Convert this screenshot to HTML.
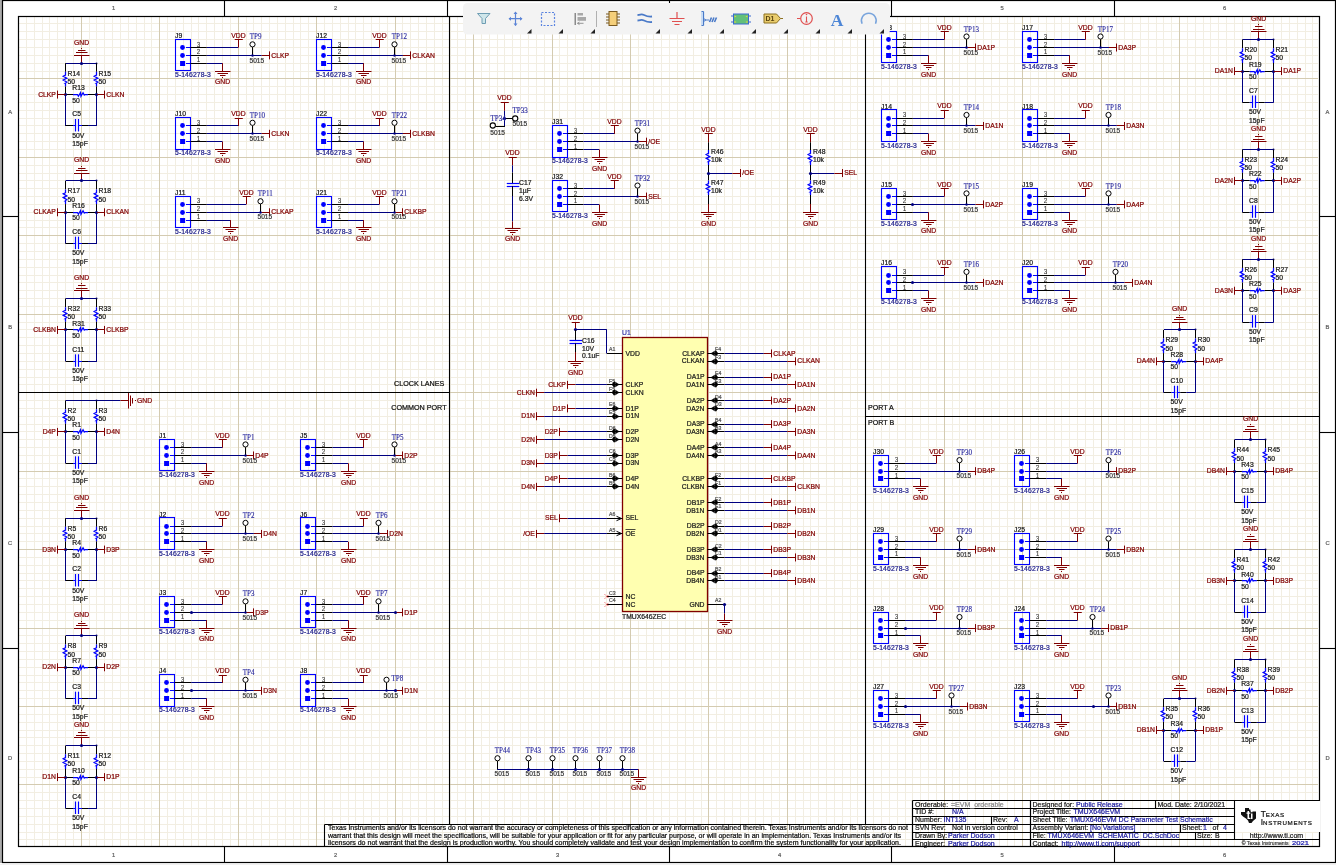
<!DOCTYPE html>
<html><head><meta charset="utf-8"><style>html,body{margin:0;padding:0;background:#fff;overflow:hidden}svg{display:block;will-change:transform}</style></head><body>
<svg width="1336" height="865" viewBox="0 0 1336 865">
<rect x="0" y="0" width="1336" height="865" fill="#ffffff"/>
<rect x="0" y="0" width="2" height="863" fill="#acacac"/>
<rect x="0" y="864" width="1336" height="1" fill="#f0f0f0"/>
<path d="M26.5,17V846M34.5,17V846M42.5,17V846M49.5,17V846M57.5,17V846M65.5,17V846M73.5,17V846M89.5,17V846M96.5,17V846M104.5,17V846M112.5,17V846M120.5,17V846M128.5,17V846M136.5,17V846M144.5,17V846M151.5,17V846M167.5,17V846M175.5,17V846M183.5,17V846M191.5,17V846M198.5,17V846M206.5,17V846M214.5,17V846M222.5,17V846M230.5,17V846M246.5,17V846M253.5,17V846M261.5,17V846M269.5,17V846M277.5,17V846M285.5,17V846M293.5,17V846M300.5,17V846M308.5,17V846M324.5,17V846M332.5,17V846M340.5,17V846M348.5,17V846M355.5,17V846M363.5,17V846M371.5,17V846M379.5,17V846M387.5,17V846M402.5,17V846M410.5,17V846M418.5,17V846M426.5,17V846M434.5,17V846M442.5,17V846M450.5,17V846M457.5,17V846M465.5,17V846M481.5,17V846M489.5,17V846M497.5,17V846M504.5,17V846M512.5,17V846M520.5,17V846M528.5,17V846M536.5,17V846M544.5,17V846M559.5,17V846M567.5,17V846M575.5,17V846M583.5,17V846M591.5,17V846M599.5,17V846M606.5,17V846M614.5,17V846M622.5,17V846M638.5,17V846M646.5,17V846M653.5,17V846M661.5,17V846M669.5,17V846M677.5,17V846M685.5,17V846M693.5,17V846M701.5,17V846M716.5,17V846M724.5,17V846M732.5,17V846M740.5,17V846M748.5,17V846M755.5,17V846M763.5,17V846M771.5,17V846M779.5,17V846M795.5,17V846M803.5,17V846M810.5,17V846M818.5,17V846M826.5,17V846M834.5,17V846M842.5,17V846M850.5,17V846M857.5,17V846M873.5,17V846M881.5,17V846M889.5,17V846M897.5,17V846M905.5,17V846M912.5,17V846M920.5,17V846M928.5,17V846M936.5,17V846M952.5,17V846M959.5,17V846M967.5,17V846M975.5,17V846M983.5,17V846M991.5,17V846M999.5,17V846M1007.5,17V846M1014.5,17V846M1030.5,17V846M1038.5,17V846M1046.5,17V846M1054.5,17V846M1061.5,17V846M1069.5,17V846M1077.5,17V846M1085.5,17V846M1093.5,17V846M1108.5,17V846M1116.5,17V846M1124.5,17V846M1132.5,17V846M1140.5,17V846M1148.5,17V846M1156.5,17V846M1163.5,17V846M1171.5,17V846M1187.5,17V846M1195.5,17V846M1203.5,17V846M1210.5,17V846M1218.5,17V846M1226.5,17V846M1234.5,17V846M1242.5,17V846M1250.5,17V846M1265.5,17V846M1273.5,17V846M1281.5,17V846M1289.5,17V846M1297.5,17V846M1305.5,17V846M1312.5,17V846M19,23.5H1318M19,31.5H1318M19,39.5H1318M19,47.5H1318M19,55.5H1318M19,63.5H1318M19,71.5H1318M19,86.5H1318M19,94.5H1318M19,102.5H1318M19,110.5H1318M19,118.5H1318M19,125.5H1318M19,133.5H1318M19,141.5H1318M19,149.5H1318M19,165.5H1318M19,173.5H1318M19,180.5H1318M19,188.5H1318M19,196.5H1318M19,204.5H1318M19,212.5H1318M19,220.5H1318M19,227.5H1318M19,243.5H1318M19,251.5H1318M19,259.5H1318M19,267.5H1318M19,275.5H1318M19,282.5H1318M19,290.5H1318M19,298.5H1318M19,306.5H1318M19,322.5H1318M19,329.5H1318M19,337.5H1318M19,345.5H1318M19,353.5H1318M19,361.5H1318M19,369.5H1318M19,377.5H1318M19,384.5H1318M19,400.5H1318M19,408.5H1318M19,416.5H1318M19,424.5H1318M19,431.5H1318M19,439.5H1318M19,447.5H1318M19,455.5H1318M19,463.5H1318M19,478.5H1318M19,486.5H1318M19,494.5H1318M19,502.5H1318M19,510.5H1318M19,518.5H1318M19,526.5H1318M19,533.5H1318M19,541.5H1318M19,557.5H1318M19,565.5H1318M19,573.5H1318M19,580.5H1318M19,588.5H1318M19,596.5H1318M19,604.5H1318M19,612.5H1318M19,620.5H1318M19,635.5H1318M19,643.5H1318M19,651.5H1318M19,659.5H1318M19,667.5H1318M19,675.5H1318M19,682.5H1318M19,690.5H1318M19,698.5H1318M19,714.5H1318M19,722.5H1318M19,730.5H1318M19,737.5H1318M19,745.5H1318M19,753.5H1318M19,761.5H1318M19,769.5H1318M19,777.5H1318M19,792.5H1318M19,800.5H1318M19,808.5H1318M19,816.5H1318M19,824.5H1318M19,832.5H1318M19,839.5H1318" stroke="#f2eee2" stroke-width="1" fill="none"/>
<path d="M81.5,17V846M159.5,17V846M238.5,17V846M316.5,17V846M395.5,17V846M473.5,17V846M552.5,17V846M630.5,17V846M708.5,17V846M787.5,17V846M865.5,17V846M944.5,17V846M1022.5,17V846M1101.5,17V846M1179.5,17V846M1258.5,17V846M19,78.5H1318M19,157.5H1318M19,235.5H1318M19,314.5H1318M19,392.5H1318M19,471.5H1318M19,549.5H1318M19,628.5H1318M19,706.5H1318M19,784.5H1318" stroke="#d4cbb1" stroke-width="1" fill="none"/>
<rect x="2.5" y="0.5" width="1333" height="862" fill="none" stroke="#000" stroke-width="1.2"/>
<rect x="18.5" y="16.5" width="1301" height="830" fill="none" stroke="#000" stroke-width="1.2"/>
<line x1="224.50" y1="0.00" x2="224.50" y2="16.50" stroke="#000" stroke-width="1.1"/>
<line x1="224.50" y1="846.50" x2="224.50" y2="862.50" stroke="#000" stroke-width="1.1"/>
<line x1="447.50" y1="0.00" x2="447.50" y2="16.50" stroke="#000" stroke-width="1.1"/>
<line x1="447.50" y1="846.50" x2="447.50" y2="862.50" stroke="#000" stroke-width="1.1"/>
<line x1="669.50" y1="0.00" x2="669.50" y2="16.50" stroke="#000" stroke-width="1.1"/>
<line x1="669.50" y1="846.50" x2="669.50" y2="862.50" stroke="#000" stroke-width="1.1"/>
<line x1="891.50" y1="0.00" x2="891.50" y2="16.50" stroke="#000" stroke-width="1.1"/>
<line x1="891.50" y1="846.50" x2="891.50" y2="862.50" stroke="#000" stroke-width="1.1"/>
<line x1="1114.50" y1="0.00" x2="1114.50" y2="16.50" stroke="#000" stroke-width="1.1"/>
<line x1="1114.50" y1="846.50" x2="1114.50" y2="862.50" stroke="#000" stroke-width="1.1"/>
<line x1="2.50" y1="216.50" x2="18.50" y2="216.50" stroke="#000" stroke-width="1.1"/>
<line x1="1319.50" y1="216.50" x2="1335.50" y2="216.50" stroke="#000" stroke-width="1.1"/>
<line x1="2.50" y1="432.50" x2="18.50" y2="432.50" stroke="#000" stroke-width="1.1"/>
<line x1="1319.50" y1="432.50" x2="1335.50" y2="432.50" stroke="#000" stroke-width="1.1"/>
<line x1="2.50" y1="648.50" x2="18.50" y2="648.50" stroke="#000" stroke-width="1.1"/>
<line x1="1319.50" y1="648.50" x2="1335.50" y2="648.50" stroke="#000" stroke-width="1.1"/>
<text x="113.50" y="10.19" fill="#606060" stroke="#606060" stroke-width="0.22" font-size="5.8" font-family='"Liberation Sans", sans-serif' text-anchor="middle" font-weight="normal" >1</text>
<text x="113.50" y="856.99" fill="#606060" stroke="#606060" stroke-width="0.22" font-size="5.8" font-family='"Liberation Sans", sans-serif' text-anchor="middle" font-weight="normal" >1</text>
<text x="335.50" y="10.19" fill="#606060" stroke="#606060" stroke-width="0.22" font-size="5.8" font-family='"Liberation Sans", sans-serif' text-anchor="middle" font-weight="normal" >2</text>
<text x="335.50" y="856.99" fill="#606060" stroke="#606060" stroke-width="0.22" font-size="5.8" font-family='"Liberation Sans", sans-serif' text-anchor="middle" font-weight="normal" >2</text>
<text x="557.50" y="10.19" fill="#606060" stroke="#606060" stroke-width="0.22" font-size="5.8" font-family='"Liberation Sans", sans-serif' text-anchor="middle" font-weight="normal" >3</text>
<text x="557.50" y="856.99" fill="#606060" stroke="#606060" stroke-width="0.22" font-size="5.8" font-family='"Liberation Sans", sans-serif' text-anchor="middle" font-weight="normal" >3</text>
<text x="779.50" y="10.19" fill="#606060" stroke="#606060" stroke-width="0.22" font-size="5.8" font-family='"Liberation Sans", sans-serif' text-anchor="middle" font-weight="normal" >4</text>
<text x="779.50" y="856.99" fill="#606060" stroke="#606060" stroke-width="0.22" font-size="5.8" font-family='"Liberation Sans", sans-serif' text-anchor="middle" font-weight="normal" >4</text>
<text x="1002.00" y="10.19" fill="#606060" stroke="#606060" stroke-width="0.22" font-size="5.8" font-family='"Liberation Sans", sans-serif' text-anchor="middle" font-weight="normal" >5</text>
<text x="1002.00" y="856.99" fill="#606060" stroke="#606060" stroke-width="0.22" font-size="5.8" font-family='"Liberation Sans", sans-serif' text-anchor="middle" font-weight="normal" >5</text>
<text x="1224.50" y="10.19" fill="#606060" stroke="#606060" stroke-width="0.22" font-size="5.8" font-family='"Liberation Sans", sans-serif' text-anchor="middle" font-weight="normal" >6</text>
<text x="1224.50" y="856.99" fill="#606060" stroke="#606060" stroke-width="0.22" font-size="5.8" font-family='"Liberation Sans", sans-serif' text-anchor="middle" font-weight="normal" >6</text>
<text x="10.20" y="113.79" fill="#606060" stroke="#606060" stroke-width="0.22" font-size="5.8" font-family='"Liberation Sans", sans-serif' text-anchor="middle" font-weight="normal" >A</text>
<text x="1327.50" y="113.79" fill="#606060" stroke="#606060" stroke-width="0.22" font-size="5.8" font-family='"Liberation Sans", sans-serif' text-anchor="middle" font-weight="normal" >A</text>
<text x="10.20" y="329.29" fill="#606060" stroke="#606060" stroke-width="0.22" font-size="5.8" font-family='"Liberation Sans", sans-serif' text-anchor="middle" font-weight="normal" >B</text>
<text x="1327.50" y="329.29" fill="#606060" stroke="#606060" stroke-width="0.22" font-size="5.8" font-family='"Liberation Sans", sans-serif' text-anchor="middle" font-weight="normal" >B</text>
<text x="10.20" y="544.79" fill="#606060" stroke="#606060" stroke-width="0.22" font-size="5.8" font-family='"Liberation Sans", sans-serif' text-anchor="middle" font-weight="normal" >C</text>
<text x="1327.50" y="544.79" fill="#606060" stroke="#606060" stroke-width="0.22" font-size="5.8" font-family='"Liberation Sans", sans-serif' text-anchor="middle" font-weight="normal" >C</text>
<text x="10.20" y="760.29" fill="#606060" stroke="#606060" stroke-width="0.22" font-size="5.8" font-family='"Liberation Sans", sans-serif' text-anchor="middle" font-weight="normal" >D</text>
<text x="1327.50" y="760.29" fill="#606060" stroke="#606060" stroke-width="0.22" font-size="5.8" font-family='"Liberation Sans", sans-serif' text-anchor="middle" font-weight="normal" >D</text>
<line x1="449.50" y1="16.50" x2="449.50" y2="824.50" stroke="#000" stroke-width="1.1"/>
<line x1="865.50" y1="16.50" x2="865.50" y2="824.50" stroke="#000" stroke-width="1.1"/>
<line x1="18.50" y1="392.50" x2="449.50" y2="392.50" stroke="#000" stroke-width="1.1"/>
<line x1="865.50" y1="416.50" x2="1319.50" y2="416.50" stroke="#000" stroke-width="1.1"/>
<text x="394.00" y="386.09" fill="#111" stroke="#111" stroke-width="0.22" font-size="7.2" font-family='"Liberation Sans", sans-serif' text-anchor="start" font-weight="normal" >CLOCK LANES</text>
<text x="391.20" y="409.69" fill="#111" stroke="#111" stroke-width="0.22" font-size="7.2" font-family='"Liberation Sans", sans-serif' text-anchor="start" font-weight="normal" >COMMON PORT</text>
<text x="868.00" y="409.76" fill="#111" stroke="#111" stroke-width="0.22" font-size="7.1" font-family='"Liberation Sans", sans-serif' text-anchor="start" font-weight="normal" >PORT A</text>
<text x="868.00" y="425.46" fill="#111" stroke="#111" stroke-width="0.22" font-size="7.1" font-family='"Liberation Sans", sans-serif' text-anchor="start" font-weight="normal" >PORT B</text>
<line x1="65.61" y1="63.50" x2="96.99" y2="63.50" stroke="#000080" stroke-width="1"/>
<line x1="81.50" y1="55.41" x2="81.50" y2="63.21" stroke="#800000" stroke-width="1"/>
<line x1="74.00" y1="55.50" x2="89.50" y2="55.50" stroke="#800000" stroke-width="1"/>
<line x1="76.00" y1="52.50" x2="87.50" y2="52.50" stroke="#800000" stroke-width="1"/>
<line x1="78.00" y1="50.50" x2="85.50" y2="50.50" stroke="#800000" stroke-width="1"/>
<rect x="81.00" y="48.00" width="1" height="1" fill="#800000"/>
<text x="81.50" y="44.76" fill="#800000" stroke="#800000" stroke-width="0.22" font-size="6.8" font-family='"Liberation Sans", sans-serif' text-anchor="middle" font-weight="normal" >GND</text>
<circle cx="81.50" cy="63.50" r="1.6" fill="#000080"/>
<circle cx="96.50" cy="63.50" r="1.0" fill="#000080"/>
<line x1="65.50" y1="63.21" x2="65.50" y2="71.81" stroke="#000000" stroke-width="1"/>
<path d="M65.50,71.81 L65.50,75.02 L63.20,76.19 L66.80,78.23 L63.20,79.99 L66.80,82.03 L65.30,83.20 L65.50,83.20 L65.50,86.41" fill="none" stroke="#0000FF" stroke-width="1.25"/>
<line x1="65.50" y1="86.41" x2="65.50" y2="94.59" stroke="#000000" stroke-width="1"/>
<line x1="65.50" y1="94.59" x2="65.50" y2="125.97" stroke="#000080" stroke-width="1"/>
<line x1="96.50" y1="63.21" x2="96.50" y2="71.81" stroke="#000000" stroke-width="1"/>
<path d="M96.50,71.81 L96.50,75.02 L94.20,76.19 L97.80,78.23 L94.20,79.99 L97.80,82.03 L96.30,83.20 L96.50,83.20 L96.50,86.41" fill="none" stroke="#0000FF" stroke-width="1.25"/>
<line x1="96.50" y1="86.41" x2="96.50" y2="94.59" stroke="#000000" stroke-width="1"/>
<line x1="96.50" y1="94.59" x2="96.50" y2="125.97" stroke="#000080" stroke-width="1"/>
<line x1="65.61" y1="94.50" x2="73.00" y2="94.50" stroke="#000000" stroke-width="1"/>
<path d="M73.00,94.50 L77.50,94.50 L78.40,96.30 L80.50,92.70 L80.95,96.30 L83.05,92.70 L84.25,95.00 L85.00,94.50 L88.00,94.50" fill="none" stroke="#0000FF" stroke-width="1.25"/>
<line x1="88.00" y1="94.50" x2="96.99" y2="94.50" stroke="#000000" stroke-width="1"/>
<circle cx="65.50" cy="94.50" r="1.6" fill="#000080"/>
<circle cx="96.50" cy="94.50" r="1.6" fill="#000080"/>
<line x1="65.61" y1="125.50" x2="73.00" y2="125.50" stroke="#000000" stroke-width="1"/>
<line x1="73.00" y1="125.50" x2="75.80" y2="125.50" stroke="#0000FF" stroke-width="1"/>
<line x1="78.80" y1="125.50" x2="82.00" y2="125.50" stroke="#0000FF" stroke-width="1"/>
<line x1="82.00" y1="125.50" x2="88.00" y2="125.50" stroke="#000000" stroke-width="1"/>
<line x1="88.00" y1="125.50" x2="96.99" y2="125.50" stroke="#000080" stroke-width="1"/>
<line x1="75.50" y1="118.97" x2="75.50" y2="131.47" stroke="#0000FF" stroke-width="1.2"/>
<line x1="78.50" y1="118.97" x2="78.50" y2="131.47" stroke="#0000FF" stroke-width="1.2"/>
<line x1="57.77" y1="94.50" x2="65.61" y2="94.50" stroke="#800000" stroke-width="1"/>
<line x1="96.99" y1="94.50" x2="104.83" y2="94.50" stroke="#800000" stroke-width="1"/>
<line x1="57.50" y1="90.59" x2="57.50" y2="98.59" stroke="#800000" stroke-width="1"/>
<text x="55.90" y="96.74" fill="#800000" stroke="#800000" stroke-width="0.22" font-size="6.8" font-family='"Liberation Sans", sans-serif' text-anchor="end" font-weight="normal" >CLKP</text>
<line x1="104.50" y1="90.59" x2="104.50" y2="98.59" stroke="#800000" stroke-width="1"/>
<text x="106.30" y="96.74" fill="#800000" stroke="#800000" stroke-width="0.22" font-size="6.8" font-family='"Liberation Sans", sans-serif' text-anchor="start" font-weight="normal" >CLKN</text>
<text x="67.50" y="75.56" fill="#1a1a1a" stroke="#1a1a1a" stroke-width="0.22" font-size="6.8" font-family='"Liberation Sans", sans-serif' text-anchor="start" font-weight="normal" >R14</text>
<text x="67.50" y="83.96" fill="#1a1a1a" stroke="#1a1a1a" stroke-width="0.22" font-size="6.8" font-family='"Liberation Sans", sans-serif' text-anchor="start" font-weight="normal" >50</text>
<text x="98.50" y="75.56" fill="#1a1a1a" stroke="#1a1a1a" stroke-width="0.22" font-size="6.8" font-family='"Liberation Sans", sans-serif' text-anchor="start" font-weight="normal" >R15</text>
<text x="98.50" y="83.96" fill="#1a1a1a" stroke="#1a1a1a" stroke-width="0.22" font-size="6.8" font-family='"Liberation Sans", sans-serif' text-anchor="start" font-weight="normal" >50</text>
<text x="72.30" y="90.16" fill="#1a1a1a" stroke="#1a1a1a" stroke-width="0.22" font-size="6.8" font-family='"Liberation Sans", sans-serif' text-anchor="start" font-weight="normal" >R13</text>
<text x="72.30" y="102.56" fill="#1a1a1a" stroke="#1a1a1a" stroke-width="0.22" font-size="6.8" font-family='"Liberation Sans", sans-serif' text-anchor="start" font-weight="normal" >50</text>
<text x="72.30" y="116.36" fill="#1a1a1a" stroke="#1a1a1a" stroke-width="0.22" font-size="6.8" font-family='"Liberation Sans", sans-serif' text-anchor="start" font-weight="normal" >C5</text>
<text x="72.30" y="137.76" fill="#1a1a1a" stroke="#1a1a1a" stroke-width="0.22" font-size="6.8" font-family='"Liberation Sans", sans-serif' text-anchor="start" font-weight="normal" >50V</text>
<text x="72.30" y="146.06" fill="#1a1a1a" stroke="#1a1a1a" stroke-width="0.22" font-size="6.8" font-family='"Liberation Sans", sans-serif' text-anchor="start" font-weight="normal" >15pF</text>
<line x1="65.61" y1="180.50" x2="96.99" y2="180.50" stroke="#000080" stroke-width="1"/>
<line x1="81.50" y1="173.08" x2="81.50" y2="180.88" stroke="#800000" stroke-width="1"/>
<line x1="74.00" y1="173.50" x2="89.50" y2="173.50" stroke="#800000" stroke-width="1"/>
<line x1="76.00" y1="170.50" x2="87.50" y2="170.50" stroke="#800000" stroke-width="1"/>
<line x1="78.00" y1="168.50" x2="85.50" y2="168.50" stroke="#800000" stroke-width="1"/>
<rect x="81.00" y="166.00" width="1" height="1" fill="#800000"/>
<text x="81.50" y="162.43" fill="#800000" stroke="#800000" stroke-width="0.22" font-size="6.8" font-family='"Liberation Sans", sans-serif' text-anchor="middle" font-weight="normal" >GND</text>
<circle cx="81.50" cy="180.50" r="1.6" fill="#000080"/>
<circle cx="96.50" cy="180.50" r="1.0" fill="#000080"/>
<line x1="65.50" y1="180.88" x2="65.50" y2="189.48" stroke="#000000" stroke-width="1"/>
<path d="M65.50,189.48 L65.50,192.70 L63.20,193.86 L66.80,195.91 L63.20,197.66 L66.80,199.70 L65.30,200.87 L65.50,200.87 L65.50,204.08" fill="none" stroke="#0000FF" stroke-width="1.25"/>
<line x1="65.50" y1="204.08" x2="65.50" y2="212.27" stroke="#000000" stroke-width="1"/>
<line x1="65.50" y1="212.27" x2="65.50" y2="243.65" stroke="#000080" stroke-width="1"/>
<line x1="96.50" y1="180.88" x2="96.50" y2="189.48" stroke="#000000" stroke-width="1"/>
<path d="M96.50,189.48 L96.50,192.70 L94.20,193.86 L97.80,195.91 L94.20,197.66 L97.80,199.70 L96.30,200.87 L96.50,200.87 L96.50,204.08" fill="none" stroke="#0000FF" stroke-width="1.25"/>
<line x1="96.50" y1="204.08" x2="96.50" y2="212.27" stroke="#000000" stroke-width="1"/>
<line x1="96.50" y1="212.27" x2="96.50" y2="243.65" stroke="#000080" stroke-width="1"/>
<line x1="65.61" y1="212.50" x2="73.00" y2="212.50" stroke="#000000" stroke-width="1"/>
<path d="M73.00,212.50 L77.50,212.50 L78.40,214.30 L80.50,210.70 L80.95,214.30 L83.05,210.70 L84.25,213.00 L85.00,212.50 L88.00,212.50" fill="none" stroke="#0000FF" stroke-width="1.25"/>
<line x1="88.00" y1="212.50" x2="96.99" y2="212.50" stroke="#000000" stroke-width="1"/>
<circle cx="65.50" cy="212.50" r="1.6" fill="#000080"/>
<circle cx="96.50" cy="212.50" r="1.6" fill="#000080"/>
<line x1="65.61" y1="243.50" x2="73.00" y2="243.50" stroke="#000000" stroke-width="1"/>
<line x1="73.00" y1="243.50" x2="75.80" y2="243.50" stroke="#0000FF" stroke-width="1"/>
<line x1="78.80" y1="243.50" x2="82.00" y2="243.50" stroke="#0000FF" stroke-width="1"/>
<line x1="82.00" y1="243.50" x2="88.00" y2="243.50" stroke="#000000" stroke-width="1"/>
<line x1="88.00" y1="243.50" x2="96.99" y2="243.50" stroke="#000080" stroke-width="1"/>
<line x1="75.50" y1="236.65" x2="75.50" y2="249.15" stroke="#0000FF" stroke-width="1.2"/>
<line x1="78.50" y1="236.65" x2="78.50" y2="249.15" stroke="#0000FF" stroke-width="1.2"/>
<line x1="57.77" y1="212.50" x2="65.61" y2="212.50" stroke="#800000" stroke-width="1"/>
<line x1="96.99" y1="212.50" x2="104.83" y2="212.50" stroke="#800000" stroke-width="1"/>
<line x1="57.50" y1="208.27" x2="57.50" y2="216.27" stroke="#800000" stroke-width="1"/>
<text x="55.90" y="214.41" fill="#800000" stroke="#800000" stroke-width="0.22" font-size="6.8" font-family='"Liberation Sans", sans-serif' text-anchor="end" font-weight="normal" >CLKAP</text>
<line x1="104.50" y1="208.27" x2="104.50" y2="216.27" stroke="#800000" stroke-width="1"/>
<text x="106.30" y="214.41" fill="#800000" stroke="#800000" stroke-width="0.22" font-size="6.8" font-family='"Liberation Sans", sans-serif' text-anchor="start" font-weight="normal" >CLKAN</text>
<text x="67.50" y="193.23" fill="#1a1a1a" stroke="#1a1a1a" stroke-width="0.22" font-size="6.8" font-family='"Liberation Sans", sans-serif' text-anchor="start" font-weight="normal" >R17</text>
<text x="67.50" y="201.63" fill="#1a1a1a" stroke="#1a1a1a" stroke-width="0.22" font-size="6.8" font-family='"Liberation Sans", sans-serif' text-anchor="start" font-weight="normal" >50</text>
<text x="98.50" y="193.23" fill="#1a1a1a" stroke="#1a1a1a" stroke-width="0.22" font-size="6.8" font-family='"Liberation Sans", sans-serif' text-anchor="start" font-weight="normal" >R18</text>
<text x="98.50" y="201.63" fill="#1a1a1a" stroke="#1a1a1a" stroke-width="0.22" font-size="6.8" font-family='"Liberation Sans", sans-serif' text-anchor="start" font-weight="normal" >50</text>
<text x="72.30" y="207.83" fill="#1a1a1a" stroke="#1a1a1a" stroke-width="0.22" font-size="6.8" font-family='"Liberation Sans", sans-serif' text-anchor="start" font-weight="normal" >R16</text>
<text x="72.30" y="220.23" fill="#1a1a1a" stroke="#1a1a1a" stroke-width="0.22" font-size="6.8" font-family='"Liberation Sans", sans-serif' text-anchor="start" font-weight="normal" >50</text>
<text x="72.30" y="234.03" fill="#1a1a1a" stroke="#1a1a1a" stroke-width="0.22" font-size="6.8" font-family='"Liberation Sans", sans-serif' text-anchor="start" font-weight="normal" >C6</text>
<text x="72.30" y="255.43" fill="#1a1a1a" stroke="#1a1a1a" stroke-width="0.22" font-size="6.8" font-family='"Liberation Sans", sans-serif' text-anchor="start" font-weight="normal" >50V</text>
<text x="72.30" y="263.73" fill="#1a1a1a" stroke="#1a1a1a" stroke-width="0.22" font-size="6.8" font-family='"Liberation Sans", sans-serif' text-anchor="start" font-weight="normal" >15pF</text>
<line x1="65.61" y1="298.50" x2="96.99" y2="298.50" stroke="#000080" stroke-width="1"/>
<line x1="81.50" y1="290.76" x2="81.50" y2="298.56" stroke="#800000" stroke-width="1"/>
<line x1="74.00" y1="290.50" x2="89.50" y2="290.50" stroke="#800000" stroke-width="1"/>
<line x1="76.00" y1="288.50" x2="87.50" y2="288.50" stroke="#800000" stroke-width="1"/>
<line x1="78.00" y1="285.50" x2="85.50" y2="285.50" stroke="#800000" stroke-width="1"/>
<rect x="81.00" y="283.00" width="1" height="1" fill="#800000"/>
<text x="81.50" y="280.11" fill="#800000" stroke="#800000" stroke-width="0.22" font-size="6.8" font-family='"Liberation Sans", sans-serif' text-anchor="middle" font-weight="normal" >GND</text>
<circle cx="81.50" cy="298.50" r="1.6" fill="#000080"/>
<circle cx="96.50" cy="298.50" r="1.0" fill="#000080"/>
<line x1="65.50" y1="298.56" x2="65.50" y2="307.16" stroke="#000000" stroke-width="1"/>
<path d="M65.50,307.16 L65.50,310.37 L63.20,311.54 L66.80,313.58 L63.20,315.34 L66.80,317.38 L65.30,318.55 L65.50,318.55 L65.50,321.76" fill="none" stroke="#0000FF" stroke-width="1.25"/>
<line x1="65.50" y1="321.76" x2="65.50" y2="329.94" stroke="#000000" stroke-width="1"/>
<line x1="65.50" y1="329.94" x2="65.50" y2="361.32" stroke="#000080" stroke-width="1"/>
<line x1="96.50" y1="298.56" x2="96.50" y2="307.16" stroke="#000000" stroke-width="1"/>
<path d="M96.50,307.16 L96.50,310.37 L94.20,311.54 L97.80,313.58 L94.20,315.34 L97.80,317.38 L96.30,318.55 L96.50,318.55 L96.50,321.76" fill="none" stroke="#0000FF" stroke-width="1.25"/>
<line x1="96.50" y1="321.76" x2="96.50" y2="329.94" stroke="#000000" stroke-width="1"/>
<line x1="96.50" y1="329.94" x2="96.50" y2="361.32" stroke="#000080" stroke-width="1"/>
<line x1="65.61" y1="329.50" x2="73.00" y2="329.50" stroke="#000000" stroke-width="1"/>
<path d="M73.00,329.50 L77.50,329.50 L78.40,331.30 L80.50,327.70 L80.95,331.30 L83.05,327.70 L84.25,330.00 L85.00,329.50 L88.00,329.50" fill="none" stroke="#0000FF" stroke-width="1.25"/>
<line x1="88.00" y1="329.50" x2="96.99" y2="329.50" stroke="#000000" stroke-width="1"/>
<circle cx="65.50" cy="329.50" r="1.6" fill="#000080"/>
<circle cx="96.50" cy="329.50" r="1.6" fill="#000080"/>
<line x1="65.61" y1="361.50" x2="73.00" y2="361.50" stroke="#000000" stroke-width="1"/>
<line x1="73.00" y1="361.50" x2="75.80" y2="361.50" stroke="#0000FF" stroke-width="1"/>
<line x1="78.80" y1="361.50" x2="82.00" y2="361.50" stroke="#0000FF" stroke-width="1"/>
<line x1="82.00" y1="361.50" x2="88.00" y2="361.50" stroke="#000000" stroke-width="1"/>
<line x1="88.00" y1="361.50" x2="96.99" y2="361.50" stroke="#000080" stroke-width="1"/>
<line x1="75.50" y1="354.32" x2="75.50" y2="366.82" stroke="#0000FF" stroke-width="1.2"/>
<line x1="78.50" y1="354.32" x2="78.50" y2="366.82" stroke="#0000FF" stroke-width="1.2"/>
<line x1="57.77" y1="329.50" x2="65.61" y2="329.50" stroke="#800000" stroke-width="1"/>
<line x1="96.99" y1="329.50" x2="104.83" y2="329.50" stroke="#800000" stroke-width="1"/>
<line x1="57.50" y1="325.94" x2="57.50" y2="333.94" stroke="#800000" stroke-width="1"/>
<text x="55.90" y="332.09" fill="#800000" stroke="#800000" stroke-width="0.22" font-size="6.8" font-family='"Liberation Sans", sans-serif' text-anchor="end" font-weight="normal" >CLKBN</text>
<line x1="104.50" y1="325.94" x2="104.50" y2="333.94" stroke="#800000" stroke-width="1"/>
<text x="106.30" y="332.09" fill="#800000" stroke="#800000" stroke-width="0.22" font-size="6.8" font-family='"Liberation Sans", sans-serif' text-anchor="start" font-weight="normal" >CLKBP</text>
<text x="67.50" y="310.91" fill="#1a1a1a" stroke="#1a1a1a" stroke-width="0.22" font-size="6.8" font-family='"Liberation Sans", sans-serif' text-anchor="start" font-weight="normal" >R32</text>
<text x="67.50" y="319.31" fill="#1a1a1a" stroke="#1a1a1a" stroke-width="0.22" font-size="6.8" font-family='"Liberation Sans", sans-serif' text-anchor="start" font-weight="normal" >50</text>
<text x="98.50" y="310.91" fill="#1a1a1a" stroke="#1a1a1a" stroke-width="0.22" font-size="6.8" font-family='"Liberation Sans", sans-serif' text-anchor="start" font-weight="normal" >R33</text>
<text x="98.50" y="319.31" fill="#1a1a1a" stroke="#1a1a1a" stroke-width="0.22" font-size="6.8" font-family='"Liberation Sans", sans-serif' text-anchor="start" font-weight="normal" >50</text>
<text x="72.30" y="325.51" fill="#1a1a1a" stroke="#1a1a1a" stroke-width="0.22" font-size="6.8" font-family='"Liberation Sans", sans-serif' text-anchor="start" font-weight="normal" >R31</text>
<text x="72.30" y="337.91" fill="#1a1a1a" stroke="#1a1a1a" stroke-width="0.22" font-size="6.8" font-family='"Liberation Sans", sans-serif' text-anchor="start" font-weight="normal" >50</text>
<text x="72.30" y="351.71" fill="#1a1a1a" stroke="#1a1a1a" stroke-width="0.22" font-size="6.8" font-family='"Liberation Sans", sans-serif' text-anchor="start" font-weight="normal" >C11</text>
<text x="72.30" y="373.11" fill="#1a1a1a" stroke="#1a1a1a" stroke-width="0.22" font-size="6.8" font-family='"Liberation Sans", sans-serif' text-anchor="start" font-weight="normal" >50V</text>
<text x="72.30" y="381.41" fill="#1a1a1a" stroke="#1a1a1a" stroke-width="0.22" font-size="6.8" font-family='"Liberation Sans", sans-serif' text-anchor="start" font-weight="normal" >15pF</text>
<line x1="65.61" y1="400.50" x2="120.53" y2="400.50" stroke="#000080" stroke-width="1"/>
<line x1="120.53" y1="400.50" x2="128.37" y2="400.50" stroke="#800000" stroke-width="1"/>
<line x1="128.50" y1="393.04" x2="128.50" y2="408.54" stroke="#800000" stroke-width="1"/>
<line x1="130.50" y1="395.54" x2="130.50" y2="406.04" stroke="#800000" stroke-width="1"/>
<line x1="132.50" y1="398.04" x2="132.50" y2="403.54" stroke="#800000" stroke-width="1"/>
<rect x="135.00" y="400.00" width="1" height="1" fill="#800000"/>
<text x="137.00" y="402.69" fill="#800000" stroke="#800000" stroke-width="0.22" font-size="6.8" font-family='"Liberation Sans", sans-serif' text-anchor="start" font-weight="normal" >GND</text>
<circle cx="96.50" cy="400.50" r="1.0" fill="#000080"/>
<line x1="65.50" y1="400.54" x2="65.50" y2="409.14" stroke="#000000" stroke-width="1"/>
<path d="M65.50,409.14 L65.50,412.36 L63.20,413.52 L66.80,415.57 L63.20,417.32 L66.80,419.36 L65.30,420.53 L65.50,420.53 L65.50,423.74" fill="none" stroke="#0000FF" stroke-width="1.25"/>
<line x1="65.50" y1="423.74" x2="65.50" y2="431.92" stroke="#000000" stroke-width="1"/>
<line x1="65.50" y1="431.92" x2="65.50" y2="463.30" stroke="#000080" stroke-width="1"/>
<line x1="96.50" y1="400.54" x2="96.50" y2="409.14" stroke="#000000" stroke-width="1"/>
<path d="M96.50,409.14 L96.50,412.36 L94.20,413.52 L97.80,415.57 L94.20,417.32 L97.80,419.36 L96.30,420.53 L96.50,420.53 L96.50,423.74" fill="none" stroke="#0000FF" stroke-width="1.25"/>
<line x1="96.50" y1="423.74" x2="96.50" y2="431.92" stroke="#000000" stroke-width="1"/>
<line x1="96.50" y1="431.92" x2="96.50" y2="463.30" stroke="#000080" stroke-width="1"/>
<line x1="65.61" y1="431.50" x2="73.00" y2="431.50" stroke="#000000" stroke-width="1"/>
<path d="M73.00,431.50 L77.50,431.50 L78.40,433.30 L80.50,429.70 L80.95,433.30 L83.05,429.70 L84.25,432.00 L85.00,431.50 L88.00,431.50" fill="none" stroke="#0000FF" stroke-width="1.25"/>
<line x1="88.00" y1="431.50" x2="96.99" y2="431.50" stroke="#000000" stroke-width="1"/>
<circle cx="65.50" cy="431.50" r="1.6" fill="#000080"/>
<circle cx="96.50" cy="431.50" r="1.6" fill="#000080"/>
<line x1="65.61" y1="463.50" x2="73.00" y2="463.50" stroke="#000000" stroke-width="1"/>
<line x1="73.00" y1="463.50" x2="75.80" y2="463.50" stroke="#0000FF" stroke-width="1"/>
<line x1="78.80" y1="463.50" x2="82.00" y2="463.50" stroke="#0000FF" stroke-width="1"/>
<line x1="82.00" y1="463.50" x2="88.00" y2="463.50" stroke="#000000" stroke-width="1"/>
<line x1="88.00" y1="463.50" x2="96.99" y2="463.50" stroke="#000080" stroke-width="1"/>
<line x1="75.50" y1="456.30" x2="75.50" y2="468.80" stroke="#0000FF" stroke-width="1.2"/>
<line x1="78.50" y1="456.30" x2="78.50" y2="468.80" stroke="#0000FF" stroke-width="1.2"/>
<line x1="57.77" y1="431.50" x2="65.61" y2="431.50" stroke="#800000" stroke-width="1"/>
<line x1="96.99" y1="431.50" x2="104.83" y2="431.50" stroke="#800000" stroke-width="1"/>
<line x1="57.50" y1="427.92" x2="57.50" y2="435.92" stroke="#800000" stroke-width="1"/>
<text x="55.90" y="434.07" fill="#800000" stroke="#800000" stroke-width="0.22" font-size="6.8" font-family='"Liberation Sans", sans-serif' text-anchor="end" font-weight="normal" >D4P</text>
<line x1="104.50" y1="427.92" x2="104.50" y2="435.92" stroke="#800000" stroke-width="1"/>
<text x="106.30" y="434.07" fill="#800000" stroke="#800000" stroke-width="0.22" font-size="6.8" font-family='"Liberation Sans", sans-serif' text-anchor="start" font-weight="normal" >D4N</text>
<text x="67.50" y="412.89" fill="#1a1a1a" stroke="#1a1a1a" stroke-width="0.22" font-size="6.8" font-family='"Liberation Sans", sans-serif' text-anchor="start" font-weight="normal" >R2</text>
<text x="67.50" y="421.29" fill="#1a1a1a" stroke="#1a1a1a" stroke-width="0.22" font-size="6.8" font-family='"Liberation Sans", sans-serif' text-anchor="start" font-weight="normal" >50</text>
<text x="98.50" y="412.89" fill="#1a1a1a" stroke="#1a1a1a" stroke-width="0.22" font-size="6.8" font-family='"Liberation Sans", sans-serif' text-anchor="start" font-weight="normal" >R3</text>
<text x="98.50" y="421.29" fill="#1a1a1a" stroke="#1a1a1a" stroke-width="0.22" font-size="6.8" font-family='"Liberation Sans", sans-serif' text-anchor="start" font-weight="normal" >50</text>
<text x="72.30" y="427.49" fill="#1a1a1a" stroke="#1a1a1a" stroke-width="0.22" font-size="6.8" font-family='"Liberation Sans", sans-serif' text-anchor="start" font-weight="normal" >R1</text>
<text x="72.30" y="439.89" fill="#1a1a1a" stroke="#1a1a1a" stroke-width="0.22" font-size="6.8" font-family='"Liberation Sans", sans-serif' text-anchor="start" font-weight="normal" >50</text>
<text x="72.30" y="453.69" fill="#1a1a1a" stroke="#1a1a1a" stroke-width="0.22" font-size="6.8" font-family='"Liberation Sans", sans-serif' text-anchor="start" font-weight="normal" >C1</text>
<text x="72.30" y="475.09" fill="#1a1a1a" stroke="#1a1a1a" stroke-width="0.22" font-size="6.8" font-family='"Liberation Sans", sans-serif' text-anchor="start" font-weight="normal" >50V</text>
<text x="72.30" y="483.39" fill="#1a1a1a" stroke="#1a1a1a" stroke-width="0.22" font-size="6.8" font-family='"Liberation Sans", sans-serif' text-anchor="start" font-weight="normal" >15pF</text>
<line x1="65.61" y1="518.50" x2="96.99" y2="518.50" stroke="#000080" stroke-width="1"/>
<line x1="81.50" y1="510.42" x2="81.50" y2="518.22" stroke="#800000" stroke-width="1"/>
<line x1="74.00" y1="510.50" x2="89.50" y2="510.50" stroke="#800000" stroke-width="1"/>
<line x1="76.00" y1="507.50" x2="87.50" y2="507.50" stroke="#800000" stroke-width="1"/>
<line x1="78.00" y1="505.50" x2="85.50" y2="505.50" stroke="#800000" stroke-width="1"/>
<rect x="81.00" y="503.00" width="1" height="1" fill="#800000"/>
<text x="81.50" y="499.77" fill="#800000" stroke="#800000" stroke-width="0.22" font-size="6.8" font-family='"Liberation Sans", sans-serif' text-anchor="middle" font-weight="normal" >GND</text>
<circle cx="81.50" cy="518.50" r="1.6" fill="#000080"/>
<circle cx="96.50" cy="518.50" r="1.0" fill="#000080"/>
<line x1="65.50" y1="518.22" x2="65.50" y2="526.82" stroke="#000000" stroke-width="1"/>
<path d="M65.50,526.82 L65.50,530.03 L63.20,531.20 L66.80,533.24 L63.20,535.00 L66.80,537.04 L65.30,538.21 L65.50,538.21 L65.50,541.42" fill="none" stroke="#0000FF" stroke-width="1.25"/>
<line x1="65.50" y1="541.42" x2="65.50" y2="549.60" stroke="#000000" stroke-width="1"/>
<line x1="65.50" y1="549.60" x2="65.50" y2="580.98" stroke="#000080" stroke-width="1"/>
<line x1="96.50" y1="518.22" x2="96.50" y2="526.82" stroke="#000000" stroke-width="1"/>
<path d="M96.50,526.82 L96.50,530.03 L94.20,531.20 L97.80,533.24 L94.20,535.00 L97.80,537.04 L96.30,538.21 L96.50,538.21 L96.50,541.42" fill="none" stroke="#0000FF" stroke-width="1.25"/>
<line x1="96.50" y1="541.42" x2="96.50" y2="549.60" stroke="#000000" stroke-width="1"/>
<line x1="96.50" y1="549.60" x2="96.50" y2="580.98" stroke="#000080" stroke-width="1"/>
<line x1="65.61" y1="549.50" x2="73.00" y2="549.50" stroke="#000000" stroke-width="1"/>
<path d="M73.00,549.50 L77.50,549.50 L78.40,551.30 L80.50,547.70 L80.95,551.30 L83.05,547.70 L84.25,550.00 L85.00,549.50 L88.00,549.50" fill="none" stroke="#0000FF" stroke-width="1.25"/>
<line x1="88.00" y1="549.50" x2="96.99" y2="549.50" stroke="#000000" stroke-width="1"/>
<circle cx="65.50" cy="549.50" r="1.6" fill="#000080"/>
<circle cx="96.50" cy="549.50" r="1.6" fill="#000080"/>
<line x1="65.61" y1="580.50" x2="73.00" y2="580.50" stroke="#000000" stroke-width="1"/>
<line x1="73.00" y1="580.50" x2="75.80" y2="580.50" stroke="#0000FF" stroke-width="1"/>
<line x1="78.80" y1="580.50" x2="82.00" y2="580.50" stroke="#0000FF" stroke-width="1"/>
<line x1="82.00" y1="580.50" x2="88.00" y2="580.50" stroke="#000000" stroke-width="1"/>
<line x1="88.00" y1="580.50" x2="96.99" y2="580.50" stroke="#000080" stroke-width="1"/>
<line x1="75.50" y1="573.98" x2="75.50" y2="586.48" stroke="#0000FF" stroke-width="1.2"/>
<line x1="78.50" y1="573.98" x2="78.50" y2="586.48" stroke="#0000FF" stroke-width="1.2"/>
<line x1="57.77" y1="549.50" x2="65.61" y2="549.50" stroke="#800000" stroke-width="1"/>
<line x1="96.99" y1="549.50" x2="104.83" y2="549.50" stroke="#800000" stroke-width="1"/>
<line x1="57.50" y1="545.60" x2="57.50" y2="553.60" stroke="#800000" stroke-width="1"/>
<text x="55.90" y="551.75" fill="#800000" stroke="#800000" stroke-width="0.22" font-size="6.8" font-family='"Liberation Sans", sans-serif' text-anchor="end" font-weight="normal" >D3N</text>
<line x1="104.50" y1="545.60" x2="104.50" y2="553.60" stroke="#800000" stroke-width="1"/>
<text x="106.30" y="551.75" fill="#800000" stroke="#800000" stroke-width="0.22" font-size="6.8" font-family='"Liberation Sans", sans-serif' text-anchor="start" font-weight="normal" >D3P</text>
<text x="67.50" y="530.57" fill="#1a1a1a" stroke="#1a1a1a" stroke-width="0.22" font-size="6.8" font-family='"Liberation Sans", sans-serif' text-anchor="start" font-weight="normal" >R5</text>
<text x="67.50" y="538.97" fill="#1a1a1a" stroke="#1a1a1a" stroke-width="0.22" font-size="6.8" font-family='"Liberation Sans", sans-serif' text-anchor="start" font-weight="normal" >50</text>
<text x="98.50" y="530.57" fill="#1a1a1a" stroke="#1a1a1a" stroke-width="0.22" font-size="6.8" font-family='"Liberation Sans", sans-serif' text-anchor="start" font-weight="normal" >R6</text>
<text x="98.50" y="538.97" fill="#1a1a1a" stroke="#1a1a1a" stroke-width="0.22" font-size="6.8" font-family='"Liberation Sans", sans-serif' text-anchor="start" font-weight="normal" >50</text>
<text x="72.30" y="545.17" fill="#1a1a1a" stroke="#1a1a1a" stroke-width="0.22" font-size="6.8" font-family='"Liberation Sans", sans-serif' text-anchor="start" font-weight="normal" >R4</text>
<text x="72.30" y="557.57" fill="#1a1a1a" stroke="#1a1a1a" stroke-width="0.22" font-size="6.8" font-family='"Liberation Sans", sans-serif' text-anchor="start" font-weight="normal" >50</text>
<text x="72.30" y="571.37" fill="#1a1a1a" stroke="#1a1a1a" stroke-width="0.22" font-size="6.8" font-family='"Liberation Sans", sans-serif' text-anchor="start" font-weight="normal" >C2</text>
<text x="72.30" y="592.77" fill="#1a1a1a" stroke="#1a1a1a" stroke-width="0.22" font-size="6.8" font-family='"Liberation Sans", sans-serif' text-anchor="start" font-weight="normal" >50V</text>
<text x="72.30" y="601.07" fill="#1a1a1a" stroke="#1a1a1a" stroke-width="0.22" font-size="6.8" font-family='"Liberation Sans", sans-serif' text-anchor="start" font-weight="normal" >15pF</text>
<line x1="65.61" y1="635.50" x2="96.99" y2="635.50" stroke="#000080" stroke-width="1"/>
<line x1="81.50" y1="628.10" x2="81.50" y2="635.89" stroke="#800000" stroke-width="1"/>
<line x1="74.00" y1="628.50" x2="89.50" y2="628.50" stroke="#800000" stroke-width="1"/>
<line x1="76.00" y1="625.50" x2="87.50" y2="625.50" stroke="#800000" stroke-width="1"/>
<line x1="78.00" y1="623.50" x2="85.50" y2="623.50" stroke="#800000" stroke-width="1"/>
<rect x="81.00" y="621.00" width="1" height="1" fill="#800000"/>
<text x="81.50" y="617.44" fill="#800000" stroke="#800000" stroke-width="0.22" font-size="6.8" font-family='"Liberation Sans", sans-serif' text-anchor="middle" font-weight="normal" >GND</text>
<circle cx="81.50" cy="635.50" r="1.6" fill="#000080"/>
<circle cx="96.50" cy="635.50" r="1.0" fill="#000080"/>
<line x1="65.50" y1="635.89" x2="65.50" y2="644.50" stroke="#000000" stroke-width="1"/>
<path d="M65.50,644.50 L65.50,647.71 L63.20,648.88 L66.80,650.92 L63.20,652.67 L66.80,654.72 L65.30,655.88 L65.50,655.88 L65.50,659.10" fill="none" stroke="#0000FF" stroke-width="1.25"/>
<line x1="65.50" y1="659.10" x2="65.50" y2="667.27" stroke="#000000" stroke-width="1"/>
<line x1="65.50" y1="667.27" x2="65.50" y2="698.65" stroke="#000080" stroke-width="1"/>
<line x1="96.50" y1="635.89" x2="96.50" y2="644.50" stroke="#000000" stroke-width="1"/>
<path d="M96.50,644.50 L96.50,647.71 L94.20,648.88 L97.80,650.92 L94.20,652.67 L97.80,654.72 L96.30,655.88 L96.50,655.88 L96.50,659.10" fill="none" stroke="#0000FF" stroke-width="1.25"/>
<line x1="96.50" y1="659.10" x2="96.50" y2="667.27" stroke="#000000" stroke-width="1"/>
<line x1="96.50" y1="667.27" x2="96.50" y2="698.65" stroke="#000080" stroke-width="1"/>
<line x1="65.61" y1="667.50" x2="73.00" y2="667.50" stroke="#000000" stroke-width="1"/>
<path d="M73.00,667.50 L77.50,667.50 L78.40,669.30 L80.50,665.70 L80.95,669.30 L83.05,665.70 L84.25,668.00 L85.00,667.50 L88.00,667.50" fill="none" stroke="#0000FF" stroke-width="1.25"/>
<line x1="88.00" y1="667.50" x2="96.99" y2="667.50" stroke="#000000" stroke-width="1"/>
<circle cx="65.50" cy="667.50" r="1.6" fill="#000080"/>
<circle cx="96.50" cy="667.50" r="1.6" fill="#000080"/>
<line x1="65.61" y1="698.50" x2="73.00" y2="698.50" stroke="#000000" stroke-width="1"/>
<line x1="73.00" y1="698.50" x2="75.80" y2="698.50" stroke="#0000FF" stroke-width="1"/>
<line x1="78.80" y1="698.50" x2="82.00" y2="698.50" stroke="#0000FF" stroke-width="1"/>
<line x1="82.00" y1="698.50" x2="88.00" y2="698.50" stroke="#000000" stroke-width="1"/>
<line x1="88.00" y1="698.50" x2="96.99" y2="698.50" stroke="#000080" stroke-width="1"/>
<line x1="75.50" y1="691.65" x2="75.50" y2="704.15" stroke="#0000FF" stroke-width="1.2"/>
<line x1="78.50" y1="691.65" x2="78.50" y2="704.15" stroke="#0000FF" stroke-width="1.2"/>
<line x1="57.77" y1="667.50" x2="65.61" y2="667.50" stroke="#800000" stroke-width="1"/>
<line x1="96.99" y1="667.50" x2="104.83" y2="667.50" stroke="#800000" stroke-width="1"/>
<line x1="57.50" y1="663.27" x2="57.50" y2="671.27" stroke="#800000" stroke-width="1"/>
<text x="55.90" y="669.42" fill="#800000" stroke="#800000" stroke-width="0.22" font-size="6.8" font-family='"Liberation Sans", sans-serif' text-anchor="end" font-weight="normal" >D2N</text>
<line x1="104.50" y1="663.27" x2="104.50" y2="671.27" stroke="#800000" stroke-width="1"/>
<text x="106.30" y="669.42" fill="#800000" stroke="#800000" stroke-width="0.22" font-size="6.8" font-family='"Liberation Sans", sans-serif' text-anchor="start" font-weight="normal" >D2P</text>
<text x="67.50" y="648.24" fill="#1a1a1a" stroke="#1a1a1a" stroke-width="0.22" font-size="6.8" font-family='"Liberation Sans", sans-serif' text-anchor="start" font-weight="normal" >R8</text>
<text x="67.50" y="656.64" fill="#1a1a1a" stroke="#1a1a1a" stroke-width="0.22" font-size="6.8" font-family='"Liberation Sans", sans-serif' text-anchor="start" font-weight="normal" >50</text>
<text x="98.50" y="648.24" fill="#1a1a1a" stroke="#1a1a1a" stroke-width="0.22" font-size="6.8" font-family='"Liberation Sans", sans-serif' text-anchor="start" font-weight="normal" >R9</text>
<text x="98.50" y="656.64" fill="#1a1a1a" stroke="#1a1a1a" stroke-width="0.22" font-size="6.8" font-family='"Liberation Sans", sans-serif' text-anchor="start" font-weight="normal" >50</text>
<text x="72.30" y="662.84" fill="#1a1a1a" stroke="#1a1a1a" stroke-width="0.22" font-size="6.8" font-family='"Liberation Sans", sans-serif' text-anchor="start" font-weight="normal" >R7</text>
<text x="72.30" y="675.24" fill="#1a1a1a" stroke="#1a1a1a" stroke-width="0.22" font-size="6.8" font-family='"Liberation Sans", sans-serif' text-anchor="start" font-weight="normal" >50</text>
<text x="72.30" y="689.04" fill="#1a1a1a" stroke="#1a1a1a" stroke-width="0.22" font-size="6.8" font-family='"Liberation Sans", sans-serif' text-anchor="start" font-weight="normal" >C3</text>
<text x="72.30" y="710.44" fill="#1a1a1a" stroke="#1a1a1a" stroke-width="0.22" font-size="6.8" font-family='"Liberation Sans", sans-serif' text-anchor="start" font-weight="normal" >50V</text>
<text x="72.30" y="718.74" fill="#1a1a1a" stroke="#1a1a1a" stroke-width="0.22" font-size="6.8" font-family='"Liberation Sans", sans-serif' text-anchor="start" font-weight="normal" >15pF</text>
<line x1="65.61" y1="745.50" x2="96.99" y2="745.50" stroke="#000080" stroke-width="1"/>
<line x1="81.50" y1="737.92" x2="81.50" y2="745.72" stroke="#800000" stroke-width="1"/>
<line x1="74.00" y1="737.50" x2="89.50" y2="737.50" stroke="#800000" stroke-width="1"/>
<line x1="76.00" y1="735.50" x2="87.50" y2="735.50" stroke="#800000" stroke-width="1"/>
<line x1="78.00" y1="732.50" x2="85.50" y2="732.50" stroke="#800000" stroke-width="1"/>
<rect x="81.00" y="730.00" width="1" height="1" fill="#800000"/>
<text x="81.50" y="727.27" fill="#800000" stroke="#800000" stroke-width="0.22" font-size="6.8" font-family='"Liberation Sans", sans-serif' text-anchor="middle" font-weight="normal" >GND</text>
<circle cx="81.50" cy="745.50" r="1.6" fill="#000080"/>
<circle cx="96.50" cy="745.50" r="1.0" fill="#000080"/>
<line x1="65.50" y1="745.72" x2="65.50" y2="754.32" stroke="#000000" stroke-width="1"/>
<path d="M65.50,754.32 L65.50,757.54 L63.20,758.70 L66.80,760.75 L63.20,762.50 L66.80,764.54 L65.30,765.71 L65.50,765.71 L65.50,768.92" fill="none" stroke="#0000FF" stroke-width="1.25"/>
<line x1="65.50" y1="768.92" x2="65.50" y2="777.10" stroke="#000000" stroke-width="1"/>
<line x1="65.50" y1="777.10" x2="65.50" y2="808.48" stroke="#000080" stroke-width="1"/>
<line x1="96.50" y1="745.72" x2="96.50" y2="754.32" stroke="#000000" stroke-width="1"/>
<path d="M96.50,754.32 L96.50,757.54 L94.20,758.70 L97.80,760.75 L94.20,762.50 L97.80,764.54 L96.30,765.71 L96.50,765.71 L96.50,768.92" fill="none" stroke="#0000FF" stroke-width="1.25"/>
<line x1="96.50" y1="768.92" x2="96.50" y2="777.10" stroke="#000000" stroke-width="1"/>
<line x1="96.50" y1="777.10" x2="96.50" y2="808.48" stroke="#000080" stroke-width="1"/>
<line x1="65.61" y1="777.50" x2="73.00" y2="777.50" stroke="#000000" stroke-width="1"/>
<path d="M73.00,777.50 L77.50,777.50 L78.40,779.30 L80.50,775.70 L80.95,779.30 L83.05,775.70 L84.25,778.00 L85.00,777.50 L88.00,777.50" fill="none" stroke="#0000FF" stroke-width="1.25"/>
<line x1="88.00" y1="777.50" x2="96.99" y2="777.50" stroke="#000000" stroke-width="1"/>
<circle cx="65.50" cy="777.50" r="1.6" fill="#000080"/>
<circle cx="96.50" cy="777.50" r="1.6" fill="#000080"/>
<line x1="65.61" y1="808.50" x2="73.00" y2="808.50" stroke="#000000" stroke-width="1"/>
<line x1="73.00" y1="808.50" x2="75.80" y2="808.50" stroke="#0000FF" stroke-width="1"/>
<line x1="78.80" y1="808.50" x2="82.00" y2="808.50" stroke="#0000FF" stroke-width="1"/>
<line x1="82.00" y1="808.50" x2="88.00" y2="808.50" stroke="#000000" stroke-width="1"/>
<line x1="88.00" y1="808.50" x2="96.99" y2="808.50" stroke="#000080" stroke-width="1"/>
<line x1="75.50" y1="801.48" x2="75.50" y2="813.98" stroke="#0000FF" stroke-width="1.2"/>
<line x1="78.50" y1="801.48" x2="78.50" y2="813.98" stroke="#0000FF" stroke-width="1.2"/>
<line x1="57.77" y1="777.50" x2="65.61" y2="777.50" stroke="#800000" stroke-width="1"/>
<line x1="96.99" y1="777.50" x2="104.83" y2="777.50" stroke="#800000" stroke-width="1"/>
<line x1="57.50" y1="773.10" x2="57.50" y2="781.10" stroke="#800000" stroke-width="1"/>
<text x="55.90" y="779.25" fill="#800000" stroke="#800000" stroke-width="0.22" font-size="6.8" font-family='"Liberation Sans", sans-serif' text-anchor="end" font-weight="normal" >D1N</text>
<line x1="104.50" y1="773.10" x2="104.50" y2="781.10" stroke="#800000" stroke-width="1"/>
<text x="106.30" y="779.25" fill="#800000" stroke="#800000" stroke-width="0.22" font-size="6.8" font-family='"Liberation Sans", sans-serif' text-anchor="start" font-weight="normal" >D1P</text>
<text x="67.50" y="758.07" fill="#1a1a1a" stroke="#1a1a1a" stroke-width="0.22" font-size="6.8" font-family='"Liberation Sans", sans-serif' text-anchor="start" font-weight="normal" >R11</text>
<text x="67.50" y="766.47" fill="#1a1a1a" stroke="#1a1a1a" stroke-width="0.22" font-size="6.8" font-family='"Liberation Sans", sans-serif' text-anchor="start" font-weight="normal" >50</text>
<text x="98.50" y="758.07" fill="#1a1a1a" stroke="#1a1a1a" stroke-width="0.22" font-size="6.8" font-family='"Liberation Sans", sans-serif' text-anchor="start" font-weight="normal" >R12</text>
<text x="98.50" y="766.47" fill="#1a1a1a" stroke="#1a1a1a" stroke-width="0.22" font-size="6.8" font-family='"Liberation Sans", sans-serif' text-anchor="start" font-weight="normal" >50</text>
<text x="72.30" y="772.67" fill="#1a1a1a" stroke="#1a1a1a" stroke-width="0.22" font-size="6.8" font-family='"Liberation Sans", sans-serif' text-anchor="start" font-weight="normal" >R10</text>
<text x="72.30" y="785.07" fill="#1a1a1a" stroke="#1a1a1a" stroke-width="0.22" font-size="6.8" font-family='"Liberation Sans", sans-serif' text-anchor="start" font-weight="normal" >50</text>
<text x="72.30" y="798.87" fill="#1a1a1a" stroke="#1a1a1a" stroke-width="0.22" font-size="6.8" font-family='"Liberation Sans", sans-serif' text-anchor="start" font-weight="normal" >C4</text>
<text x="72.30" y="820.27" fill="#1a1a1a" stroke="#1a1a1a" stroke-width="0.22" font-size="6.8" font-family='"Liberation Sans", sans-serif' text-anchor="start" font-weight="normal" >50V</text>
<text x="72.30" y="828.57" fill="#1a1a1a" stroke="#1a1a1a" stroke-width="0.22" font-size="6.8" font-family='"Liberation Sans", sans-serif' text-anchor="start" font-weight="normal" >15pF</text>
<line x1="1242.36" y1="39.50" x2="1273.74" y2="39.50" stroke="#000080" stroke-width="1"/>
<line x1="1258.50" y1="31.88" x2="1258.50" y2="39.68" stroke="#800000" stroke-width="1"/>
<line x1="1251.00" y1="31.50" x2="1266.50" y2="31.50" stroke="#800000" stroke-width="1"/>
<line x1="1253.00" y1="29.50" x2="1264.50" y2="29.50" stroke="#800000" stroke-width="1"/>
<line x1="1255.00" y1="26.50" x2="1262.50" y2="26.50" stroke="#800000" stroke-width="1"/>
<rect x="1258.00" y="24.00" width="1" height="1" fill="#800000"/>
<text x="1258.50" y="21.22" fill="#800000" stroke="#800000" stroke-width="0.22" font-size="6.8" font-family='"Liberation Sans", sans-serif' text-anchor="middle" font-weight="normal" >GND</text>
<circle cx="1258.50" cy="39.50" r="1.6" fill="#000080"/>
<circle cx="1273.50" cy="39.50" r="1.0" fill="#000080"/>
<line x1="1242.50" y1="39.68" x2="1242.50" y2="48.28" stroke="#000000" stroke-width="1"/>
<path d="M1242.50,48.28 L1242.50,51.49 L1240.20,52.66 L1243.80,54.70 L1240.20,56.45 L1243.80,58.50 L1242.30,59.66 L1242.50,59.66 L1242.50,62.88" fill="none" stroke="#0000FF" stroke-width="1.25"/>
<line x1="1242.50" y1="62.88" x2="1242.50" y2="71.06" stroke="#000000" stroke-width="1"/>
<line x1="1242.50" y1="71.06" x2="1242.50" y2="102.44" stroke="#000080" stroke-width="1"/>
<line x1="1273.50" y1="39.68" x2="1273.50" y2="48.28" stroke="#000000" stroke-width="1"/>
<path d="M1273.50,48.28 L1273.50,51.49 L1271.20,52.66 L1274.80,54.70 L1271.20,56.45 L1274.80,58.50 L1273.30,59.66 L1273.50,59.66 L1273.50,62.88" fill="none" stroke="#0000FF" stroke-width="1.25"/>
<line x1="1273.50" y1="62.88" x2="1273.50" y2="71.06" stroke="#000000" stroke-width="1"/>
<line x1="1273.50" y1="71.06" x2="1273.50" y2="102.44" stroke="#000080" stroke-width="1"/>
<line x1="1242.36" y1="71.50" x2="1249.75" y2="71.50" stroke="#000000" stroke-width="1"/>
<path d="M1249.75,71.50 L1254.25,71.50 L1255.15,73.30 L1257.25,69.70 L1257.70,73.30 L1259.80,69.70 L1261.00,72.00 L1261.75,71.50 L1264.75,71.50" fill="none" stroke="#0000FF" stroke-width="1.25"/>
<line x1="1264.75" y1="71.50" x2="1273.74" y2="71.50" stroke="#000000" stroke-width="1"/>
<circle cx="1242.50" cy="71.50" r="1.6" fill="#000080"/>
<circle cx="1273.50" cy="71.50" r="1.6" fill="#000080"/>
<line x1="1242.36" y1="102.50" x2="1249.75" y2="102.50" stroke="#000000" stroke-width="1"/>
<line x1="1249.75" y1="102.50" x2="1252.55" y2="102.50" stroke="#0000FF" stroke-width="1"/>
<line x1="1255.55" y1="102.50" x2="1258.75" y2="102.50" stroke="#0000FF" stroke-width="1"/>
<line x1="1258.75" y1="102.50" x2="1264.75" y2="102.50" stroke="#000000" stroke-width="1"/>
<line x1="1264.75" y1="102.50" x2="1273.74" y2="102.50" stroke="#000080" stroke-width="1"/>
<line x1="1252.50" y1="95.44" x2="1252.50" y2="107.94" stroke="#0000FF" stroke-width="1.2"/>
<line x1="1255.50" y1="95.44" x2="1255.50" y2="107.94" stroke="#0000FF" stroke-width="1.2"/>
<line x1="1234.51" y1="71.50" x2="1242.36" y2="71.50" stroke="#800000" stroke-width="1"/>
<line x1="1273.74" y1="71.50" x2="1281.58" y2="71.50" stroke="#800000" stroke-width="1"/>
<line x1="1234.50" y1="67.06" x2="1234.50" y2="75.06" stroke="#800000" stroke-width="1"/>
<text x="1232.90" y="73.20" fill="#800000" stroke="#800000" stroke-width="0.22" font-size="6.8" font-family='"Liberation Sans", sans-serif' text-anchor="end" font-weight="normal" >DA1N</text>
<line x1="1281.50" y1="67.06" x2="1281.50" y2="75.06" stroke="#800000" stroke-width="1"/>
<text x="1283.30" y="73.20" fill="#800000" stroke="#800000" stroke-width="0.22" font-size="6.8" font-family='"Liberation Sans", sans-serif' text-anchor="start" font-weight="normal" >DA1P</text>
<text x="1244.50" y="52.02" fill="#1a1a1a" stroke="#1a1a1a" stroke-width="0.22" font-size="6.8" font-family='"Liberation Sans", sans-serif' text-anchor="start" font-weight="normal" >R20</text>
<text x="1244.50" y="60.42" fill="#1a1a1a" stroke="#1a1a1a" stroke-width="0.22" font-size="6.8" font-family='"Liberation Sans", sans-serif' text-anchor="start" font-weight="normal" >50</text>
<text x="1275.50" y="52.02" fill="#1a1a1a" stroke="#1a1a1a" stroke-width="0.22" font-size="6.8" font-family='"Liberation Sans", sans-serif' text-anchor="start" font-weight="normal" >R21</text>
<text x="1275.50" y="60.42" fill="#1a1a1a" stroke="#1a1a1a" stroke-width="0.22" font-size="6.8" font-family='"Liberation Sans", sans-serif' text-anchor="start" font-weight="normal" >50</text>
<text x="1249.05" y="66.62" fill="#1a1a1a" stroke="#1a1a1a" stroke-width="0.22" font-size="6.8" font-family='"Liberation Sans", sans-serif' text-anchor="start" font-weight="normal" >R19</text>
<text x="1249.05" y="79.02" fill="#1a1a1a" stroke="#1a1a1a" stroke-width="0.22" font-size="6.8" font-family='"Liberation Sans", sans-serif' text-anchor="start" font-weight="normal" >50</text>
<text x="1249.05" y="92.82" fill="#1a1a1a" stroke="#1a1a1a" stroke-width="0.22" font-size="6.8" font-family='"Liberation Sans", sans-serif' text-anchor="start" font-weight="normal" >C7</text>
<text x="1249.05" y="114.22" fill="#1a1a1a" stroke="#1a1a1a" stroke-width="0.22" font-size="6.8" font-family='"Liberation Sans", sans-serif' text-anchor="start" font-weight="normal" >50V</text>
<text x="1249.05" y="122.52" fill="#1a1a1a" stroke="#1a1a1a" stroke-width="0.22" font-size="6.8" font-family='"Liberation Sans", sans-serif' text-anchor="start" font-weight="normal" >15pF</text>
<line x1="1242.36" y1="149.50" x2="1273.74" y2="149.50" stroke="#000080" stroke-width="1"/>
<line x1="1258.50" y1="141.70" x2="1258.50" y2="149.50" stroke="#800000" stroke-width="1"/>
<line x1="1251.00" y1="141.50" x2="1266.50" y2="141.50" stroke="#800000" stroke-width="1"/>
<line x1="1253.00" y1="139.50" x2="1264.50" y2="139.50" stroke="#800000" stroke-width="1"/>
<line x1="1255.00" y1="136.50" x2="1262.50" y2="136.50" stroke="#800000" stroke-width="1"/>
<rect x="1258.00" y="134.00" width="1" height="1" fill="#800000"/>
<text x="1258.50" y="131.05" fill="#800000" stroke="#800000" stroke-width="0.22" font-size="6.8" font-family='"Liberation Sans", sans-serif' text-anchor="middle" font-weight="normal" >GND</text>
<circle cx="1258.50" cy="149.50" r="1.6" fill="#000080"/>
<circle cx="1273.50" cy="149.50" r="1.0" fill="#000080"/>
<line x1="1242.50" y1="149.50" x2="1242.50" y2="158.10" stroke="#000000" stroke-width="1"/>
<path d="M1242.50,158.10 L1242.50,161.32 L1240.20,162.48 L1243.80,164.53 L1240.20,166.28 L1243.80,168.32 L1242.30,169.49 L1242.50,169.49 L1242.50,172.70" fill="none" stroke="#0000FF" stroke-width="1.25"/>
<line x1="1242.50" y1="172.70" x2="1242.50" y2="180.88" stroke="#000000" stroke-width="1"/>
<line x1="1242.50" y1="180.88" x2="1242.50" y2="212.27" stroke="#000080" stroke-width="1"/>
<line x1="1273.50" y1="149.50" x2="1273.50" y2="158.10" stroke="#000000" stroke-width="1"/>
<path d="M1273.50,158.10 L1273.50,161.32 L1271.20,162.48 L1274.80,164.53 L1271.20,166.28 L1274.80,168.32 L1273.30,169.49 L1273.50,169.49 L1273.50,172.70" fill="none" stroke="#0000FF" stroke-width="1.25"/>
<line x1="1273.50" y1="172.70" x2="1273.50" y2="180.88" stroke="#000000" stroke-width="1"/>
<line x1="1273.50" y1="180.88" x2="1273.50" y2="212.27" stroke="#000080" stroke-width="1"/>
<line x1="1242.36" y1="180.50" x2="1249.75" y2="180.50" stroke="#000000" stroke-width="1"/>
<path d="M1249.75,180.50 L1254.25,180.50 L1255.15,182.30 L1257.25,178.70 L1257.70,182.30 L1259.80,178.70 L1261.00,181.00 L1261.75,180.50 L1264.75,180.50" fill="none" stroke="#0000FF" stroke-width="1.25"/>
<line x1="1264.75" y1="180.50" x2="1273.74" y2="180.50" stroke="#000000" stroke-width="1"/>
<circle cx="1242.50" cy="180.50" r="1.6" fill="#000080"/>
<circle cx="1273.50" cy="180.50" r="1.6" fill="#000080"/>
<line x1="1242.36" y1="212.50" x2="1249.75" y2="212.50" stroke="#000000" stroke-width="1"/>
<line x1="1249.75" y1="212.50" x2="1252.55" y2="212.50" stroke="#0000FF" stroke-width="1"/>
<line x1="1255.55" y1="212.50" x2="1258.75" y2="212.50" stroke="#0000FF" stroke-width="1"/>
<line x1="1258.75" y1="212.50" x2="1264.75" y2="212.50" stroke="#000000" stroke-width="1"/>
<line x1="1264.75" y1="212.50" x2="1273.74" y2="212.50" stroke="#000080" stroke-width="1"/>
<line x1="1252.50" y1="205.27" x2="1252.50" y2="217.77" stroke="#0000FF" stroke-width="1.2"/>
<line x1="1255.50" y1="205.27" x2="1255.50" y2="217.77" stroke="#0000FF" stroke-width="1.2"/>
<line x1="1234.51" y1="180.50" x2="1242.36" y2="180.50" stroke="#800000" stroke-width="1"/>
<line x1="1273.74" y1="180.50" x2="1281.58" y2="180.50" stroke="#800000" stroke-width="1"/>
<line x1="1234.50" y1="176.88" x2="1234.50" y2="184.88" stroke="#800000" stroke-width="1"/>
<text x="1232.90" y="183.03" fill="#800000" stroke="#800000" stroke-width="0.22" font-size="6.8" font-family='"Liberation Sans", sans-serif' text-anchor="end" font-weight="normal" >DA2N</text>
<line x1="1281.50" y1="176.88" x2="1281.50" y2="184.88" stroke="#800000" stroke-width="1"/>
<text x="1283.30" y="183.03" fill="#800000" stroke="#800000" stroke-width="0.22" font-size="6.8" font-family='"Liberation Sans", sans-serif' text-anchor="start" font-weight="normal" >DA2P</text>
<text x="1244.50" y="161.85" fill="#1a1a1a" stroke="#1a1a1a" stroke-width="0.22" font-size="6.8" font-family='"Liberation Sans", sans-serif' text-anchor="start" font-weight="normal" >R23</text>
<text x="1244.50" y="170.25" fill="#1a1a1a" stroke="#1a1a1a" stroke-width="0.22" font-size="6.8" font-family='"Liberation Sans", sans-serif' text-anchor="start" font-weight="normal" >50</text>
<text x="1275.50" y="161.85" fill="#1a1a1a" stroke="#1a1a1a" stroke-width="0.22" font-size="6.8" font-family='"Liberation Sans", sans-serif' text-anchor="start" font-weight="normal" >R24</text>
<text x="1275.50" y="170.25" fill="#1a1a1a" stroke="#1a1a1a" stroke-width="0.22" font-size="6.8" font-family='"Liberation Sans", sans-serif' text-anchor="start" font-weight="normal" >50</text>
<text x="1249.05" y="176.45" fill="#1a1a1a" stroke="#1a1a1a" stroke-width="0.22" font-size="6.8" font-family='"Liberation Sans", sans-serif' text-anchor="start" font-weight="normal" >R22</text>
<text x="1249.05" y="188.85" fill="#1a1a1a" stroke="#1a1a1a" stroke-width="0.22" font-size="6.8" font-family='"Liberation Sans", sans-serif' text-anchor="start" font-weight="normal" >50</text>
<text x="1249.05" y="202.65" fill="#1a1a1a" stroke="#1a1a1a" stroke-width="0.22" font-size="6.8" font-family='"Liberation Sans", sans-serif' text-anchor="start" font-weight="normal" >C8</text>
<text x="1249.05" y="224.05" fill="#1a1a1a" stroke="#1a1a1a" stroke-width="0.22" font-size="6.8" font-family='"Liberation Sans", sans-serif' text-anchor="start" font-weight="normal" >50V</text>
<text x="1249.05" y="232.35" fill="#1a1a1a" stroke="#1a1a1a" stroke-width="0.22" font-size="6.8" font-family='"Liberation Sans", sans-serif' text-anchor="start" font-weight="normal" >15pF</text>
<line x1="1242.36" y1="259.50" x2="1273.74" y2="259.50" stroke="#000080" stroke-width="1"/>
<line x1="1258.50" y1="251.54" x2="1258.50" y2="259.34" stroke="#800000" stroke-width="1"/>
<line x1="1251.00" y1="251.50" x2="1266.50" y2="251.50" stroke="#800000" stroke-width="1"/>
<line x1="1253.00" y1="249.50" x2="1264.50" y2="249.50" stroke="#800000" stroke-width="1"/>
<line x1="1255.00" y1="246.50" x2="1262.50" y2="246.50" stroke="#800000" stroke-width="1"/>
<rect x="1258.00" y="244.00" width="1" height="1" fill="#800000"/>
<text x="1258.50" y="240.88" fill="#800000" stroke="#800000" stroke-width="0.22" font-size="6.8" font-family='"Liberation Sans", sans-serif' text-anchor="middle" font-weight="normal" >GND</text>
<circle cx="1258.50" cy="259.50" r="1.6" fill="#000080"/>
<circle cx="1273.50" cy="259.50" r="1.0" fill="#000080"/>
<line x1="1242.50" y1="259.34" x2="1242.50" y2="267.94" stroke="#000000" stroke-width="1"/>
<path d="M1242.50,267.94 L1242.50,271.15 L1240.20,272.32 L1243.80,274.36 L1240.20,276.11 L1243.80,278.16 L1242.30,279.32 L1242.50,279.32 L1242.50,282.54" fill="none" stroke="#0000FF" stroke-width="1.25"/>
<line x1="1242.50" y1="282.54" x2="1242.50" y2="290.72" stroke="#000000" stroke-width="1"/>
<line x1="1242.50" y1="290.72" x2="1242.50" y2="322.10" stroke="#000080" stroke-width="1"/>
<line x1="1273.50" y1="259.34" x2="1273.50" y2="267.94" stroke="#000000" stroke-width="1"/>
<path d="M1273.50,267.94 L1273.50,271.15 L1271.20,272.32 L1274.80,274.36 L1271.20,276.11 L1274.80,278.16 L1273.30,279.32 L1273.50,279.32 L1273.50,282.54" fill="none" stroke="#0000FF" stroke-width="1.25"/>
<line x1="1273.50" y1="282.54" x2="1273.50" y2="290.72" stroke="#000000" stroke-width="1"/>
<line x1="1273.50" y1="290.72" x2="1273.50" y2="322.10" stroke="#000080" stroke-width="1"/>
<line x1="1242.36" y1="290.50" x2="1249.75" y2="290.50" stroke="#000000" stroke-width="1"/>
<path d="M1249.75,290.50 L1254.25,290.50 L1255.15,292.30 L1257.25,288.70 L1257.70,292.30 L1259.80,288.70 L1261.00,291.00 L1261.75,290.50 L1264.75,290.50" fill="none" stroke="#0000FF" stroke-width="1.25"/>
<line x1="1264.75" y1="290.50" x2="1273.74" y2="290.50" stroke="#000000" stroke-width="1"/>
<circle cx="1242.50" cy="290.50" r="1.6" fill="#000080"/>
<circle cx="1273.50" cy="290.50" r="1.6" fill="#000080"/>
<line x1="1242.36" y1="322.50" x2="1249.75" y2="322.50" stroke="#000000" stroke-width="1"/>
<line x1="1249.75" y1="322.50" x2="1252.55" y2="322.50" stroke="#0000FF" stroke-width="1"/>
<line x1="1255.55" y1="322.50" x2="1258.75" y2="322.50" stroke="#0000FF" stroke-width="1"/>
<line x1="1258.75" y1="322.50" x2="1264.75" y2="322.50" stroke="#000000" stroke-width="1"/>
<line x1="1264.75" y1="322.50" x2="1273.74" y2="322.50" stroke="#000080" stroke-width="1"/>
<line x1="1252.50" y1="315.10" x2="1252.50" y2="327.60" stroke="#0000FF" stroke-width="1.2"/>
<line x1="1255.50" y1="315.10" x2="1255.50" y2="327.60" stroke="#0000FF" stroke-width="1.2"/>
<line x1="1234.51" y1="290.50" x2="1242.36" y2="290.50" stroke="#800000" stroke-width="1"/>
<line x1="1273.74" y1="290.50" x2="1281.58" y2="290.50" stroke="#800000" stroke-width="1"/>
<line x1="1234.50" y1="286.72" x2="1234.50" y2="294.72" stroke="#800000" stroke-width="1"/>
<text x="1232.90" y="292.86" fill="#800000" stroke="#800000" stroke-width="0.22" font-size="6.8" font-family='"Liberation Sans", sans-serif' text-anchor="end" font-weight="normal" >DA3N</text>
<line x1="1281.50" y1="286.72" x2="1281.50" y2="294.72" stroke="#800000" stroke-width="1"/>
<text x="1283.30" y="292.86" fill="#800000" stroke="#800000" stroke-width="0.22" font-size="6.8" font-family='"Liberation Sans", sans-serif' text-anchor="start" font-weight="normal" >DA3P</text>
<text x="1244.50" y="271.68" fill="#1a1a1a" stroke="#1a1a1a" stroke-width="0.22" font-size="6.8" font-family='"Liberation Sans", sans-serif' text-anchor="start" font-weight="normal" >R26</text>
<text x="1244.50" y="280.08" fill="#1a1a1a" stroke="#1a1a1a" stroke-width="0.22" font-size="6.8" font-family='"Liberation Sans", sans-serif' text-anchor="start" font-weight="normal" >50</text>
<text x="1275.50" y="271.68" fill="#1a1a1a" stroke="#1a1a1a" stroke-width="0.22" font-size="6.8" font-family='"Liberation Sans", sans-serif' text-anchor="start" font-weight="normal" >R27</text>
<text x="1275.50" y="280.08" fill="#1a1a1a" stroke="#1a1a1a" stroke-width="0.22" font-size="6.8" font-family='"Liberation Sans", sans-serif' text-anchor="start" font-weight="normal" >50</text>
<text x="1249.05" y="286.28" fill="#1a1a1a" stroke="#1a1a1a" stroke-width="0.22" font-size="6.8" font-family='"Liberation Sans", sans-serif' text-anchor="start" font-weight="normal" >R25</text>
<text x="1249.05" y="298.68" fill="#1a1a1a" stroke="#1a1a1a" stroke-width="0.22" font-size="6.8" font-family='"Liberation Sans", sans-serif' text-anchor="start" font-weight="normal" >50</text>
<text x="1249.05" y="312.48" fill="#1a1a1a" stroke="#1a1a1a" stroke-width="0.22" font-size="6.8" font-family='"Liberation Sans", sans-serif' text-anchor="start" font-weight="normal" >C9</text>
<text x="1249.05" y="333.88" fill="#1a1a1a" stroke="#1a1a1a" stroke-width="0.22" font-size="6.8" font-family='"Liberation Sans", sans-serif' text-anchor="start" font-weight="normal" >50V</text>
<text x="1249.05" y="342.18" fill="#1a1a1a" stroke="#1a1a1a" stroke-width="0.22" font-size="6.8" font-family='"Liberation Sans", sans-serif' text-anchor="start" font-weight="normal" >15pF</text>
<line x1="1163.91" y1="329.50" x2="1195.29" y2="329.50" stroke="#000080" stroke-width="1"/>
<line x1="1179.50" y1="322.14" x2="1179.50" y2="329.94" stroke="#800000" stroke-width="1"/>
<line x1="1172.00" y1="322.50" x2="1187.50" y2="322.50" stroke="#800000" stroke-width="1"/>
<line x1="1174.00" y1="319.50" x2="1185.50" y2="319.50" stroke="#800000" stroke-width="1"/>
<line x1="1176.00" y1="317.50" x2="1183.50" y2="317.50" stroke="#800000" stroke-width="1"/>
<rect x="1179.00" y="315.00" width="1" height="1" fill="#800000"/>
<text x="1179.50" y="311.49" fill="#800000" stroke="#800000" stroke-width="0.22" font-size="6.8" font-family='"Liberation Sans", sans-serif' text-anchor="middle" font-weight="normal" >GND</text>
<circle cx="1179.50" cy="329.50" r="1.6" fill="#000080"/>
<circle cx="1195.50" cy="329.50" r="1.0" fill="#000080"/>
<line x1="1163.50" y1="329.94" x2="1163.50" y2="338.54" stroke="#000000" stroke-width="1"/>
<path d="M1163.50,338.54 L1163.50,341.75 L1161.20,342.92 L1164.80,344.96 L1161.20,346.72 L1164.80,348.76 L1163.30,349.93 L1163.50,349.93 L1163.50,353.14" fill="none" stroke="#0000FF" stroke-width="1.25"/>
<line x1="1163.50" y1="353.14" x2="1163.50" y2="361.32" stroke="#000000" stroke-width="1"/>
<line x1="1163.50" y1="361.32" x2="1163.50" y2="392.70" stroke="#000080" stroke-width="1"/>
<line x1="1195.50" y1="329.94" x2="1195.50" y2="338.54" stroke="#000000" stroke-width="1"/>
<path d="M1195.50,338.54 L1195.50,341.75 L1193.20,342.92 L1196.80,344.96 L1193.20,346.72 L1196.80,348.76 L1195.30,349.93 L1195.50,349.93 L1195.50,353.14" fill="none" stroke="#0000FF" stroke-width="1.25"/>
<line x1="1195.50" y1="353.14" x2="1195.50" y2="361.32" stroke="#000000" stroke-width="1"/>
<line x1="1195.50" y1="361.32" x2="1195.50" y2="392.70" stroke="#000080" stroke-width="1"/>
<line x1="1163.91" y1="361.50" x2="1171.30" y2="361.50" stroke="#000000" stroke-width="1"/>
<path d="M1171.30,361.50 L1175.80,361.50 L1176.70,363.30 L1178.80,359.70 L1179.25,363.30 L1181.35,359.70 L1182.55,362.00 L1183.30,361.50 L1186.30,361.50" fill="none" stroke="#0000FF" stroke-width="1.25"/>
<line x1="1186.30" y1="361.50" x2="1195.29" y2="361.50" stroke="#000000" stroke-width="1"/>
<circle cx="1163.50" cy="361.50" r="1.6" fill="#000080"/>
<circle cx="1195.50" cy="361.50" r="1.6" fill="#000080"/>
<line x1="1163.91" y1="392.50" x2="1171.30" y2="392.50" stroke="#000000" stroke-width="1"/>
<line x1="1171.30" y1="392.50" x2="1174.10" y2="392.50" stroke="#0000FF" stroke-width="1"/>
<line x1="1177.10" y1="392.50" x2="1180.30" y2="392.50" stroke="#0000FF" stroke-width="1"/>
<line x1="1180.30" y1="392.50" x2="1186.30" y2="392.50" stroke="#000000" stroke-width="1"/>
<line x1="1186.30" y1="392.50" x2="1195.29" y2="392.50" stroke="#000080" stroke-width="1"/>
<line x1="1174.50" y1="385.70" x2="1174.50" y2="398.20" stroke="#0000FF" stroke-width="1.2"/>
<line x1="1177.50" y1="385.70" x2="1177.50" y2="398.20" stroke="#0000FF" stroke-width="1.2"/>
<line x1="1156.06" y1="361.50" x2="1163.91" y2="361.50" stroke="#800000" stroke-width="1"/>
<line x1="1195.29" y1="361.50" x2="1203.13" y2="361.50" stroke="#800000" stroke-width="1"/>
<line x1="1156.50" y1="357.32" x2="1156.50" y2="365.32" stroke="#800000" stroke-width="1"/>
<text x="1154.90" y="363.47" fill="#800000" stroke="#800000" stroke-width="0.22" font-size="6.8" font-family='"Liberation Sans", sans-serif' text-anchor="end" font-weight="normal" >DA4N</text>
<line x1="1203.50" y1="357.32" x2="1203.50" y2="365.32" stroke="#800000" stroke-width="1"/>
<text x="1205.30" y="363.47" fill="#800000" stroke="#800000" stroke-width="0.22" font-size="6.8" font-family='"Liberation Sans", sans-serif' text-anchor="start" font-weight="normal" >DA4P</text>
<text x="1165.50" y="342.29" fill="#1a1a1a" stroke="#1a1a1a" stroke-width="0.22" font-size="6.8" font-family='"Liberation Sans", sans-serif' text-anchor="start" font-weight="normal" >R29</text>
<text x="1165.50" y="350.69" fill="#1a1a1a" stroke="#1a1a1a" stroke-width="0.22" font-size="6.8" font-family='"Liberation Sans", sans-serif' text-anchor="start" font-weight="normal" >50</text>
<text x="1197.50" y="342.29" fill="#1a1a1a" stroke="#1a1a1a" stroke-width="0.22" font-size="6.8" font-family='"Liberation Sans", sans-serif' text-anchor="start" font-weight="normal" >R30</text>
<text x="1197.50" y="350.69" fill="#1a1a1a" stroke="#1a1a1a" stroke-width="0.22" font-size="6.8" font-family='"Liberation Sans", sans-serif' text-anchor="start" font-weight="normal" >50</text>
<text x="1170.60" y="356.89" fill="#1a1a1a" stroke="#1a1a1a" stroke-width="0.22" font-size="6.8" font-family='"Liberation Sans", sans-serif' text-anchor="start" font-weight="normal" >R28</text>
<text x="1170.60" y="369.29" fill="#1a1a1a" stroke="#1a1a1a" stroke-width="0.22" font-size="6.8" font-family='"Liberation Sans", sans-serif' text-anchor="start" font-weight="normal" >50</text>
<text x="1170.60" y="383.09" fill="#1a1a1a" stroke="#1a1a1a" stroke-width="0.22" font-size="6.8" font-family='"Liberation Sans", sans-serif' text-anchor="start" font-weight="normal" >C10</text>
<text x="1170.60" y="404.49" fill="#1a1a1a" stroke="#1a1a1a" stroke-width="0.22" font-size="6.8" font-family='"Liberation Sans", sans-serif' text-anchor="start" font-weight="normal" >50V</text>
<text x="1170.60" y="412.79" fill="#1a1a1a" stroke="#1a1a1a" stroke-width="0.22" font-size="6.8" font-family='"Liberation Sans", sans-serif' text-anchor="start" font-weight="normal" >15pF</text>
<line x1="1234.51" y1="439.50" x2="1265.89" y2="439.50" stroke="#000080" stroke-width="1"/>
<line x1="1250.50" y1="431.97" x2="1250.50" y2="439.77" stroke="#800000" stroke-width="1"/>
<line x1="1243.00" y1="431.50" x2="1258.50" y2="431.50" stroke="#800000" stroke-width="1"/>
<line x1="1245.00" y1="429.50" x2="1256.50" y2="429.50" stroke="#800000" stroke-width="1"/>
<line x1="1247.00" y1="426.50" x2="1254.50" y2="426.50" stroke="#800000" stroke-width="1"/>
<rect x="1250.00" y="424.00" width="1" height="1" fill="#800000"/>
<text x="1250.50" y="421.32" fill="#800000" stroke="#800000" stroke-width="0.22" font-size="6.8" font-family='"Liberation Sans", sans-serif' text-anchor="middle" font-weight="normal" >GND</text>
<circle cx="1250.50" cy="439.50" r="1.6" fill="#000080"/>
<circle cx="1265.50" cy="439.50" r="1.0" fill="#000080"/>
<line x1="1234.50" y1="439.77" x2="1234.50" y2="448.37" stroke="#000000" stroke-width="1"/>
<path d="M1234.50,448.37 L1234.50,451.58 L1232.20,452.75 L1235.80,454.79 L1232.20,456.55 L1235.80,458.59 L1234.30,459.76 L1234.50,459.76 L1234.50,462.97" fill="none" stroke="#0000FF" stroke-width="1.25"/>
<line x1="1234.50" y1="462.97" x2="1234.50" y2="471.15" stroke="#000000" stroke-width="1"/>
<line x1="1234.50" y1="471.15" x2="1234.50" y2="502.53" stroke="#000080" stroke-width="1"/>
<line x1="1265.50" y1="439.77" x2="1265.50" y2="448.37" stroke="#000000" stroke-width="1"/>
<path d="M1265.50,448.37 L1265.50,451.58 L1263.20,452.75 L1266.80,454.79 L1263.20,456.55 L1266.80,458.59 L1265.30,459.76 L1265.50,459.76 L1265.50,462.97" fill="none" stroke="#0000FF" stroke-width="1.25"/>
<line x1="1265.50" y1="462.97" x2="1265.50" y2="471.15" stroke="#000000" stroke-width="1"/>
<line x1="1265.50" y1="471.15" x2="1265.50" y2="502.53" stroke="#000080" stroke-width="1"/>
<line x1="1234.51" y1="471.50" x2="1241.90" y2="471.50" stroke="#000000" stroke-width="1"/>
<path d="M1241.90,471.50 L1246.40,471.50 L1247.31,473.30 L1249.40,469.70 L1249.86,473.30 L1251.95,469.70 L1253.15,472.00 L1253.90,471.50 L1256.90,471.50" fill="none" stroke="#0000FF" stroke-width="1.25"/>
<line x1="1256.90" y1="471.50" x2="1265.89" y2="471.50" stroke="#000000" stroke-width="1"/>
<circle cx="1234.50" cy="471.50" r="1.6" fill="#000080"/>
<circle cx="1265.50" cy="471.50" r="1.6" fill="#000080"/>
<line x1="1234.51" y1="502.50" x2="1241.90" y2="502.50" stroke="#000000" stroke-width="1"/>
<line x1="1241.90" y1="502.50" x2="1244.70" y2="502.50" stroke="#0000FF" stroke-width="1"/>
<line x1="1247.70" y1="502.50" x2="1250.90" y2="502.50" stroke="#0000FF" stroke-width="1"/>
<line x1="1250.90" y1="502.50" x2="1256.90" y2="502.50" stroke="#000000" stroke-width="1"/>
<line x1="1256.90" y1="502.50" x2="1265.89" y2="502.50" stroke="#000080" stroke-width="1"/>
<line x1="1244.50" y1="495.53" x2="1244.50" y2="508.03" stroke="#0000FF" stroke-width="1.2"/>
<line x1="1247.50" y1="495.53" x2="1247.50" y2="508.03" stroke="#0000FF" stroke-width="1.2"/>
<line x1="1226.67" y1="471.50" x2="1234.51" y2="471.50" stroke="#800000" stroke-width="1"/>
<line x1="1265.89" y1="471.50" x2="1273.74" y2="471.50" stroke="#800000" stroke-width="1"/>
<line x1="1226.50" y1="467.15" x2="1226.50" y2="475.15" stroke="#800000" stroke-width="1"/>
<text x="1224.90" y="473.30" fill="#800000" stroke="#800000" stroke-width="0.22" font-size="6.8" font-family='"Liberation Sans", sans-serif' text-anchor="end" font-weight="normal" >DB4N</text>
<line x1="1273.50" y1="467.15" x2="1273.50" y2="475.15" stroke="#800000" stroke-width="1"/>
<text x="1275.30" y="473.30" fill="#800000" stroke="#800000" stroke-width="0.22" font-size="6.8" font-family='"Liberation Sans", sans-serif' text-anchor="start" font-weight="normal" >DB4P</text>
<text x="1236.50" y="452.12" fill="#1a1a1a" stroke="#1a1a1a" stroke-width="0.22" font-size="6.8" font-family='"Liberation Sans", sans-serif' text-anchor="start" font-weight="normal" >R44</text>
<text x="1236.50" y="460.52" fill="#1a1a1a" stroke="#1a1a1a" stroke-width="0.22" font-size="6.8" font-family='"Liberation Sans", sans-serif' text-anchor="start" font-weight="normal" >50</text>
<text x="1267.50" y="452.12" fill="#1a1a1a" stroke="#1a1a1a" stroke-width="0.22" font-size="6.8" font-family='"Liberation Sans", sans-serif' text-anchor="start" font-weight="normal" >R45</text>
<text x="1267.50" y="460.52" fill="#1a1a1a" stroke="#1a1a1a" stroke-width="0.22" font-size="6.8" font-family='"Liberation Sans", sans-serif' text-anchor="start" font-weight="normal" >50</text>
<text x="1241.20" y="466.72" fill="#1a1a1a" stroke="#1a1a1a" stroke-width="0.22" font-size="6.8" font-family='"Liberation Sans", sans-serif' text-anchor="start" font-weight="normal" >R43</text>
<text x="1241.20" y="479.12" fill="#1a1a1a" stroke="#1a1a1a" stroke-width="0.22" font-size="6.8" font-family='"Liberation Sans", sans-serif' text-anchor="start" font-weight="normal" >50</text>
<text x="1241.20" y="492.92" fill="#1a1a1a" stroke="#1a1a1a" stroke-width="0.22" font-size="6.8" font-family='"Liberation Sans", sans-serif' text-anchor="start" font-weight="normal" >C15</text>
<text x="1241.20" y="514.32" fill="#1a1a1a" stroke="#1a1a1a" stroke-width="0.22" font-size="6.8" font-family='"Liberation Sans", sans-serif' text-anchor="start" font-weight="normal" >50V</text>
<text x="1241.20" y="522.62" fill="#1a1a1a" stroke="#1a1a1a" stroke-width="0.22" font-size="6.8" font-family='"Liberation Sans", sans-serif' text-anchor="start" font-weight="normal" >15pF</text>
<line x1="1234.51" y1="549.50" x2="1265.89" y2="549.50" stroke="#000080" stroke-width="1"/>
<line x1="1250.50" y1="541.80" x2="1250.50" y2="549.60" stroke="#800000" stroke-width="1"/>
<line x1="1243.00" y1="541.50" x2="1258.50" y2="541.50" stroke="#800000" stroke-width="1"/>
<line x1="1245.00" y1="539.50" x2="1256.50" y2="539.50" stroke="#800000" stroke-width="1"/>
<line x1="1247.00" y1="536.50" x2="1254.50" y2="536.50" stroke="#800000" stroke-width="1"/>
<rect x="1250.00" y="534.00" width="1" height="1" fill="#800000"/>
<text x="1250.50" y="531.15" fill="#800000" stroke="#800000" stroke-width="0.22" font-size="6.8" font-family='"Liberation Sans", sans-serif' text-anchor="middle" font-weight="normal" >GND</text>
<circle cx="1250.50" cy="549.50" r="1.6" fill="#000080"/>
<circle cx="1265.50" cy="549.50" r="1.0" fill="#000080"/>
<line x1="1234.50" y1="549.60" x2="1234.50" y2="558.20" stroke="#000000" stroke-width="1"/>
<path d="M1234.50,558.20 L1234.50,561.41 L1232.20,562.58 L1235.80,564.62 L1232.20,566.38 L1235.80,568.42 L1234.30,569.59 L1234.50,569.59 L1234.50,572.80" fill="none" stroke="#0000FF" stroke-width="1.25"/>
<line x1="1234.50" y1="572.80" x2="1234.50" y2="580.98" stroke="#000000" stroke-width="1"/>
<line x1="1234.50" y1="580.98" x2="1234.50" y2="612.36" stroke="#000080" stroke-width="1"/>
<line x1="1265.50" y1="549.60" x2="1265.50" y2="558.20" stroke="#000000" stroke-width="1"/>
<path d="M1265.50,558.20 L1265.50,561.41 L1263.20,562.58 L1266.80,564.62 L1263.20,566.38 L1266.80,568.42 L1265.30,569.59 L1265.50,569.59 L1265.50,572.80" fill="none" stroke="#0000FF" stroke-width="1.25"/>
<line x1="1265.50" y1="572.80" x2="1265.50" y2="580.98" stroke="#000000" stroke-width="1"/>
<line x1="1265.50" y1="580.98" x2="1265.50" y2="612.36" stroke="#000080" stroke-width="1"/>
<line x1="1234.51" y1="580.50" x2="1241.90" y2="580.50" stroke="#000000" stroke-width="1"/>
<path d="M1241.90,580.50 L1246.40,580.50 L1247.31,582.30 L1249.40,578.70 L1249.86,582.30 L1251.95,578.70 L1253.15,581.00 L1253.90,580.50 L1256.90,580.50" fill="none" stroke="#0000FF" stroke-width="1.25"/>
<line x1="1256.90" y1="580.50" x2="1265.89" y2="580.50" stroke="#000000" stroke-width="1"/>
<circle cx="1234.50" cy="580.50" r="1.6" fill="#000080"/>
<circle cx="1265.50" cy="580.50" r="1.6" fill="#000080"/>
<line x1="1234.51" y1="612.50" x2="1241.90" y2="612.50" stroke="#000000" stroke-width="1"/>
<line x1="1241.90" y1="612.50" x2="1244.70" y2="612.50" stroke="#0000FF" stroke-width="1"/>
<line x1="1247.70" y1="612.50" x2="1250.90" y2="612.50" stroke="#0000FF" stroke-width="1"/>
<line x1="1250.90" y1="612.50" x2="1256.90" y2="612.50" stroke="#000000" stroke-width="1"/>
<line x1="1256.90" y1="612.50" x2="1265.89" y2="612.50" stroke="#000080" stroke-width="1"/>
<line x1="1244.50" y1="605.36" x2="1244.50" y2="617.86" stroke="#0000FF" stroke-width="1.2"/>
<line x1="1247.50" y1="605.36" x2="1247.50" y2="617.86" stroke="#0000FF" stroke-width="1.2"/>
<line x1="1226.67" y1="580.50" x2="1234.51" y2="580.50" stroke="#800000" stroke-width="1"/>
<line x1="1265.89" y1="580.50" x2="1273.74" y2="580.50" stroke="#800000" stroke-width="1"/>
<line x1="1226.50" y1="576.98" x2="1226.50" y2="584.98" stroke="#800000" stroke-width="1"/>
<text x="1224.90" y="583.13" fill="#800000" stroke="#800000" stroke-width="0.22" font-size="6.8" font-family='"Liberation Sans", sans-serif' text-anchor="end" font-weight="normal" >DB3N</text>
<line x1="1273.50" y1="576.98" x2="1273.50" y2="584.98" stroke="#800000" stroke-width="1"/>
<text x="1275.30" y="583.13" fill="#800000" stroke="#800000" stroke-width="0.22" font-size="6.8" font-family='"Liberation Sans", sans-serif' text-anchor="start" font-weight="normal" >DB3P</text>
<text x="1236.50" y="561.95" fill="#1a1a1a" stroke="#1a1a1a" stroke-width="0.22" font-size="6.8" font-family='"Liberation Sans", sans-serif' text-anchor="start" font-weight="normal" >R41</text>
<text x="1236.50" y="570.35" fill="#1a1a1a" stroke="#1a1a1a" stroke-width="0.22" font-size="6.8" font-family='"Liberation Sans", sans-serif' text-anchor="start" font-weight="normal" >50</text>
<text x="1267.50" y="561.95" fill="#1a1a1a" stroke="#1a1a1a" stroke-width="0.22" font-size="6.8" font-family='"Liberation Sans", sans-serif' text-anchor="start" font-weight="normal" >R42</text>
<text x="1267.50" y="570.35" fill="#1a1a1a" stroke="#1a1a1a" stroke-width="0.22" font-size="6.8" font-family='"Liberation Sans", sans-serif' text-anchor="start" font-weight="normal" >50</text>
<text x="1241.20" y="576.55" fill="#1a1a1a" stroke="#1a1a1a" stroke-width="0.22" font-size="6.8" font-family='"Liberation Sans", sans-serif' text-anchor="start" font-weight="normal" >R40</text>
<text x="1241.20" y="588.95" fill="#1a1a1a" stroke="#1a1a1a" stroke-width="0.22" font-size="6.8" font-family='"Liberation Sans", sans-serif' text-anchor="start" font-weight="normal" >50</text>
<text x="1241.20" y="602.75" fill="#1a1a1a" stroke="#1a1a1a" stroke-width="0.22" font-size="6.8" font-family='"Liberation Sans", sans-serif' text-anchor="start" font-weight="normal" >C14</text>
<text x="1241.20" y="624.15" fill="#1a1a1a" stroke="#1a1a1a" stroke-width="0.22" font-size="6.8" font-family='"Liberation Sans", sans-serif' text-anchor="start" font-weight="normal" >50V</text>
<text x="1241.20" y="632.45" fill="#1a1a1a" stroke="#1a1a1a" stroke-width="0.22" font-size="6.8" font-family='"Liberation Sans", sans-serif' text-anchor="start" font-weight="normal" >15pF</text>
<line x1="1234.51" y1="659.50" x2="1265.89" y2="659.50" stroke="#000080" stroke-width="1"/>
<line x1="1250.50" y1="651.63" x2="1250.50" y2="659.43" stroke="#800000" stroke-width="1"/>
<line x1="1243.00" y1="651.50" x2="1258.50" y2="651.50" stroke="#800000" stroke-width="1"/>
<line x1="1245.00" y1="649.50" x2="1256.50" y2="649.50" stroke="#800000" stroke-width="1"/>
<line x1="1247.00" y1="646.50" x2="1254.50" y2="646.50" stroke="#800000" stroke-width="1"/>
<rect x="1250.00" y="644.00" width="1" height="1" fill="#800000"/>
<text x="1250.50" y="640.98" fill="#800000" stroke="#800000" stroke-width="0.22" font-size="6.8" font-family='"Liberation Sans", sans-serif' text-anchor="middle" font-weight="normal" >GND</text>
<circle cx="1250.50" cy="659.50" r="1.6" fill="#000080"/>
<circle cx="1265.50" cy="659.50" r="1.0" fill="#000080"/>
<line x1="1234.50" y1="659.43" x2="1234.50" y2="668.03" stroke="#000000" stroke-width="1"/>
<path d="M1234.50,668.03 L1234.50,671.24 L1232.20,672.41 L1235.80,674.45 L1232.20,676.21 L1235.80,678.25 L1234.30,679.42 L1234.50,679.42 L1234.50,682.63" fill="none" stroke="#0000FF" stroke-width="1.25"/>
<line x1="1234.50" y1="682.63" x2="1234.50" y2="690.81" stroke="#000000" stroke-width="1"/>
<line x1="1234.50" y1="690.81" x2="1234.50" y2="722.19" stroke="#000080" stroke-width="1"/>
<line x1="1265.50" y1="659.43" x2="1265.50" y2="668.03" stroke="#000000" stroke-width="1"/>
<path d="M1265.50,668.03 L1265.50,671.24 L1263.20,672.41 L1266.80,674.45 L1263.20,676.21 L1266.80,678.25 L1265.30,679.42 L1265.50,679.42 L1265.50,682.63" fill="none" stroke="#0000FF" stroke-width="1.25"/>
<line x1="1265.50" y1="682.63" x2="1265.50" y2="690.81" stroke="#000000" stroke-width="1"/>
<line x1="1265.50" y1="690.81" x2="1265.50" y2="722.19" stroke="#000080" stroke-width="1"/>
<line x1="1234.51" y1="690.50" x2="1241.90" y2="690.50" stroke="#000000" stroke-width="1"/>
<path d="M1241.90,690.50 L1246.40,690.50 L1247.31,692.30 L1249.40,688.70 L1249.86,692.30 L1251.95,688.70 L1253.15,691.00 L1253.90,690.50 L1256.90,690.50" fill="none" stroke="#0000FF" stroke-width="1.25"/>
<line x1="1256.90" y1="690.50" x2="1265.89" y2="690.50" stroke="#000000" stroke-width="1"/>
<circle cx="1234.50" cy="690.50" r="1.6" fill="#000080"/>
<circle cx="1265.50" cy="690.50" r="1.6" fill="#000080"/>
<line x1="1234.51" y1="722.50" x2="1241.90" y2="722.50" stroke="#000000" stroke-width="1"/>
<line x1="1241.90" y1="722.50" x2="1244.70" y2="722.50" stroke="#0000FF" stroke-width="1"/>
<line x1="1247.70" y1="722.50" x2="1250.90" y2="722.50" stroke="#0000FF" stroke-width="1"/>
<line x1="1250.90" y1="722.50" x2="1256.90" y2="722.50" stroke="#000000" stroke-width="1"/>
<line x1="1256.90" y1="722.50" x2="1265.89" y2="722.50" stroke="#000080" stroke-width="1"/>
<line x1="1244.50" y1="715.19" x2="1244.50" y2="727.69" stroke="#0000FF" stroke-width="1.2"/>
<line x1="1247.50" y1="715.19" x2="1247.50" y2="727.69" stroke="#0000FF" stroke-width="1.2"/>
<line x1="1226.67" y1="690.50" x2="1234.51" y2="690.50" stroke="#800000" stroke-width="1"/>
<line x1="1265.89" y1="690.50" x2="1273.74" y2="690.50" stroke="#800000" stroke-width="1"/>
<line x1="1226.50" y1="686.81" x2="1226.50" y2="694.81" stroke="#800000" stroke-width="1"/>
<text x="1224.90" y="692.96" fill="#800000" stroke="#800000" stroke-width="0.22" font-size="6.8" font-family='"Liberation Sans", sans-serif' text-anchor="end" font-weight="normal" >DB2N</text>
<line x1="1273.50" y1="686.81" x2="1273.50" y2="694.81" stroke="#800000" stroke-width="1"/>
<text x="1275.30" y="692.96" fill="#800000" stroke="#800000" stroke-width="0.22" font-size="6.8" font-family='"Liberation Sans", sans-serif' text-anchor="start" font-weight="normal" >DB2P</text>
<text x="1236.50" y="671.78" fill="#1a1a1a" stroke="#1a1a1a" stroke-width="0.22" font-size="6.8" font-family='"Liberation Sans", sans-serif' text-anchor="start" font-weight="normal" >R38</text>
<text x="1236.50" y="680.18" fill="#1a1a1a" stroke="#1a1a1a" stroke-width="0.22" font-size="6.8" font-family='"Liberation Sans", sans-serif' text-anchor="start" font-weight="normal" >50</text>
<text x="1267.50" y="671.78" fill="#1a1a1a" stroke="#1a1a1a" stroke-width="0.22" font-size="6.8" font-family='"Liberation Sans", sans-serif' text-anchor="start" font-weight="normal" >R39</text>
<text x="1267.50" y="680.18" fill="#1a1a1a" stroke="#1a1a1a" stroke-width="0.22" font-size="6.8" font-family='"Liberation Sans", sans-serif' text-anchor="start" font-weight="normal" >50</text>
<text x="1241.20" y="686.38" fill="#1a1a1a" stroke="#1a1a1a" stroke-width="0.22" font-size="6.8" font-family='"Liberation Sans", sans-serif' text-anchor="start" font-weight="normal" >R37</text>
<text x="1241.20" y="698.78" fill="#1a1a1a" stroke="#1a1a1a" stroke-width="0.22" font-size="6.8" font-family='"Liberation Sans", sans-serif' text-anchor="start" font-weight="normal" >50</text>
<text x="1241.20" y="712.58" fill="#1a1a1a" stroke="#1a1a1a" stroke-width="0.22" font-size="6.8" font-family='"Liberation Sans", sans-serif' text-anchor="start" font-weight="normal" >C13</text>
<text x="1241.20" y="733.98" fill="#1a1a1a" stroke="#1a1a1a" stroke-width="0.22" font-size="6.8" font-family='"Liberation Sans", sans-serif' text-anchor="start" font-weight="normal" >50V</text>
<text x="1241.20" y="742.28" fill="#1a1a1a" stroke="#1a1a1a" stroke-width="0.22" font-size="6.8" font-family='"Liberation Sans", sans-serif' text-anchor="start" font-weight="normal" >15pF</text>
<line x1="1163.91" y1="698.50" x2="1195.29" y2="698.50" stroke="#000080" stroke-width="1"/>
<line x1="1179.50" y1="690.86" x2="1179.50" y2="698.65" stroke="#800000" stroke-width="1"/>
<line x1="1172.00" y1="690.50" x2="1187.50" y2="690.50" stroke="#800000" stroke-width="1"/>
<line x1="1174.00" y1="688.50" x2="1185.50" y2="688.50" stroke="#800000" stroke-width="1"/>
<line x1="1176.00" y1="685.50" x2="1183.50" y2="685.50" stroke="#800000" stroke-width="1"/>
<rect x="1179.00" y="683.00" width="1" height="1" fill="#800000"/>
<text x="1179.50" y="680.20" fill="#800000" stroke="#800000" stroke-width="0.22" font-size="6.8" font-family='"Liberation Sans", sans-serif' text-anchor="middle" font-weight="normal" >GND</text>
<circle cx="1179.50" cy="698.50" r="1.6" fill="#000080"/>
<circle cx="1195.50" cy="698.50" r="1.0" fill="#000080"/>
<line x1="1163.50" y1="698.65" x2="1163.50" y2="707.25" stroke="#000000" stroke-width="1"/>
<path d="M1163.50,707.25 L1163.50,710.47 L1161.20,711.63 L1164.80,713.68 L1161.20,715.43 L1164.80,717.48 L1163.30,718.64 L1163.50,718.64 L1163.50,721.86" fill="none" stroke="#0000FF" stroke-width="1.25"/>
<line x1="1163.50" y1="721.86" x2="1163.50" y2="730.03" stroke="#000000" stroke-width="1"/>
<line x1="1163.50" y1="730.03" x2="1163.50" y2="761.41" stroke="#000080" stroke-width="1"/>
<line x1="1195.50" y1="698.65" x2="1195.50" y2="707.25" stroke="#000000" stroke-width="1"/>
<path d="M1195.50,707.25 L1195.50,710.47 L1193.20,711.63 L1196.80,713.68 L1193.20,715.43 L1196.80,717.48 L1195.30,718.64 L1195.50,718.64 L1195.50,721.86" fill="none" stroke="#0000FF" stroke-width="1.25"/>
<line x1="1195.50" y1="721.86" x2="1195.50" y2="730.03" stroke="#000000" stroke-width="1"/>
<line x1="1195.50" y1="730.03" x2="1195.50" y2="761.41" stroke="#000080" stroke-width="1"/>
<line x1="1163.91" y1="730.50" x2="1171.30" y2="730.50" stroke="#000000" stroke-width="1"/>
<path d="M1171.30,730.50 L1175.80,730.50 L1176.70,732.30 L1178.80,728.70 L1179.25,732.30 L1181.35,728.70 L1182.55,731.00 L1183.30,730.50 L1186.30,730.50" fill="none" stroke="#0000FF" stroke-width="1.25"/>
<line x1="1186.30" y1="730.50" x2="1195.29" y2="730.50" stroke="#000000" stroke-width="1"/>
<circle cx="1163.50" cy="730.50" r="1.6" fill="#000080"/>
<circle cx="1195.50" cy="730.50" r="1.6" fill="#000080"/>
<line x1="1163.91" y1="761.50" x2="1171.30" y2="761.50" stroke="#000000" stroke-width="1"/>
<line x1="1171.30" y1="761.50" x2="1174.10" y2="761.50" stroke="#0000FF" stroke-width="1"/>
<line x1="1177.10" y1="761.50" x2="1180.30" y2="761.50" stroke="#0000FF" stroke-width="1"/>
<line x1="1180.30" y1="761.50" x2="1186.30" y2="761.50" stroke="#000000" stroke-width="1"/>
<line x1="1186.30" y1="761.50" x2="1195.29" y2="761.50" stroke="#000080" stroke-width="1"/>
<line x1="1174.50" y1="754.41" x2="1174.50" y2="766.91" stroke="#0000FF" stroke-width="1.2"/>
<line x1="1177.50" y1="754.41" x2="1177.50" y2="766.91" stroke="#0000FF" stroke-width="1.2"/>
<line x1="1156.06" y1="730.50" x2="1163.91" y2="730.50" stroke="#800000" stroke-width="1"/>
<line x1="1195.29" y1="730.50" x2="1203.13" y2="730.50" stroke="#800000" stroke-width="1"/>
<line x1="1156.50" y1="726.03" x2="1156.50" y2="734.03" stroke="#800000" stroke-width="1"/>
<text x="1154.90" y="732.18" fill="#800000" stroke="#800000" stroke-width="0.22" font-size="6.8" font-family='"Liberation Sans", sans-serif' text-anchor="end" font-weight="normal" >DB1N</text>
<line x1="1203.50" y1="726.03" x2="1203.50" y2="734.03" stroke="#800000" stroke-width="1"/>
<text x="1205.30" y="732.18" fill="#800000" stroke="#800000" stroke-width="0.22" font-size="6.8" font-family='"Liberation Sans", sans-serif' text-anchor="start" font-weight="normal" >DB1P</text>
<text x="1165.50" y="711.00" fill="#1a1a1a" stroke="#1a1a1a" stroke-width="0.22" font-size="6.8" font-family='"Liberation Sans", sans-serif' text-anchor="start" font-weight="normal" >R35</text>
<text x="1165.50" y="719.40" fill="#1a1a1a" stroke="#1a1a1a" stroke-width="0.22" font-size="6.8" font-family='"Liberation Sans", sans-serif' text-anchor="start" font-weight="normal" >50</text>
<text x="1197.50" y="711.00" fill="#1a1a1a" stroke="#1a1a1a" stroke-width="0.22" font-size="6.8" font-family='"Liberation Sans", sans-serif' text-anchor="start" font-weight="normal" >R36</text>
<text x="1197.50" y="719.40" fill="#1a1a1a" stroke="#1a1a1a" stroke-width="0.22" font-size="6.8" font-family='"Liberation Sans", sans-serif' text-anchor="start" font-weight="normal" >50</text>
<text x="1170.60" y="725.60" fill="#1a1a1a" stroke="#1a1a1a" stroke-width="0.22" font-size="6.8" font-family='"Liberation Sans", sans-serif' text-anchor="start" font-weight="normal" >R34</text>
<text x="1170.60" y="738.00" fill="#1a1a1a" stroke="#1a1a1a" stroke-width="0.22" font-size="6.8" font-family='"Liberation Sans", sans-serif' text-anchor="start" font-weight="normal" >50</text>
<text x="1170.60" y="751.80" fill="#1a1a1a" stroke="#1a1a1a" stroke-width="0.22" font-size="6.8" font-family='"Liberation Sans", sans-serif' text-anchor="start" font-weight="normal" >C12</text>
<text x="1170.60" y="773.20" fill="#1a1a1a" stroke="#1a1a1a" stroke-width="0.22" font-size="6.8" font-family='"Liberation Sans", sans-serif' text-anchor="start" font-weight="normal" >50V</text>
<text x="1170.60" y="781.50" fill="#1a1a1a" stroke="#1a1a1a" stroke-width="0.22" font-size="6.8" font-family='"Liberation Sans", sans-serif' text-anchor="start" font-weight="normal" >15pF</text>
<rect x="175.50" y="39.50" width="15" height="31.00" fill="none" stroke="#0000FF" stroke-width="1.1"/>
<circle cx="182.50" cy="47.50" r="2.4" fill="#0000FF"/>
<circle cx="182.50" cy="55.50" r="2.4" fill="#0000FF"/>
<rect x="180.10" y="61.00" width="5" height="5" fill="#0000FF"/>
<line x1="186.00" y1="47.50" x2="190.50" y2="47.50" stroke="#0000FF" stroke-width="1"/>
<line x1="190.50" y1="47.50" x2="206.82" y2="47.50" stroke="#000000" stroke-width="1"/>
<text x="196.80" y="46.52" fill="#333" stroke="#333" stroke-width="0.05" font-size="6.4" font-family='"Liberation Sans", sans-serif' text-anchor="start" font-weight="normal" >3</text>
<line x1="186.00" y1="55.50" x2="190.50" y2="55.50" stroke="#0000FF" stroke-width="1"/>
<line x1="190.50" y1="55.50" x2="206.82" y2="55.50" stroke="#000000" stroke-width="1"/>
<text x="196.80" y="54.37" fill="#333" stroke="#333" stroke-width="0.05" font-size="6.4" font-family='"Liberation Sans", sans-serif' text-anchor="start" font-weight="normal" >2</text>
<line x1="186.00" y1="63.50" x2="190.50" y2="63.50" stroke="#0000FF" stroke-width="1"/>
<line x1="190.50" y1="63.50" x2="206.82" y2="63.50" stroke="#000000" stroke-width="1"/>
<text x="196.80" y="62.21" fill="#333" stroke="#333" stroke-width="0.05" font-size="6.4" font-family='"Liberation Sans", sans-serif' text-anchor="start" font-weight="normal" >1</text>
<line x1="206.82" y1="47.50" x2="238.20" y2="47.50" stroke="#000080" stroke-width="1"/>
<line x1="238.50" y1="39.67" x2="238.50" y2="47.52" stroke="#800000" stroke-width="1"/>
<line x1="234.70" y1="39.50" x2="242.80" y2="39.50" stroke="#800000" stroke-width="1"/>
<text x="238.50" y="37.72" fill="#800000" stroke="#800000" stroke-width="0.22" font-size="6.8" font-family='"Liberation Sans", sans-serif' text-anchor="middle" font-weight="normal" >VDD</text>
<line x1="206.82" y1="63.50" x2="222.51" y2="63.50" stroke="#000080" stroke-width="1"/>
<line x1="222.50" y1="63.21" x2="222.50" y2="71.06" stroke="#800000" stroke-width="1"/>
<line x1="215.00" y1="71.50" x2="230.50" y2="71.50" stroke="#800000" stroke-width="1"/>
<line x1="217.50" y1="73.50" x2="228.00" y2="73.50" stroke="#800000" stroke-width="1"/>
<line x1="220.00" y1="75.50" x2="225.50" y2="75.50" stroke="#800000" stroke-width="1"/>
<rect x="222.00" y="77.00" width="1" height="1" fill="#800000"/>
<text x="222.50" y="84.41" fill="#800000" stroke="#800000" stroke-width="0.22" font-size="6.8" font-family='"Liberation Sans", sans-serif' text-anchor="middle" font-weight="normal" >GND</text>
<line x1="206.82" y1="55.50" x2="261.74" y2="55.50" stroke="#000080" stroke-width="1"/>
<line x1="261.74" y1="55.50" x2="269.58" y2="55.50" stroke="#800000" stroke-width="1"/>
<line x1="269.50" y1="51.37" x2="269.50" y2="59.37" stroke="#800000" stroke-width="1"/>
<text x="271.30" y="57.51" fill="#800000" stroke="#800000" stroke-width="0.22" font-size="6.8" font-family='"Liberation Sans", sans-serif' text-anchor="start" font-weight="normal" >CLKP</text>
<line x1="252.50" y1="47.07" x2="252.50" y2="55.37" stroke="#000000" stroke-width="1"/>
<circle cx="252.50" cy="44.37" r="2.6" fill="#fff" stroke="#000" stroke-width="1"/>
<text x="249.70" y="39.47" fill="#2e2ea0" stroke="#2e2ea0" stroke-width="0.15" font-size="7.6" font-family='"Liberation Serif", serif' text-anchor="start" font-weight="normal" textLength="11.75" lengthAdjust="spacingAndGlyphs">TP9</text>
<text x="249.50" y="62.54" fill="#3a3a3a" stroke="#3a3a3a" stroke-width="0.22" font-size="6.6" font-family='"Liberation Sans", sans-serif' text-anchor="start" font-weight="normal" >5015</text>
<circle cx="252.50" cy="55.50" r="1.2" fill="#000080"/>
<text x="175.00" y="37.97" fill="#1a1a1a" stroke="#1a1a1a" stroke-width="0.22" font-size="6.8" font-family='"Liberation Sans", sans-serif' text-anchor="start" font-weight="normal" >J9</text>
<text x="175.00" y="76.96" fill="#24248e" stroke="#24248e" stroke-width="0.22" font-size="6.8" font-family='"Liberation Sans", sans-serif' text-anchor="start" font-weight="normal" letter-spacing="0.1">5-146278-3</text>
<rect x="175.50" y="117.50" width="15" height="32.00" fill="none" stroke="#0000FF" stroke-width="1.1"/>
<circle cx="182.50" cy="125.50" r="2.4" fill="#0000FF"/>
<circle cx="182.50" cy="133.50" r="2.4" fill="#0000FF"/>
<rect x="180.10" y="139.00" width="5" height="5" fill="#0000FF"/>
<line x1="186.00" y1="125.50" x2="190.50" y2="125.50" stroke="#0000FF" stroke-width="1"/>
<line x1="190.50" y1="125.50" x2="206.82" y2="125.50" stroke="#000000" stroke-width="1"/>
<text x="196.80" y="124.97" fill="#333" stroke="#333" stroke-width="0.05" font-size="6.4" font-family='"Liberation Sans", sans-serif' text-anchor="start" font-weight="normal" >3</text>
<line x1="186.00" y1="133.50" x2="190.50" y2="133.50" stroke="#0000FF" stroke-width="1"/>
<line x1="190.50" y1="133.50" x2="206.82" y2="133.50" stroke="#000000" stroke-width="1"/>
<text x="196.80" y="132.81" fill="#333" stroke="#333" stroke-width="0.05" font-size="6.4" font-family='"Liberation Sans", sans-serif' text-anchor="start" font-weight="normal" >2</text>
<line x1="186.00" y1="141.50" x2="190.50" y2="141.50" stroke="#0000FF" stroke-width="1"/>
<line x1="190.50" y1="141.50" x2="206.82" y2="141.50" stroke="#000000" stroke-width="1"/>
<text x="196.80" y="140.66" fill="#333" stroke="#333" stroke-width="0.05" font-size="6.4" font-family='"Liberation Sans", sans-serif' text-anchor="start" font-weight="normal" >1</text>
<line x1="206.82" y1="125.50" x2="238.20" y2="125.50" stroke="#000080" stroke-width="1"/>
<line x1="238.50" y1="118.12" x2="238.50" y2="125.97" stroke="#800000" stroke-width="1"/>
<line x1="234.70" y1="118.50" x2="242.80" y2="118.50" stroke="#800000" stroke-width="1"/>
<text x="238.50" y="116.17" fill="#800000" stroke="#800000" stroke-width="0.22" font-size="6.8" font-family='"Liberation Sans", sans-serif' text-anchor="middle" font-weight="normal" >VDD</text>
<line x1="206.82" y1="141.50" x2="222.51" y2="141.50" stroke="#000080" stroke-width="1"/>
<line x1="222.50" y1="141.66" x2="222.50" y2="149.51" stroke="#800000" stroke-width="1"/>
<line x1="215.00" y1="149.50" x2="230.50" y2="149.50" stroke="#800000" stroke-width="1"/>
<line x1="217.50" y1="151.50" x2="228.00" y2="151.50" stroke="#800000" stroke-width="1"/>
<line x1="220.00" y1="153.50" x2="225.50" y2="153.50" stroke="#800000" stroke-width="1"/>
<rect x="222.00" y="155.00" width="1" height="1" fill="#800000"/>
<text x="222.50" y="162.86" fill="#800000" stroke="#800000" stroke-width="0.22" font-size="6.8" font-family='"Liberation Sans", sans-serif' text-anchor="middle" font-weight="normal" >GND</text>
<line x1="206.82" y1="133.50" x2="261.74" y2="133.50" stroke="#000080" stroke-width="1"/>
<line x1="261.74" y1="133.50" x2="269.58" y2="133.50" stroke="#800000" stroke-width="1"/>
<line x1="269.50" y1="129.81" x2="269.50" y2="137.81" stroke="#800000" stroke-width="1"/>
<text x="271.30" y="135.96" fill="#800000" stroke="#800000" stroke-width="0.22" font-size="6.8" font-family='"Liberation Sans", sans-serif' text-anchor="start" font-weight="normal" >CLKN</text>
<line x1="252.50" y1="125.52" x2="252.50" y2="133.81" stroke="#000000" stroke-width="1"/>
<circle cx="252.50" cy="122.81" r="2.6" fill="#fff" stroke="#000" stroke-width="1"/>
<text x="249.70" y="117.92" fill="#2e2ea0" stroke="#2e2ea0" stroke-width="0.15" font-size="7.6" font-family='"Liberation Serif", serif' text-anchor="start" font-weight="normal" textLength="15.28" lengthAdjust="spacingAndGlyphs">TP10</text>
<text x="249.50" y="140.99" fill="#3a3a3a" stroke="#3a3a3a" stroke-width="0.22" font-size="6.6" font-family='"Liberation Sans", sans-serif' text-anchor="start" font-weight="normal" >5015</text>
<circle cx="252.50" cy="133.50" r="1.2" fill="#000080"/>
<text x="175.00" y="116.42" fill="#1a1a1a" stroke="#1a1a1a" stroke-width="0.22" font-size="6.8" font-family='"Liberation Sans", sans-serif' text-anchor="start" font-weight="normal" >J10</text>
<text x="175.00" y="155.41" fill="#24248e" stroke="#24248e" stroke-width="0.22" font-size="6.8" font-family='"Liberation Sans", sans-serif' text-anchor="start" font-weight="normal" letter-spacing="0.1">5-146278-3</text>
<rect x="175.50" y="196.50" width="15" height="31.00" fill="none" stroke="#0000FF" stroke-width="1.1"/>
<circle cx="182.50" cy="204.50" r="2.4" fill="#0000FF"/>
<circle cx="182.50" cy="212.50" r="2.4" fill="#0000FF"/>
<rect x="180.10" y="218.00" width="5" height="5" fill="#0000FF"/>
<line x1="186.00" y1="204.50" x2="190.50" y2="204.50" stroke="#0000FF" stroke-width="1"/>
<line x1="190.50" y1="204.50" x2="206.82" y2="204.50" stroke="#000000" stroke-width="1"/>
<text x="196.80" y="203.42" fill="#333" stroke="#333" stroke-width="0.05" font-size="6.4" font-family='"Liberation Sans", sans-serif' text-anchor="start" font-weight="normal" >3</text>
<line x1="186.00" y1="212.50" x2="190.50" y2="212.50" stroke="#0000FF" stroke-width="1"/>
<line x1="190.50" y1="212.50" x2="206.82" y2="212.50" stroke="#000000" stroke-width="1"/>
<text x="196.80" y="211.27" fill="#333" stroke="#333" stroke-width="0.05" font-size="6.4" font-family='"Liberation Sans", sans-serif' text-anchor="start" font-weight="normal" >2</text>
<line x1="186.00" y1="220.50" x2="190.50" y2="220.50" stroke="#0000FF" stroke-width="1"/>
<line x1="190.50" y1="220.50" x2="206.82" y2="220.50" stroke="#000000" stroke-width="1"/>
<text x="196.80" y="219.11" fill="#333" stroke="#333" stroke-width="0.05" font-size="6.4" font-family='"Liberation Sans", sans-serif' text-anchor="start" font-weight="normal" >1</text>
<line x1="206.82" y1="204.50" x2="246.05" y2="204.50" stroke="#000080" stroke-width="1"/>
<line x1="246.50" y1="196.57" x2="246.50" y2="204.42" stroke="#800000" stroke-width="1"/>
<line x1="242.70" y1="196.50" x2="250.80" y2="196.50" stroke="#800000" stroke-width="1"/>
<text x="246.50" y="194.62" fill="#800000" stroke="#800000" stroke-width="0.22" font-size="6.8" font-family='"Liberation Sans", sans-serif' text-anchor="middle" font-weight="normal" >VDD</text>
<line x1="206.82" y1="220.50" x2="230.36" y2="220.50" stroke="#000080" stroke-width="1"/>
<line x1="230.50" y1="220.11" x2="230.50" y2="227.96" stroke="#800000" stroke-width="1"/>
<line x1="223.00" y1="227.50" x2="238.50" y2="227.50" stroke="#800000" stroke-width="1"/>
<line x1="225.50" y1="229.50" x2="236.00" y2="229.50" stroke="#800000" stroke-width="1"/>
<line x1="228.00" y1="231.50" x2="233.50" y2="231.50" stroke="#800000" stroke-width="1"/>
<rect x="230.00" y="233.00" width="1" height="1" fill="#800000"/>
<text x="230.50" y="241.31" fill="#800000" stroke="#800000" stroke-width="0.22" font-size="6.8" font-family='"Liberation Sans", sans-serif' text-anchor="middle" font-weight="normal" >GND</text>
<line x1="206.82" y1="212.50" x2="261.74" y2="212.50" stroke="#000080" stroke-width="1"/>
<line x1="261.74" y1="212.50" x2="269.58" y2="212.50" stroke="#800000" stroke-width="1"/>
<line x1="269.50" y1="208.27" x2="269.50" y2="216.27" stroke="#800000" stroke-width="1"/>
<text x="271.30" y="214.41" fill="#800000" stroke="#800000" stroke-width="0.22" font-size="6.8" font-family='"Liberation Sans", sans-serif' text-anchor="start" font-weight="normal" >CLKAP</text>
<line x1="260.50" y1="203.97" x2="260.50" y2="212.27" stroke="#000000" stroke-width="1"/>
<circle cx="260.50" cy="201.27" r="2.6" fill="#fff" stroke="#000" stroke-width="1"/>
<text x="257.70" y="196.37" fill="#2e2ea0" stroke="#2e2ea0" stroke-width="0.15" font-size="7.6" font-family='"Liberation Serif", serif' text-anchor="start" font-weight="normal" textLength="15.02" lengthAdjust="spacingAndGlyphs">TP11</text>
<text x="257.50" y="219.44" fill="#3a3a3a" stroke="#3a3a3a" stroke-width="0.22" font-size="6.6" font-family='"Liberation Sans", sans-serif' text-anchor="start" font-weight="normal" >5015</text>
<circle cx="260.50" cy="212.50" r="1.2" fill="#000080"/>
<text x="175.00" y="194.87" fill="#1a1a1a" stroke="#1a1a1a" stroke-width="0.22" font-size="6.8" font-family='"Liberation Sans", sans-serif' text-anchor="start" font-weight="normal" >J11</text>
<text x="175.00" y="233.86" fill="#24248e" stroke="#24248e" stroke-width="0.22" font-size="6.8" font-family='"Liberation Sans", sans-serif' text-anchor="start" font-weight="normal" letter-spacing="0.1">5-146278-3</text>
<rect x="316.50" y="39.50" width="15" height="31.00" fill="none" stroke="#0000FF" stroke-width="1.1"/>
<circle cx="323.50" cy="47.50" r="2.4" fill="#0000FF"/>
<circle cx="323.50" cy="55.50" r="2.4" fill="#0000FF"/>
<rect x="321.10" y="61.00" width="5" height="5" fill="#0000FF"/>
<line x1="327.00" y1="47.50" x2="331.50" y2="47.50" stroke="#0000FF" stroke-width="1"/>
<line x1="331.50" y1="47.50" x2="348.03" y2="47.50" stroke="#000000" stroke-width="1"/>
<text x="337.80" y="46.52" fill="#333" stroke="#333" stroke-width="0.05" font-size="6.4" font-family='"Liberation Sans", sans-serif' text-anchor="start" font-weight="normal" >3</text>
<line x1="327.00" y1="55.50" x2="331.50" y2="55.50" stroke="#0000FF" stroke-width="1"/>
<line x1="331.50" y1="55.50" x2="348.03" y2="55.50" stroke="#000000" stroke-width="1"/>
<text x="337.80" y="54.37" fill="#333" stroke="#333" stroke-width="0.05" font-size="6.4" font-family='"Liberation Sans", sans-serif' text-anchor="start" font-weight="normal" >2</text>
<line x1="327.00" y1="63.50" x2="331.50" y2="63.50" stroke="#0000FF" stroke-width="1"/>
<line x1="331.50" y1="63.50" x2="348.03" y2="63.50" stroke="#000000" stroke-width="1"/>
<text x="337.80" y="62.21" fill="#333" stroke="#333" stroke-width="0.05" font-size="6.4" font-family='"Liberation Sans", sans-serif' text-anchor="start" font-weight="normal" >1</text>
<line x1="348.03" y1="47.50" x2="379.41" y2="47.50" stroke="#000080" stroke-width="1"/>
<line x1="379.50" y1="39.67" x2="379.50" y2="47.52" stroke="#800000" stroke-width="1"/>
<line x1="375.70" y1="39.50" x2="383.80" y2="39.50" stroke="#800000" stroke-width="1"/>
<text x="379.50" y="37.72" fill="#800000" stroke="#800000" stroke-width="0.22" font-size="6.8" font-family='"Liberation Sans", sans-serif' text-anchor="middle" font-weight="normal" >VDD</text>
<line x1="348.03" y1="63.50" x2="363.72" y2="63.50" stroke="#000080" stroke-width="1"/>
<line x1="363.50" y1="63.21" x2="363.50" y2="71.06" stroke="#800000" stroke-width="1"/>
<line x1="356.00" y1="71.50" x2="371.50" y2="71.50" stroke="#800000" stroke-width="1"/>
<line x1="358.50" y1="73.50" x2="369.00" y2="73.50" stroke="#800000" stroke-width="1"/>
<line x1="361.00" y1="75.50" x2="366.50" y2="75.50" stroke="#800000" stroke-width="1"/>
<rect x="363.00" y="77.00" width="1" height="1" fill="#800000"/>
<text x="363.50" y="84.41" fill="#800000" stroke="#800000" stroke-width="0.22" font-size="6.8" font-family='"Liberation Sans", sans-serif' text-anchor="middle" font-weight="normal" >GND</text>
<line x1="348.03" y1="55.50" x2="402.94" y2="55.50" stroke="#000080" stroke-width="1"/>
<line x1="402.94" y1="55.50" x2="410.79" y2="55.50" stroke="#800000" stroke-width="1"/>
<line x1="410.50" y1="51.37" x2="410.50" y2="59.37" stroke="#800000" stroke-width="1"/>
<text x="412.30" y="57.51" fill="#800000" stroke="#800000" stroke-width="0.22" font-size="6.8" font-family='"Liberation Sans", sans-serif' text-anchor="start" font-weight="normal" >CLKAN</text>
<line x1="394.50" y1="47.07" x2="394.50" y2="55.37" stroke="#000000" stroke-width="1"/>
<circle cx="394.50" cy="44.37" r="2.6" fill="#fff" stroke="#000" stroke-width="1"/>
<text x="391.70" y="39.47" fill="#2e2ea0" stroke="#2e2ea0" stroke-width="0.15" font-size="7.6" font-family='"Liberation Serif", serif' text-anchor="start" font-weight="normal" textLength="15.28" lengthAdjust="spacingAndGlyphs">TP12</text>
<text x="391.50" y="62.54" fill="#3a3a3a" stroke="#3a3a3a" stroke-width="0.22" font-size="6.6" font-family='"Liberation Sans", sans-serif' text-anchor="start" font-weight="normal" >5015</text>
<circle cx="394.50" cy="55.50" r="1.2" fill="#000080"/>
<text x="316.00" y="37.97" fill="#1a1a1a" stroke="#1a1a1a" stroke-width="0.22" font-size="6.8" font-family='"Liberation Sans", sans-serif' text-anchor="start" font-weight="normal" >J12</text>
<text x="316.00" y="76.96" fill="#24248e" stroke="#24248e" stroke-width="0.22" font-size="6.8" font-family='"Liberation Sans", sans-serif' text-anchor="start" font-weight="normal" letter-spacing="0.1">5-146278-3</text>
<rect x="316.50" y="117.50" width="15" height="32.00" fill="none" stroke="#0000FF" stroke-width="1.1"/>
<circle cx="323.50" cy="125.50" r="2.4" fill="#0000FF"/>
<circle cx="323.50" cy="133.50" r="2.4" fill="#0000FF"/>
<rect x="321.10" y="139.00" width="5" height="5" fill="#0000FF"/>
<line x1="327.00" y1="125.50" x2="331.50" y2="125.50" stroke="#0000FF" stroke-width="1"/>
<line x1="331.50" y1="125.50" x2="348.03" y2="125.50" stroke="#000000" stroke-width="1"/>
<text x="337.80" y="124.97" fill="#333" stroke="#333" stroke-width="0.05" font-size="6.4" font-family='"Liberation Sans", sans-serif' text-anchor="start" font-weight="normal" >3</text>
<line x1="327.00" y1="133.50" x2="331.50" y2="133.50" stroke="#0000FF" stroke-width="1"/>
<line x1="331.50" y1="133.50" x2="348.03" y2="133.50" stroke="#000000" stroke-width="1"/>
<text x="337.80" y="132.81" fill="#333" stroke="#333" stroke-width="0.05" font-size="6.4" font-family='"Liberation Sans", sans-serif' text-anchor="start" font-weight="normal" >2</text>
<line x1="327.00" y1="141.50" x2="331.50" y2="141.50" stroke="#0000FF" stroke-width="1"/>
<line x1="331.50" y1="141.50" x2="348.03" y2="141.50" stroke="#000000" stroke-width="1"/>
<text x="337.80" y="140.66" fill="#333" stroke="#333" stroke-width="0.05" font-size="6.4" font-family='"Liberation Sans", sans-serif' text-anchor="start" font-weight="normal" >1</text>
<line x1="348.03" y1="125.50" x2="379.41" y2="125.50" stroke="#000080" stroke-width="1"/>
<line x1="379.50" y1="118.12" x2="379.50" y2="125.97" stroke="#800000" stroke-width="1"/>
<line x1="375.70" y1="118.50" x2="383.80" y2="118.50" stroke="#800000" stroke-width="1"/>
<text x="379.50" y="116.17" fill="#800000" stroke="#800000" stroke-width="0.22" font-size="6.8" font-family='"Liberation Sans", sans-serif' text-anchor="middle" font-weight="normal" >VDD</text>
<line x1="348.03" y1="141.50" x2="363.72" y2="141.50" stroke="#000080" stroke-width="1"/>
<line x1="363.50" y1="141.66" x2="363.50" y2="149.51" stroke="#800000" stroke-width="1"/>
<line x1="356.00" y1="149.50" x2="371.50" y2="149.50" stroke="#800000" stroke-width="1"/>
<line x1="358.50" y1="151.50" x2="369.00" y2="151.50" stroke="#800000" stroke-width="1"/>
<line x1="361.00" y1="153.50" x2="366.50" y2="153.50" stroke="#800000" stroke-width="1"/>
<rect x="363.00" y="155.00" width="1" height="1" fill="#800000"/>
<text x="363.50" y="162.86" fill="#800000" stroke="#800000" stroke-width="0.22" font-size="6.8" font-family='"Liberation Sans", sans-serif' text-anchor="middle" font-weight="normal" >GND</text>
<line x1="348.03" y1="133.50" x2="402.94" y2="133.50" stroke="#000080" stroke-width="1"/>
<line x1="402.94" y1="133.50" x2="410.79" y2="133.50" stroke="#800000" stroke-width="1"/>
<line x1="410.50" y1="129.81" x2="410.50" y2="137.81" stroke="#800000" stroke-width="1"/>
<text x="412.30" y="135.96" fill="#800000" stroke="#800000" stroke-width="0.22" font-size="6.8" font-family='"Liberation Sans", sans-serif' text-anchor="start" font-weight="normal" >CLKBN</text>
<line x1="394.50" y1="125.52" x2="394.50" y2="133.81" stroke="#000000" stroke-width="1"/>
<circle cx="394.50" cy="122.81" r="2.6" fill="#fff" stroke="#000" stroke-width="1"/>
<text x="391.70" y="117.92" fill="#2e2ea0" stroke="#2e2ea0" stroke-width="0.15" font-size="7.6" font-family='"Liberation Serif", serif' text-anchor="start" font-weight="normal" textLength="15.28" lengthAdjust="spacingAndGlyphs">TP22</text>
<text x="391.50" y="140.99" fill="#3a3a3a" stroke="#3a3a3a" stroke-width="0.22" font-size="6.6" font-family='"Liberation Sans", sans-serif' text-anchor="start" font-weight="normal" >5015</text>
<circle cx="394.50" cy="133.50" r="1.2" fill="#000080"/>
<text x="316.00" y="116.42" fill="#1a1a1a" stroke="#1a1a1a" stroke-width="0.22" font-size="6.8" font-family='"Liberation Sans", sans-serif' text-anchor="start" font-weight="normal" >J22</text>
<text x="316.00" y="155.41" fill="#24248e" stroke="#24248e" stroke-width="0.22" font-size="6.8" font-family='"Liberation Sans", sans-serif' text-anchor="start" font-weight="normal" letter-spacing="0.1">5-146278-3</text>
<rect x="316.50" y="196.50" width="15" height="31.00" fill="none" stroke="#0000FF" stroke-width="1.1"/>
<circle cx="323.50" cy="204.50" r="2.4" fill="#0000FF"/>
<circle cx="323.50" cy="212.50" r="2.4" fill="#0000FF"/>
<rect x="321.10" y="218.00" width="5" height="5" fill="#0000FF"/>
<line x1="327.00" y1="204.50" x2="331.50" y2="204.50" stroke="#0000FF" stroke-width="1"/>
<line x1="331.50" y1="204.50" x2="348.03" y2="204.50" stroke="#000000" stroke-width="1"/>
<text x="337.80" y="203.42" fill="#333" stroke="#333" stroke-width="0.05" font-size="6.4" font-family='"Liberation Sans", sans-serif' text-anchor="start" font-weight="normal" >3</text>
<line x1="327.00" y1="212.50" x2="331.50" y2="212.50" stroke="#0000FF" stroke-width="1"/>
<line x1="331.50" y1="212.50" x2="348.03" y2="212.50" stroke="#000000" stroke-width="1"/>
<text x="337.80" y="211.27" fill="#333" stroke="#333" stroke-width="0.05" font-size="6.4" font-family='"Liberation Sans", sans-serif' text-anchor="start" font-weight="normal" >2</text>
<line x1="327.00" y1="220.50" x2="331.50" y2="220.50" stroke="#0000FF" stroke-width="1"/>
<line x1="331.50" y1="220.50" x2="348.03" y2="220.50" stroke="#000000" stroke-width="1"/>
<text x="337.80" y="219.11" fill="#333" stroke="#333" stroke-width="0.05" font-size="6.4" font-family='"Liberation Sans", sans-serif' text-anchor="start" font-weight="normal" >1</text>
<line x1="348.03" y1="204.50" x2="379.41" y2="204.50" stroke="#000080" stroke-width="1"/>
<line x1="379.50" y1="196.57" x2="379.50" y2="204.42" stroke="#800000" stroke-width="1"/>
<line x1="375.70" y1="196.50" x2="383.80" y2="196.50" stroke="#800000" stroke-width="1"/>
<text x="379.50" y="194.62" fill="#800000" stroke="#800000" stroke-width="0.22" font-size="6.8" font-family='"Liberation Sans", sans-serif' text-anchor="middle" font-weight="normal" >VDD</text>
<line x1="348.03" y1="220.50" x2="363.72" y2="220.50" stroke="#000080" stroke-width="1"/>
<line x1="363.50" y1="220.11" x2="363.50" y2="227.96" stroke="#800000" stroke-width="1"/>
<line x1="356.00" y1="227.50" x2="371.50" y2="227.50" stroke="#800000" stroke-width="1"/>
<line x1="358.50" y1="229.50" x2="369.00" y2="229.50" stroke="#800000" stroke-width="1"/>
<line x1="361.00" y1="231.50" x2="366.50" y2="231.50" stroke="#800000" stroke-width="1"/>
<rect x="363.00" y="233.00" width="1" height="1" fill="#800000"/>
<text x="363.50" y="241.31" fill="#800000" stroke="#800000" stroke-width="0.22" font-size="6.8" font-family='"Liberation Sans", sans-serif' text-anchor="middle" font-weight="normal" >GND</text>
<line x1="348.03" y1="212.50" x2="395.10" y2="212.50" stroke="#000080" stroke-width="1"/>
<line x1="395.10" y1="212.50" x2="402.94" y2="212.50" stroke="#800000" stroke-width="1"/>
<line x1="402.50" y1="208.27" x2="402.50" y2="216.27" stroke="#800000" stroke-width="1"/>
<text x="404.30" y="214.41" fill="#800000" stroke="#800000" stroke-width="0.22" font-size="6.8" font-family='"Liberation Sans", sans-serif' text-anchor="start" font-weight="normal" >CLKBP</text>
<line x1="394.50" y1="203.97" x2="394.50" y2="212.27" stroke="#000000" stroke-width="1"/>
<circle cx="394.50" cy="201.27" r="2.6" fill="#fff" stroke="#000" stroke-width="1"/>
<text x="391.70" y="196.37" fill="#2e2ea0" stroke="#2e2ea0" stroke-width="0.15" font-size="7.6" font-family='"Liberation Serif", serif' text-anchor="start" font-weight="normal" textLength="15.28" lengthAdjust="spacingAndGlyphs">TP21</text>
<text x="391.50" y="219.44" fill="#3a3a3a" stroke="#3a3a3a" stroke-width="0.22" font-size="6.6" font-family='"Liberation Sans", sans-serif' text-anchor="start" font-weight="normal" >5015</text>
<circle cx="394.50" cy="212.50" r="1.2" fill="#000080"/>
<text x="316.00" y="194.87" fill="#1a1a1a" stroke="#1a1a1a" stroke-width="0.22" font-size="6.8" font-family='"Liberation Sans", sans-serif' text-anchor="start" font-weight="normal" >J21</text>
<text x="316.00" y="233.86" fill="#24248e" stroke="#24248e" stroke-width="0.22" font-size="6.8" font-family='"Liberation Sans", sans-serif' text-anchor="start" font-weight="normal" letter-spacing="0.1">5-146278-3</text>
<rect x="159.50" y="439.50" width="15" height="31.00" fill="none" stroke="#0000FF" stroke-width="1.1"/>
<circle cx="166.50" cy="447.50" r="2.4" fill="#0000FF"/>
<circle cx="166.50" cy="455.50" r="2.4" fill="#0000FF"/>
<rect x="164.10" y="461.00" width="5" height="5" fill="#0000FF"/>
<line x1="170.00" y1="447.50" x2="174.50" y2="447.50" stroke="#0000FF" stroke-width="1"/>
<line x1="174.50" y1="447.50" x2="191.13" y2="447.50" stroke="#000000" stroke-width="1"/>
<text x="180.80" y="446.62" fill="#333" stroke="#333" stroke-width="0.05" font-size="6.4" font-family='"Liberation Sans", sans-serif' text-anchor="start" font-weight="normal" >3</text>
<line x1="170.00" y1="455.50" x2="174.50" y2="455.50" stroke="#0000FF" stroke-width="1"/>
<line x1="174.50" y1="455.50" x2="191.13" y2="455.50" stroke="#000000" stroke-width="1"/>
<text x="180.80" y="454.46" fill="#333" stroke="#333" stroke-width="0.05" font-size="6.4" font-family='"Liberation Sans", sans-serif' text-anchor="start" font-weight="normal" >2</text>
<line x1="170.00" y1="463.50" x2="174.50" y2="463.50" stroke="#0000FF" stroke-width="1"/>
<line x1="174.50" y1="463.50" x2="191.13" y2="463.50" stroke="#000000" stroke-width="1"/>
<text x="180.80" y="462.30" fill="#333" stroke="#333" stroke-width="0.05" font-size="6.4" font-family='"Liberation Sans", sans-serif' text-anchor="start" font-weight="normal" >1</text>
<line x1="191.13" y1="447.50" x2="222.51" y2="447.50" stroke="#000080" stroke-width="1"/>
<line x1="222.50" y1="439.76" x2="222.50" y2="447.62" stroke="#800000" stroke-width="1"/>
<line x1="218.70" y1="439.50" x2="226.80" y2="439.50" stroke="#800000" stroke-width="1"/>
<text x="222.50" y="437.81" fill="#800000" stroke="#800000" stroke-width="0.22" font-size="6.8" font-family='"Liberation Sans", sans-serif' text-anchor="middle" font-weight="normal" >VDD</text>
<line x1="191.13" y1="463.50" x2="206.82" y2="463.50" stroke="#000080" stroke-width="1"/>
<line x1="206.50" y1="463.30" x2="206.50" y2="471.15" stroke="#800000" stroke-width="1"/>
<line x1="199.00" y1="471.50" x2="214.50" y2="471.50" stroke="#800000" stroke-width="1"/>
<line x1="201.50" y1="473.50" x2="212.00" y2="473.50" stroke="#800000" stroke-width="1"/>
<line x1="204.00" y1="475.50" x2="209.50" y2="475.50" stroke="#800000" stroke-width="1"/>
<rect x="206.00" y="477.00" width="1" height="1" fill="#800000"/>
<text x="206.50" y="484.50" fill="#800000" stroke="#800000" stroke-width="0.22" font-size="6.8" font-family='"Liberation Sans", sans-serif' text-anchor="middle" font-weight="normal" >GND</text>
<line x1="191.13" y1="455.50" x2="246.05" y2="455.50" stroke="#000080" stroke-width="1"/>
<line x1="246.05" y1="455.50" x2="253.89" y2="455.50" stroke="#800000" stroke-width="1"/>
<line x1="253.50" y1="451.46" x2="253.50" y2="459.46" stroke="#800000" stroke-width="1"/>
<text x="255.30" y="457.61" fill="#800000" stroke="#800000" stroke-width="0.22" font-size="6.8" font-family='"Liberation Sans", sans-serif' text-anchor="start" font-weight="normal" >D4P</text>
<line x1="245.50" y1="447.16" x2="245.50" y2="455.46" stroke="#000000" stroke-width="1"/>
<circle cx="245.50" cy="444.46" r="2.6" fill="#fff" stroke="#000" stroke-width="1"/>
<text x="242.70" y="439.57" fill="#2e2ea0" stroke="#2e2ea0" stroke-width="0.15" font-size="7.6" font-family='"Liberation Serif", serif' text-anchor="start" font-weight="normal" textLength="11.75" lengthAdjust="spacingAndGlyphs">TP1</text>
<text x="242.50" y="462.64" fill="#3a3a3a" stroke="#3a3a3a" stroke-width="0.22" font-size="6.6" font-family='"Liberation Sans", sans-serif' text-anchor="start" font-weight="normal" >5015</text>
<circle cx="245.50" cy="455.50" r="1.2" fill="#000080"/>
<text x="159.00" y="438.06" fill="#1a1a1a" stroke="#1a1a1a" stroke-width="0.22" font-size="6.8" font-family='"Liberation Sans", sans-serif' text-anchor="start" font-weight="normal" >J1</text>
<text x="159.00" y="477.05" fill="#24248e" stroke="#24248e" stroke-width="0.22" font-size="6.8" font-family='"Liberation Sans", sans-serif' text-anchor="start" font-weight="normal" letter-spacing="0.1">5-146278-3</text>
<rect x="159.50" y="517.50" width="15" height="32.00" fill="none" stroke="#0000FF" stroke-width="1.1"/>
<circle cx="166.50" cy="526.50" r="2.4" fill="#0000FF"/>
<circle cx="166.50" cy="533.50" r="2.4" fill="#0000FF"/>
<rect x="164.10" y="539.00" width="5" height="5" fill="#0000FF"/>
<line x1="170.00" y1="526.50" x2="174.50" y2="526.50" stroke="#0000FF" stroke-width="1"/>
<line x1="174.50" y1="526.50" x2="191.13" y2="526.50" stroke="#000000" stroke-width="1"/>
<text x="180.80" y="525.06" fill="#333" stroke="#333" stroke-width="0.05" font-size="6.4" font-family='"Liberation Sans", sans-serif' text-anchor="start" font-weight="normal" >3</text>
<line x1="170.00" y1="533.50" x2="174.50" y2="533.50" stroke="#0000FF" stroke-width="1"/>
<line x1="174.50" y1="533.50" x2="191.13" y2="533.50" stroke="#000000" stroke-width="1"/>
<text x="180.80" y="532.91" fill="#333" stroke="#333" stroke-width="0.05" font-size="6.4" font-family='"Liberation Sans", sans-serif' text-anchor="start" font-weight="normal" >2</text>
<line x1="170.00" y1="541.50" x2="174.50" y2="541.50" stroke="#0000FF" stroke-width="1"/>
<line x1="174.50" y1="541.50" x2="191.13" y2="541.50" stroke="#000000" stroke-width="1"/>
<text x="180.80" y="540.75" fill="#333" stroke="#333" stroke-width="0.05" font-size="6.4" font-family='"Liberation Sans", sans-serif' text-anchor="start" font-weight="normal" >1</text>
<line x1="191.13" y1="526.50" x2="222.51" y2="526.50" stroke="#000080" stroke-width="1"/>
<line x1="222.50" y1="518.21" x2="222.50" y2="526.06" stroke="#800000" stroke-width="1"/>
<line x1="218.70" y1="518.50" x2="226.80" y2="518.50" stroke="#800000" stroke-width="1"/>
<text x="222.50" y="516.26" fill="#800000" stroke="#800000" stroke-width="0.22" font-size="6.8" font-family='"Liberation Sans", sans-serif' text-anchor="middle" font-weight="normal" >VDD</text>
<line x1="191.13" y1="541.50" x2="206.82" y2="541.50" stroke="#000080" stroke-width="1"/>
<line x1="206.50" y1="541.75" x2="206.50" y2="549.61" stroke="#800000" stroke-width="1"/>
<line x1="199.00" y1="549.50" x2="214.50" y2="549.50" stroke="#800000" stroke-width="1"/>
<line x1="201.50" y1="551.50" x2="212.00" y2="551.50" stroke="#800000" stroke-width="1"/>
<line x1="204.00" y1="553.50" x2="209.50" y2="553.50" stroke="#800000" stroke-width="1"/>
<rect x="206.00" y="555.00" width="1" height="1" fill="#800000"/>
<text x="206.50" y="562.95" fill="#800000" stroke="#800000" stroke-width="0.22" font-size="6.8" font-family='"Liberation Sans", sans-serif' text-anchor="middle" font-weight="normal" >GND</text>
<line x1="191.13" y1="533.50" x2="253.89" y2="533.50" stroke="#000080" stroke-width="1"/>
<line x1="253.89" y1="533.50" x2="261.74" y2="533.50" stroke="#800000" stroke-width="1"/>
<line x1="261.50" y1="529.91" x2="261.50" y2="537.91" stroke="#800000" stroke-width="1"/>
<text x="263.30" y="536.06" fill="#800000" stroke="#800000" stroke-width="0.22" font-size="6.8" font-family='"Liberation Sans", sans-serif' text-anchor="start" font-weight="normal" >D4N</text>
<line x1="245.50" y1="525.61" x2="245.50" y2="533.91" stroke="#000000" stroke-width="1"/>
<circle cx="245.50" cy="522.91" r="2.6" fill="#fff" stroke="#000" stroke-width="1"/>
<text x="242.70" y="518.02" fill="#2e2ea0" stroke="#2e2ea0" stroke-width="0.15" font-size="7.6" font-family='"Liberation Serif", serif' text-anchor="start" font-weight="normal" textLength="11.75" lengthAdjust="spacingAndGlyphs">TP2</text>
<text x="242.50" y="541.09" fill="#3a3a3a" stroke="#3a3a3a" stroke-width="0.22" font-size="6.6" font-family='"Liberation Sans", sans-serif' text-anchor="start" font-weight="normal" >5015</text>
<circle cx="245.50" cy="533.50" r="1.2" fill="#000080"/>
<text x="159.00" y="516.51" fill="#1a1a1a" stroke="#1a1a1a" stroke-width="0.22" font-size="6.8" font-family='"Liberation Sans", sans-serif' text-anchor="start" font-weight="normal" >J2</text>
<text x="159.00" y="555.50" fill="#24248e" stroke="#24248e" stroke-width="0.22" font-size="6.8" font-family='"Liberation Sans", sans-serif' text-anchor="start" font-weight="normal" letter-spacing="0.1">5-146278-3</text>
<rect x="159.50" y="596.50" width="15" height="31.00" fill="none" stroke="#0000FF" stroke-width="1.1"/>
<circle cx="166.50" cy="604.50" r="2.4" fill="#0000FF"/>
<circle cx="166.50" cy="612.50" r="2.4" fill="#0000FF"/>
<rect x="164.10" y="618.00" width="5" height="5" fill="#0000FF"/>
<line x1="170.00" y1="604.50" x2="174.50" y2="604.50" stroke="#0000FF" stroke-width="1"/>
<line x1="174.50" y1="604.50" x2="191.13" y2="604.50" stroke="#000000" stroke-width="1"/>
<text x="180.80" y="603.51" fill="#333" stroke="#333" stroke-width="0.05" font-size="6.4" font-family='"Liberation Sans", sans-serif' text-anchor="start" font-weight="normal" >3</text>
<line x1="170.00" y1="612.50" x2="174.50" y2="612.50" stroke="#0000FF" stroke-width="1"/>
<line x1="174.50" y1="612.50" x2="191.13" y2="612.50" stroke="#000000" stroke-width="1"/>
<text x="180.80" y="611.36" fill="#333" stroke="#333" stroke-width="0.05" font-size="6.4" font-family='"Liberation Sans", sans-serif' text-anchor="start" font-weight="normal" >2</text>
<line x1="170.00" y1="620.50" x2="174.50" y2="620.50" stroke="#0000FF" stroke-width="1"/>
<line x1="174.50" y1="620.50" x2="191.13" y2="620.50" stroke="#000000" stroke-width="1"/>
<text x="180.80" y="619.20" fill="#333" stroke="#333" stroke-width="0.05" font-size="6.4" font-family='"Liberation Sans", sans-serif' text-anchor="start" font-weight="normal" >1</text>
<line x1="191.13" y1="604.50" x2="222.51" y2="604.50" stroke="#000080" stroke-width="1"/>
<line x1="222.50" y1="596.66" x2="222.50" y2="604.51" stroke="#800000" stroke-width="1"/>
<line x1="218.70" y1="596.50" x2="226.80" y2="596.50" stroke="#800000" stroke-width="1"/>
<text x="222.50" y="594.71" fill="#800000" stroke="#800000" stroke-width="0.22" font-size="6.8" font-family='"Liberation Sans", sans-serif' text-anchor="middle" font-weight="normal" >VDD</text>
<line x1="191.13" y1="620.50" x2="206.82" y2="620.50" stroke="#000080" stroke-width="1"/>
<line x1="206.50" y1="620.20" x2="206.50" y2="628.05" stroke="#800000" stroke-width="1"/>
<line x1="199.00" y1="628.50" x2="214.50" y2="628.50" stroke="#800000" stroke-width="1"/>
<line x1="201.50" y1="630.50" x2="212.00" y2="630.50" stroke="#800000" stroke-width="1"/>
<line x1="204.00" y1="632.50" x2="209.50" y2="632.50" stroke="#800000" stroke-width="1"/>
<rect x="206.00" y="634.00" width="1" height="1" fill="#800000"/>
<text x="206.50" y="641.40" fill="#800000" stroke="#800000" stroke-width="0.22" font-size="6.8" font-family='"Liberation Sans", sans-serif' text-anchor="middle" font-weight="normal" >GND</text>
<line x1="191.13" y1="612.50" x2="246.05" y2="612.50" stroke="#000080" stroke-width="1"/>
<line x1="246.05" y1="612.50" x2="253.89" y2="612.50" stroke="#800000" stroke-width="1"/>
<line x1="253.50" y1="608.36" x2="253.50" y2="616.36" stroke="#800000" stroke-width="1"/>
<text x="255.30" y="614.51" fill="#800000" stroke="#800000" stroke-width="0.22" font-size="6.8" font-family='"Liberation Sans", sans-serif' text-anchor="start" font-weight="normal" >D3P</text>
<line x1="245.50" y1="604.06" x2="245.50" y2="612.36" stroke="#000000" stroke-width="1"/>
<circle cx="245.50" cy="601.36" r="2.6" fill="#fff" stroke="#000" stroke-width="1"/>
<text x="242.70" y="596.47" fill="#2e2ea0" stroke="#2e2ea0" stroke-width="0.15" font-size="7.6" font-family='"Liberation Serif", serif' text-anchor="start" font-weight="normal" textLength="11.75" lengthAdjust="spacingAndGlyphs">TP3</text>
<text x="242.50" y="619.54" fill="#3a3a3a" stroke="#3a3a3a" stroke-width="0.22" font-size="6.6" font-family='"Liberation Sans", sans-serif' text-anchor="start" font-weight="normal" >5015</text>
<circle cx="245.50" cy="612.50" r="1.2" fill="#000080"/>
<circle cx="191.50" cy="612.50" r="1.5" fill="#000080"/>
<text x="159.00" y="594.96" fill="#1a1a1a" stroke="#1a1a1a" stroke-width="0.22" font-size="6.8" font-family='"Liberation Sans", sans-serif' text-anchor="start" font-weight="normal" >J3</text>
<text x="159.00" y="633.95" fill="#24248e" stroke="#24248e" stroke-width="0.22" font-size="6.8" font-family='"Liberation Sans", sans-serif' text-anchor="start" font-weight="normal" letter-spacing="0.1">5-146278-3</text>
<rect x="159.50" y="674.50" width="15" height="32.00" fill="none" stroke="#0000FF" stroke-width="1.1"/>
<circle cx="166.50" cy="682.50" r="2.4" fill="#0000FF"/>
<circle cx="166.50" cy="690.50" r="2.4" fill="#0000FF"/>
<rect x="164.10" y="696.00" width="5" height="5" fill="#0000FF"/>
<line x1="170.00" y1="682.50" x2="174.50" y2="682.50" stroke="#0000FF" stroke-width="1"/>
<line x1="174.50" y1="682.50" x2="191.13" y2="682.50" stroke="#000000" stroke-width="1"/>
<text x="180.80" y="681.96" fill="#333" stroke="#333" stroke-width="0.05" font-size="6.4" font-family='"Liberation Sans", sans-serif' text-anchor="start" font-weight="normal" >3</text>
<line x1="170.00" y1="690.50" x2="174.50" y2="690.50" stroke="#0000FF" stroke-width="1"/>
<line x1="174.50" y1="690.50" x2="191.13" y2="690.50" stroke="#000000" stroke-width="1"/>
<text x="180.80" y="689.81" fill="#333" stroke="#333" stroke-width="0.05" font-size="6.4" font-family='"Liberation Sans", sans-serif' text-anchor="start" font-weight="normal" >2</text>
<line x1="170.00" y1="698.50" x2="174.50" y2="698.50" stroke="#0000FF" stroke-width="1"/>
<line x1="174.50" y1="698.50" x2="191.13" y2="698.50" stroke="#000000" stroke-width="1"/>
<text x="180.80" y="697.65" fill="#333" stroke="#333" stroke-width="0.05" font-size="6.4" font-family='"Liberation Sans", sans-serif' text-anchor="start" font-weight="normal" >1</text>
<line x1="191.13" y1="682.50" x2="222.51" y2="682.50" stroke="#000080" stroke-width="1"/>
<line x1="222.50" y1="675.11" x2="222.50" y2="682.96" stroke="#800000" stroke-width="1"/>
<line x1="218.70" y1="675.50" x2="226.80" y2="675.50" stroke="#800000" stroke-width="1"/>
<text x="222.50" y="673.16" fill="#800000" stroke="#800000" stroke-width="0.22" font-size="6.8" font-family='"Liberation Sans", sans-serif' text-anchor="middle" font-weight="normal" >VDD</text>
<line x1="191.13" y1="698.50" x2="206.82" y2="698.50" stroke="#000080" stroke-width="1"/>
<line x1="206.50" y1="698.65" x2="206.50" y2="706.50" stroke="#800000" stroke-width="1"/>
<line x1="199.00" y1="706.50" x2="214.50" y2="706.50" stroke="#800000" stroke-width="1"/>
<line x1="201.50" y1="708.50" x2="212.00" y2="708.50" stroke="#800000" stroke-width="1"/>
<line x1="204.00" y1="710.50" x2="209.50" y2="710.50" stroke="#800000" stroke-width="1"/>
<rect x="206.00" y="712.00" width="1" height="1" fill="#800000"/>
<text x="206.50" y="719.85" fill="#800000" stroke="#800000" stroke-width="0.22" font-size="6.8" font-family='"Liberation Sans", sans-serif' text-anchor="middle" font-weight="normal" >GND</text>
<line x1="191.13" y1="690.50" x2="253.89" y2="690.50" stroke="#000080" stroke-width="1"/>
<line x1="253.89" y1="690.50" x2="261.74" y2="690.50" stroke="#800000" stroke-width="1"/>
<line x1="261.50" y1="686.81" x2="261.50" y2="694.81" stroke="#800000" stroke-width="1"/>
<text x="263.30" y="692.96" fill="#800000" stroke="#800000" stroke-width="0.22" font-size="6.8" font-family='"Liberation Sans", sans-serif' text-anchor="start" font-weight="normal" >D3N</text>
<line x1="245.50" y1="682.51" x2="245.50" y2="690.81" stroke="#000000" stroke-width="1"/>
<circle cx="245.50" cy="679.81" r="2.6" fill="#fff" stroke="#000" stroke-width="1"/>
<text x="242.70" y="674.92" fill="#2e2ea0" stroke="#2e2ea0" stroke-width="0.15" font-size="7.6" font-family='"Liberation Serif", serif' text-anchor="start" font-weight="normal" textLength="11.75" lengthAdjust="spacingAndGlyphs">TP4</text>
<text x="242.50" y="697.99" fill="#3a3a3a" stroke="#3a3a3a" stroke-width="0.22" font-size="6.6" font-family='"Liberation Sans", sans-serif' text-anchor="start" font-weight="normal" >5015</text>
<circle cx="245.50" cy="690.50" r="1.2" fill="#000080"/>
<circle cx="191.50" cy="690.50" r="1.5" fill="#000080"/>
<text x="159.00" y="673.41" fill="#1a1a1a" stroke="#1a1a1a" stroke-width="0.22" font-size="6.8" font-family='"Liberation Sans", sans-serif' text-anchor="start" font-weight="normal" >J4</text>
<text x="159.00" y="712.40" fill="#24248e" stroke="#24248e" stroke-width="0.22" font-size="6.8" font-family='"Liberation Sans", sans-serif' text-anchor="start" font-weight="normal" letter-spacing="0.1">5-146278-3</text>
<rect x="300.50" y="439.50" width="15" height="31.00" fill="none" stroke="#0000FF" stroke-width="1.1"/>
<circle cx="307.50" cy="447.50" r="2.4" fill="#0000FF"/>
<circle cx="307.50" cy="455.50" r="2.4" fill="#0000FF"/>
<rect x="305.10" y="461.00" width="5" height="5" fill="#0000FF"/>
<line x1="311.00" y1="447.50" x2="315.50" y2="447.50" stroke="#0000FF" stroke-width="1"/>
<line x1="315.50" y1="447.50" x2="332.34" y2="447.50" stroke="#000000" stroke-width="1"/>
<text x="321.80" y="446.62" fill="#333" stroke="#333" stroke-width="0.05" font-size="6.4" font-family='"Liberation Sans", sans-serif' text-anchor="start" font-weight="normal" >3</text>
<line x1="311.00" y1="455.50" x2="315.50" y2="455.50" stroke="#0000FF" stroke-width="1"/>
<line x1="315.50" y1="455.50" x2="332.34" y2="455.50" stroke="#000000" stroke-width="1"/>
<text x="321.80" y="454.46" fill="#333" stroke="#333" stroke-width="0.05" font-size="6.4" font-family='"Liberation Sans", sans-serif' text-anchor="start" font-weight="normal" >2</text>
<line x1="311.00" y1="463.50" x2="315.50" y2="463.50" stroke="#0000FF" stroke-width="1"/>
<line x1="315.50" y1="463.50" x2="332.34" y2="463.50" stroke="#000000" stroke-width="1"/>
<text x="321.80" y="462.30" fill="#333" stroke="#333" stroke-width="0.05" font-size="6.4" font-family='"Liberation Sans", sans-serif' text-anchor="start" font-weight="normal" >1</text>
<line x1="332.34" y1="447.50" x2="363.72" y2="447.50" stroke="#000080" stroke-width="1"/>
<line x1="363.50" y1="439.76" x2="363.50" y2="447.62" stroke="#800000" stroke-width="1"/>
<line x1="359.70" y1="439.50" x2="367.80" y2="439.50" stroke="#800000" stroke-width="1"/>
<text x="363.50" y="437.81" fill="#800000" stroke="#800000" stroke-width="0.22" font-size="6.8" font-family='"Liberation Sans", sans-serif' text-anchor="middle" font-weight="normal" >VDD</text>
<line x1="332.34" y1="463.50" x2="348.03" y2="463.50" stroke="#000080" stroke-width="1"/>
<line x1="348.50" y1="463.30" x2="348.50" y2="471.15" stroke="#800000" stroke-width="1"/>
<line x1="341.00" y1="471.50" x2="356.50" y2="471.50" stroke="#800000" stroke-width="1"/>
<line x1="343.50" y1="473.50" x2="354.00" y2="473.50" stroke="#800000" stroke-width="1"/>
<line x1="346.00" y1="475.50" x2="351.50" y2="475.50" stroke="#800000" stroke-width="1"/>
<rect x="348.00" y="477.00" width="1" height="1" fill="#800000"/>
<text x="348.50" y="484.50" fill="#800000" stroke="#800000" stroke-width="0.22" font-size="6.8" font-family='"Liberation Sans", sans-serif' text-anchor="middle" font-weight="normal" >GND</text>
<line x1="332.34" y1="455.50" x2="395.10" y2="455.50" stroke="#000080" stroke-width="1"/>
<line x1="395.10" y1="455.50" x2="402.94" y2="455.50" stroke="#800000" stroke-width="1"/>
<line x1="402.50" y1="451.46" x2="402.50" y2="459.46" stroke="#800000" stroke-width="1"/>
<text x="404.30" y="457.61" fill="#800000" stroke="#800000" stroke-width="0.22" font-size="6.8" font-family='"Liberation Sans", sans-serif' text-anchor="start" font-weight="normal" >D2P</text>
<line x1="394.50" y1="447.16" x2="394.50" y2="455.46" stroke="#000000" stroke-width="1"/>
<circle cx="394.50" cy="444.46" r="2.6" fill="#fff" stroke="#000" stroke-width="1"/>
<text x="391.70" y="439.57" fill="#2e2ea0" stroke="#2e2ea0" stroke-width="0.15" font-size="7.6" font-family='"Liberation Serif", serif' text-anchor="start" font-weight="normal" textLength="11.75" lengthAdjust="spacingAndGlyphs">TP5</text>
<text x="391.50" y="462.64" fill="#3a3a3a" stroke="#3a3a3a" stroke-width="0.22" font-size="6.6" font-family='"Liberation Sans", sans-serif' text-anchor="start" font-weight="normal" >5015</text>
<circle cx="394.50" cy="455.50" r="1.2" fill="#000080"/>
<text x="300.00" y="438.06" fill="#1a1a1a" stroke="#1a1a1a" stroke-width="0.22" font-size="6.8" font-family='"Liberation Sans", sans-serif' text-anchor="start" font-weight="normal" >J5</text>
<text x="300.00" y="477.05" fill="#24248e" stroke="#24248e" stroke-width="0.22" font-size="6.8" font-family='"Liberation Sans", sans-serif' text-anchor="start" font-weight="normal" letter-spacing="0.1">5-146278-3</text>
<rect x="300.50" y="517.50" width="15" height="32.00" fill="none" stroke="#0000FF" stroke-width="1.1"/>
<circle cx="307.50" cy="526.50" r="2.4" fill="#0000FF"/>
<circle cx="307.50" cy="533.50" r="2.4" fill="#0000FF"/>
<rect x="305.10" y="539.00" width="5" height="5" fill="#0000FF"/>
<line x1="311.00" y1="526.50" x2="315.50" y2="526.50" stroke="#0000FF" stroke-width="1"/>
<line x1="315.50" y1="526.50" x2="332.34" y2="526.50" stroke="#000000" stroke-width="1"/>
<text x="321.80" y="525.06" fill="#333" stroke="#333" stroke-width="0.05" font-size="6.4" font-family='"Liberation Sans", sans-serif' text-anchor="start" font-weight="normal" >3</text>
<line x1="311.00" y1="533.50" x2="315.50" y2="533.50" stroke="#0000FF" stroke-width="1"/>
<line x1="315.50" y1="533.50" x2="332.34" y2="533.50" stroke="#000000" stroke-width="1"/>
<text x="321.80" y="532.91" fill="#333" stroke="#333" stroke-width="0.05" font-size="6.4" font-family='"Liberation Sans", sans-serif' text-anchor="start" font-weight="normal" >2</text>
<line x1="311.00" y1="541.50" x2="315.50" y2="541.50" stroke="#0000FF" stroke-width="1"/>
<line x1="315.50" y1="541.50" x2="332.34" y2="541.50" stroke="#000000" stroke-width="1"/>
<text x="321.80" y="540.75" fill="#333" stroke="#333" stroke-width="0.05" font-size="6.4" font-family='"Liberation Sans", sans-serif' text-anchor="start" font-weight="normal" >1</text>
<line x1="332.34" y1="526.50" x2="363.72" y2="526.50" stroke="#000080" stroke-width="1"/>
<line x1="363.50" y1="518.21" x2="363.50" y2="526.06" stroke="#800000" stroke-width="1"/>
<line x1="359.70" y1="518.50" x2="367.80" y2="518.50" stroke="#800000" stroke-width="1"/>
<text x="363.50" y="516.26" fill="#800000" stroke="#800000" stroke-width="0.22" font-size="6.8" font-family='"Liberation Sans", sans-serif' text-anchor="middle" font-weight="normal" >VDD</text>
<line x1="332.34" y1="541.50" x2="348.03" y2="541.50" stroke="#000080" stroke-width="1"/>
<line x1="348.50" y1="541.75" x2="348.50" y2="549.61" stroke="#800000" stroke-width="1"/>
<line x1="341.00" y1="549.50" x2="356.50" y2="549.50" stroke="#800000" stroke-width="1"/>
<line x1="343.50" y1="551.50" x2="354.00" y2="551.50" stroke="#800000" stroke-width="1"/>
<line x1="346.00" y1="553.50" x2="351.50" y2="553.50" stroke="#800000" stroke-width="1"/>
<rect x="348.00" y="555.00" width="1" height="1" fill="#800000"/>
<text x="348.50" y="562.95" fill="#800000" stroke="#800000" stroke-width="0.22" font-size="6.8" font-family='"Liberation Sans", sans-serif' text-anchor="middle" font-weight="normal" >GND</text>
<line x1="332.34" y1="533.50" x2="379.41" y2="533.50" stroke="#000080" stroke-width="1"/>
<line x1="379.41" y1="533.50" x2="387.25" y2="533.50" stroke="#800000" stroke-width="1"/>
<line x1="387.50" y1="529.91" x2="387.50" y2="537.91" stroke="#800000" stroke-width="1"/>
<text x="389.30" y="536.06" fill="#800000" stroke="#800000" stroke-width="0.22" font-size="6.8" font-family='"Liberation Sans", sans-serif' text-anchor="start" font-weight="normal" >D2N</text>
<line x1="378.50" y1="525.61" x2="378.50" y2="533.91" stroke="#000000" stroke-width="1"/>
<circle cx="378.50" cy="522.91" r="2.6" fill="#fff" stroke="#000" stroke-width="1"/>
<text x="375.70" y="518.02" fill="#2e2ea0" stroke="#2e2ea0" stroke-width="0.15" font-size="7.6" font-family='"Liberation Serif", serif' text-anchor="start" font-weight="normal" textLength="11.75" lengthAdjust="spacingAndGlyphs">TP6</text>
<text x="375.50" y="541.09" fill="#3a3a3a" stroke="#3a3a3a" stroke-width="0.22" font-size="6.6" font-family='"Liberation Sans", sans-serif' text-anchor="start" font-weight="normal" >5015</text>
<circle cx="378.50" cy="533.50" r="1.2" fill="#000080"/>
<text x="300.00" y="516.51" fill="#1a1a1a" stroke="#1a1a1a" stroke-width="0.22" font-size="6.8" font-family='"Liberation Sans", sans-serif' text-anchor="start" font-weight="normal" >J6</text>
<text x="300.00" y="555.50" fill="#24248e" stroke="#24248e" stroke-width="0.22" font-size="6.8" font-family='"Liberation Sans", sans-serif' text-anchor="start" font-weight="normal" letter-spacing="0.1">5-146278-3</text>
<rect x="300.50" y="596.50" width="15" height="31.00" fill="none" stroke="#0000FF" stroke-width="1.1"/>
<circle cx="307.50" cy="604.50" r="2.4" fill="#0000FF"/>
<circle cx="307.50" cy="612.50" r="2.4" fill="#0000FF"/>
<rect x="305.10" y="618.00" width="5" height="5" fill="#0000FF"/>
<line x1="311.00" y1="604.50" x2="315.50" y2="604.50" stroke="#0000FF" stroke-width="1"/>
<line x1="315.50" y1="604.50" x2="332.34" y2="604.50" stroke="#000000" stroke-width="1"/>
<text x="321.80" y="603.51" fill="#333" stroke="#333" stroke-width="0.05" font-size="6.4" font-family='"Liberation Sans", sans-serif' text-anchor="start" font-weight="normal" >3</text>
<line x1="311.00" y1="612.50" x2="315.50" y2="612.50" stroke="#0000FF" stroke-width="1"/>
<line x1="315.50" y1="612.50" x2="332.34" y2="612.50" stroke="#000000" stroke-width="1"/>
<text x="321.80" y="611.36" fill="#333" stroke="#333" stroke-width="0.05" font-size="6.4" font-family='"Liberation Sans", sans-serif' text-anchor="start" font-weight="normal" >2</text>
<line x1="311.00" y1="620.50" x2="315.50" y2="620.50" stroke="#0000FF" stroke-width="1"/>
<line x1="315.50" y1="620.50" x2="332.34" y2="620.50" stroke="#000000" stroke-width="1"/>
<text x="321.80" y="619.20" fill="#333" stroke="#333" stroke-width="0.05" font-size="6.4" font-family='"Liberation Sans", sans-serif' text-anchor="start" font-weight="normal" >1</text>
<line x1="332.34" y1="604.50" x2="363.72" y2="604.50" stroke="#000080" stroke-width="1"/>
<line x1="363.50" y1="596.66" x2="363.50" y2="604.51" stroke="#800000" stroke-width="1"/>
<line x1="359.70" y1="596.50" x2="367.80" y2="596.50" stroke="#800000" stroke-width="1"/>
<text x="363.50" y="594.71" fill="#800000" stroke="#800000" stroke-width="0.22" font-size="6.8" font-family='"Liberation Sans", sans-serif' text-anchor="middle" font-weight="normal" >VDD</text>
<line x1="332.34" y1="620.50" x2="348.03" y2="620.50" stroke="#000080" stroke-width="1"/>
<line x1="348.50" y1="620.20" x2="348.50" y2="628.05" stroke="#800000" stroke-width="1"/>
<line x1="341.00" y1="628.50" x2="356.50" y2="628.50" stroke="#800000" stroke-width="1"/>
<line x1="343.50" y1="630.50" x2="354.00" y2="630.50" stroke="#800000" stroke-width="1"/>
<line x1="346.00" y1="632.50" x2="351.50" y2="632.50" stroke="#800000" stroke-width="1"/>
<rect x="348.00" y="634.00" width="1" height="1" fill="#800000"/>
<text x="348.50" y="641.40" fill="#800000" stroke="#800000" stroke-width="0.22" font-size="6.8" font-family='"Liberation Sans", sans-serif' text-anchor="middle" font-weight="normal" >GND</text>
<line x1="332.34" y1="612.50" x2="395.10" y2="612.50" stroke="#000080" stroke-width="1"/>
<line x1="395.10" y1="612.50" x2="402.94" y2="612.50" stroke="#800000" stroke-width="1"/>
<line x1="402.50" y1="608.36" x2="402.50" y2="616.36" stroke="#800000" stroke-width="1"/>
<text x="404.30" y="614.51" fill="#800000" stroke="#800000" stroke-width="0.22" font-size="6.8" font-family='"Liberation Sans", sans-serif' text-anchor="start" font-weight="normal" >D1P</text>
<line x1="378.50" y1="604.06" x2="378.50" y2="612.36" stroke="#000000" stroke-width="1"/>
<circle cx="378.50" cy="601.36" r="2.6" fill="#fff" stroke="#000" stroke-width="1"/>
<text x="375.70" y="596.47" fill="#2e2ea0" stroke="#2e2ea0" stroke-width="0.15" font-size="7.6" font-family='"Liberation Serif", serif' text-anchor="start" font-weight="normal" textLength="11.75" lengthAdjust="spacingAndGlyphs">TP7</text>
<text x="375.50" y="619.54" fill="#3a3a3a" stroke="#3a3a3a" stroke-width="0.22" font-size="6.6" font-family='"Liberation Sans", sans-serif' text-anchor="start" font-weight="normal" >5015</text>
<circle cx="378.50" cy="612.50" r="1.2" fill="#000080"/>
<circle cx="395.50" cy="612.50" r="1.5" fill="#000080"/>
<text x="300.00" y="594.96" fill="#1a1a1a" stroke="#1a1a1a" stroke-width="0.22" font-size="6.8" font-family='"Liberation Sans", sans-serif' text-anchor="start" font-weight="normal" >J7</text>
<text x="300.00" y="633.95" fill="#24248e" stroke="#24248e" stroke-width="0.22" font-size="6.8" font-family='"Liberation Sans", sans-serif' text-anchor="start" font-weight="normal" letter-spacing="0.1">5-146278-3</text>
<rect x="300.50" y="674.50" width="15" height="32.00" fill="none" stroke="#0000FF" stroke-width="1.1"/>
<circle cx="307.50" cy="682.50" r="2.4" fill="#0000FF"/>
<circle cx="307.50" cy="690.50" r="2.4" fill="#0000FF"/>
<rect x="305.10" y="696.00" width="5" height="5" fill="#0000FF"/>
<line x1="311.00" y1="682.50" x2="315.50" y2="682.50" stroke="#0000FF" stroke-width="1"/>
<line x1="315.50" y1="682.50" x2="332.34" y2="682.50" stroke="#000000" stroke-width="1"/>
<text x="321.80" y="681.96" fill="#333" stroke="#333" stroke-width="0.05" font-size="6.4" font-family='"Liberation Sans", sans-serif' text-anchor="start" font-weight="normal" >3</text>
<line x1="311.00" y1="690.50" x2="315.50" y2="690.50" stroke="#0000FF" stroke-width="1"/>
<line x1="315.50" y1="690.50" x2="332.34" y2="690.50" stroke="#000000" stroke-width="1"/>
<text x="321.80" y="689.81" fill="#333" stroke="#333" stroke-width="0.05" font-size="6.4" font-family='"Liberation Sans", sans-serif' text-anchor="start" font-weight="normal" >2</text>
<line x1="311.00" y1="698.50" x2="315.50" y2="698.50" stroke="#0000FF" stroke-width="1"/>
<line x1="315.50" y1="698.50" x2="332.34" y2="698.50" stroke="#000000" stroke-width="1"/>
<text x="321.80" y="697.65" fill="#333" stroke="#333" stroke-width="0.05" font-size="6.4" font-family='"Liberation Sans", sans-serif' text-anchor="start" font-weight="normal" >1</text>
<line x1="332.34" y1="682.50" x2="363.72" y2="682.50" stroke="#000080" stroke-width="1"/>
<line x1="363.50" y1="675.11" x2="363.50" y2="682.96" stroke="#800000" stroke-width="1"/>
<line x1="359.70" y1="675.50" x2="367.80" y2="675.50" stroke="#800000" stroke-width="1"/>
<text x="363.50" y="673.16" fill="#800000" stroke="#800000" stroke-width="0.22" font-size="6.8" font-family='"Liberation Sans", sans-serif' text-anchor="middle" font-weight="normal" >VDD</text>
<line x1="332.34" y1="698.50" x2="348.03" y2="698.50" stroke="#000080" stroke-width="1"/>
<line x1="348.50" y1="698.65" x2="348.50" y2="706.50" stroke="#800000" stroke-width="1"/>
<line x1="341.00" y1="706.50" x2="356.50" y2="706.50" stroke="#800000" stroke-width="1"/>
<line x1="343.50" y1="708.50" x2="354.00" y2="708.50" stroke="#800000" stroke-width="1"/>
<line x1="346.00" y1="710.50" x2="351.50" y2="710.50" stroke="#800000" stroke-width="1"/>
<rect x="348.00" y="712.00" width="1" height="1" fill="#800000"/>
<text x="348.50" y="719.85" fill="#800000" stroke="#800000" stroke-width="0.22" font-size="6.8" font-family='"Liberation Sans", sans-serif' text-anchor="middle" font-weight="normal" >GND</text>
<line x1="332.34" y1="690.50" x2="395.10" y2="690.50" stroke="#000080" stroke-width="1"/>
<line x1="395.10" y1="690.50" x2="402.94" y2="690.50" stroke="#800000" stroke-width="1"/>
<line x1="402.50" y1="686.81" x2="402.50" y2="694.81" stroke="#800000" stroke-width="1"/>
<text x="404.30" y="692.96" fill="#800000" stroke="#800000" stroke-width="0.22" font-size="6.8" font-family='"Liberation Sans", sans-serif' text-anchor="start" font-weight="normal" >D1N</text>
<line x1="386.50" y1="682.51" x2="386.50" y2="690.81" stroke="#000000" stroke-width="1"/>
<circle cx="386.50" cy="679.81" r="2.6" fill="#fff" stroke="#000" stroke-width="1"/>
<text x="391.50" y="680.52" fill="#2e2ea0" stroke="#2e2ea0" stroke-width="0.15" font-size="7.6" font-family='"Liberation Serif", serif' text-anchor="start" font-weight="normal" textLength="11.75" lengthAdjust="spacingAndGlyphs">TP8</text>
<text x="383.50" y="697.99" fill="#3a3a3a" stroke="#3a3a3a" stroke-width="0.22" font-size="6.6" font-family='"Liberation Sans", sans-serif' text-anchor="start" font-weight="normal" >5015</text>
<circle cx="386.50" cy="690.50" r="1.2" fill="#000080"/>
<circle cx="395.50" cy="690.50" r="1.5" fill="#000080"/>
<text x="300.00" y="673.41" fill="#1a1a1a" stroke="#1a1a1a" stroke-width="0.22" font-size="6.8" font-family='"Liberation Sans", sans-serif' text-anchor="start" font-weight="normal" >J8</text>
<text x="300.00" y="712.40" fill="#24248e" stroke="#24248e" stroke-width="0.22" font-size="6.8" font-family='"Liberation Sans", sans-serif' text-anchor="start" font-weight="normal" letter-spacing="0.1">5-146278-3</text>
<rect x="552.50" y="125.50" width="15" height="32.00" fill="none" stroke="#0000FF" stroke-width="1.1"/>
<circle cx="559.50" cy="133.50" r="2.4" fill="#0000FF"/>
<circle cx="559.50" cy="141.50" r="2.4" fill="#0000FF"/>
<rect x="557.10" y="147.00" width="5" height="5" fill="#0000FF"/>
<line x1="563.00" y1="133.50" x2="567.50" y2="133.50" stroke="#0000FF" stroke-width="1"/>
<line x1="567.50" y1="133.50" x2="583.38" y2="133.50" stroke="#000000" stroke-width="1"/>
<text x="573.80" y="132.81" fill="#333" stroke="#333" stroke-width="0.05" font-size="6.4" font-family='"Liberation Sans", sans-serif' text-anchor="start" font-weight="normal" >3</text>
<line x1="563.00" y1="141.50" x2="567.50" y2="141.50" stroke="#0000FF" stroke-width="1"/>
<line x1="567.50" y1="141.50" x2="583.38" y2="141.50" stroke="#000000" stroke-width="1"/>
<text x="573.80" y="140.66" fill="#333" stroke="#333" stroke-width="0.05" font-size="6.4" font-family='"Liberation Sans", sans-serif' text-anchor="start" font-weight="normal" >2</text>
<line x1="563.00" y1="149.50" x2="567.50" y2="149.50" stroke="#0000FF" stroke-width="1"/>
<line x1="567.50" y1="149.50" x2="583.38" y2="149.50" stroke="#000000" stroke-width="1"/>
<text x="573.80" y="148.50" fill="#333" stroke="#333" stroke-width="0.05" font-size="6.4" font-family='"Liberation Sans", sans-serif' text-anchor="start" font-weight="normal" >1</text>
<line x1="583.38" y1="133.50" x2="614.76" y2="133.50" stroke="#000080" stroke-width="1"/>
<line x1="614.50" y1="125.97" x2="614.50" y2="133.81" stroke="#800000" stroke-width="1"/>
<line x1="610.70" y1="125.50" x2="618.80" y2="125.50" stroke="#800000" stroke-width="1"/>
<text x="614.50" y="124.01" fill="#800000" stroke="#800000" stroke-width="0.22" font-size="6.8" font-family='"Liberation Sans", sans-serif' text-anchor="middle" font-weight="normal" >VDD</text>
<line x1="583.38" y1="149.50" x2="599.07" y2="149.50" stroke="#000080" stroke-width="1"/>
<line x1="599.50" y1="149.50" x2="599.50" y2="157.35" stroke="#800000" stroke-width="1"/>
<line x1="592.00" y1="157.50" x2="607.50" y2="157.50" stroke="#800000" stroke-width="1"/>
<line x1="594.50" y1="159.50" x2="605.00" y2="159.50" stroke="#800000" stroke-width="1"/>
<line x1="597.00" y1="161.50" x2="602.50" y2="161.50" stroke="#800000" stroke-width="1"/>
<rect x="599.00" y="163.00" width="1" height="1" fill="#800000"/>
<text x="599.50" y="170.70" fill="#800000" stroke="#800000" stroke-width="0.22" font-size="6.8" font-family='"Liberation Sans", sans-serif' text-anchor="middle" font-weight="normal" >GND</text>
<line x1="583.38" y1="141.50" x2="638.29" y2="141.50" stroke="#000080" stroke-width="1"/>
<line x1="638.29" y1="141.50" x2="646.14" y2="141.50" stroke="#800000" stroke-width="1"/>
<line x1="646.50" y1="137.66" x2="646.50" y2="145.66" stroke="#800000" stroke-width="1"/>
<text x="648.30" y="143.81" fill="#800000" stroke="#800000" stroke-width="0.22" font-size="6.8" font-family='"Liberation Sans", sans-serif' text-anchor="start" font-weight="normal" >/OE</text>
<line x1="637.50" y1="133.36" x2="637.50" y2="141.66" stroke="#000000" stroke-width="1"/>
<circle cx="637.50" cy="130.66" r="2.6" fill="#fff" stroke="#000" stroke-width="1"/>
<text x="634.70" y="125.77" fill="#2e2ea0" stroke="#2e2ea0" stroke-width="0.15" font-size="7.6" font-family='"Liberation Serif", serif' text-anchor="start" font-weight="normal" textLength="15.28" lengthAdjust="spacingAndGlyphs">TP31</text>
<text x="634.50" y="148.84" fill="#3a3a3a" stroke="#3a3a3a" stroke-width="0.22" font-size="6.6" font-family='"Liberation Sans", sans-serif' text-anchor="start" font-weight="normal" >5015</text>
<circle cx="637.50" cy="141.50" r="1.2" fill="#000080"/>
<text x="552.00" y="124.26" fill="#1a1a1a" stroke="#1a1a1a" stroke-width="0.22" font-size="6.8" font-family='"Liberation Sans", sans-serif' text-anchor="start" font-weight="normal" >J31</text>
<text x="552.00" y="163.25" fill="#24248e" stroke="#24248e" stroke-width="0.22" font-size="6.8" font-family='"Liberation Sans", sans-serif' text-anchor="start" font-weight="normal" letter-spacing="0.1">5-146278-3</text>
<rect x="552.50" y="180.50" width="15" height="31.00" fill="none" stroke="#0000FF" stroke-width="1.1"/>
<circle cx="559.50" cy="188.50" r="2.4" fill="#0000FF"/>
<circle cx="559.50" cy="196.50" r="2.4" fill="#0000FF"/>
<rect x="557.10" y="202.00" width="5" height="5" fill="#0000FF"/>
<line x1="563.00" y1="188.50" x2="567.50" y2="188.50" stroke="#0000FF" stroke-width="1"/>
<line x1="567.50" y1="188.50" x2="583.38" y2="188.50" stroke="#000000" stroke-width="1"/>
<text x="573.80" y="187.73" fill="#333" stroke="#333" stroke-width="0.05" font-size="6.4" font-family='"Liberation Sans", sans-serif' text-anchor="start" font-weight="normal" >3</text>
<line x1="563.00" y1="196.50" x2="567.50" y2="196.50" stroke="#0000FF" stroke-width="1"/>
<line x1="567.50" y1="196.50" x2="583.38" y2="196.50" stroke="#000000" stroke-width="1"/>
<text x="573.80" y="195.57" fill="#333" stroke="#333" stroke-width="0.05" font-size="6.4" font-family='"Liberation Sans", sans-serif' text-anchor="start" font-weight="normal" >2</text>
<line x1="563.00" y1="204.50" x2="567.50" y2="204.50" stroke="#0000FF" stroke-width="1"/>
<line x1="567.50" y1="204.50" x2="583.38" y2="204.50" stroke="#000000" stroke-width="1"/>
<text x="573.80" y="203.42" fill="#333" stroke="#333" stroke-width="0.05" font-size="6.4" font-family='"Liberation Sans", sans-serif' text-anchor="start" font-weight="normal" >1</text>
<line x1="583.38" y1="188.50" x2="614.76" y2="188.50" stroke="#000080" stroke-width="1"/>
<line x1="614.50" y1="180.88" x2="614.50" y2="188.73" stroke="#800000" stroke-width="1"/>
<line x1="610.70" y1="180.50" x2="618.80" y2="180.50" stroke="#800000" stroke-width="1"/>
<text x="614.50" y="178.93" fill="#800000" stroke="#800000" stroke-width="0.22" font-size="6.8" font-family='"Liberation Sans", sans-serif' text-anchor="middle" font-weight="normal" >VDD</text>
<line x1="583.38" y1="204.50" x2="599.07" y2="204.50" stroke="#000080" stroke-width="1"/>
<line x1="599.50" y1="204.42" x2="599.50" y2="212.27" stroke="#800000" stroke-width="1"/>
<line x1="592.00" y1="212.50" x2="607.50" y2="212.50" stroke="#800000" stroke-width="1"/>
<line x1="594.50" y1="214.50" x2="605.00" y2="214.50" stroke="#800000" stroke-width="1"/>
<line x1="597.00" y1="216.50" x2="602.50" y2="216.50" stroke="#800000" stroke-width="1"/>
<rect x="599.00" y="218.00" width="1" height="1" fill="#800000"/>
<text x="599.50" y="225.62" fill="#800000" stroke="#800000" stroke-width="0.22" font-size="6.8" font-family='"Liberation Sans", sans-serif' text-anchor="middle" font-weight="normal" >GND</text>
<line x1="583.38" y1="196.50" x2="638.29" y2="196.50" stroke="#000080" stroke-width="1"/>
<line x1="638.29" y1="196.50" x2="646.14" y2="196.50" stroke="#800000" stroke-width="1"/>
<line x1="646.50" y1="192.57" x2="646.50" y2="200.57" stroke="#800000" stroke-width="1"/>
<text x="648.30" y="198.72" fill="#800000" stroke="#800000" stroke-width="0.22" font-size="6.8" font-family='"Liberation Sans", sans-serif' text-anchor="start" font-weight="normal" >SEL</text>
<line x1="637.50" y1="188.27" x2="637.50" y2="196.57" stroke="#000000" stroke-width="1"/>
<circle cx="637.50" cy="185.57" r="2.6" fill="#fff" stroke="#000" stroke-width="1"/>
<text x="634.70" y="180.68" fill="#2e2ea0" stroke="#2e2ea0" stroke-width="0.15" font-size="7.6" font-family='"Liberation Serif", serif' text-anchor="start" font-weight="normal" textLength="15.28" lengthAdjust="spacingAndGlyphs">TP32</text>
<text x="634.50" y="203.75" fill="#3a3a3a" stroke="#3a3a3a" stroke-width="0.22" font-size="6.6" font-family='"Liberation Sans", sans-serif' text-anchor="start" font-weight="normal" >5015</text>
<circle cx="637.50" cy="196.50" r="1.2" fill="#000080"/>
<text x="552.00" y="179.18" fill="#1a1a1a" stroke="#1a1a1a" stroke-width="0.22" font-size="6.8" font-family='"Liberation Sans", sans-serif' text-anchor="start" font-weight="normal" >J32</text>
<text x="552.00" y="218.17" fill="#24248e" stroke="#24248e" stroke-width="0.22" font-size="6.8" font-family='"Liberation Sans", sans-serif' text-anchor="start" font-weight="normal" letter-spacing="0.1">5-146278-3</text>
<rect x="881.50" y="31.50" width="15" height="31.00" fill="none" stroke="#0000FF" stroke-width="1.1"/>
<circle cx="888.50" cy="39.50" r="2.4" fill="#0000FF"/>
<circle cx="888.50" cy="47.50" r="2.4" fill="#0000FF"/>
<rect x="886.10" y="53.00" width="5" height="5" fill="#0000FF"/>
<line x1="892.00" y1="39.50" x2="896.50" y2="39.50" stroke="#0000FF" stroke-width="1"/>
<line x1="896.50" y1="39.50" x2="912.87" y2="39.50" stroke="#000000" stroke-width="1"/>
<text x="902.80" y="38.68" fill="#333" stroke="#333" stroke-width="0.05" font-size="6.4" font-family='"Liberation Sans", sans-serif' text-anchor="start" font-weight="normal" >3</text>
<line x1="892.00" y1="47.50" x2="896.50" y2="47.50" stroke="#0000FF" stroke-width="1"/>
<line x1="896.50" y1="47.50" x2="912.87" y2="47.50" stroke="#000000" stroke-width="1"/>
<text x="902.80" y="46.52" fill="#333" stroke="#333" stroke-width="0.05" font-size="6.4" font-family='"Liberation Sans", sans-serif' text-anchor="start" font-weight="normal" >2</text>
<line x1="892.00" y1="55.50" x2="896.50" y2="55.50" stroke="#0000FF" stroke-width="1"/>
<line x1="896.50" y1="55.50" x2="912.87" y2="55.50" stroke="#000000" stroke-width="1"/>
<text x="902.80" y="54.37" fill="#333" stroke="#333" stroke-width="0.05" font-size="6.4" font-family='"Liberation Sans", sans-serif' text-anchor="start" font-weight="normal" >1</text>
<line x1="912.87" y1="39.50" x2="944.25" y2="39.50" stroke="#000080" stroke-width="1"/>
<line x1="944.50" y1="31.83" x2="944.50" y2="39.68" stroke="#800000" stroke-width="1"/>
<line x1="940.70" y1="31.50" x2="948.80" y2="31.50" stroke="#800000" stroke-width="1"/>
<text x="944.50" y="29.87" fill="#800000" stroke="#800000" stroke-width="0.22" font-size="6.8" font-family='"Liberation Sans", sans-serif' text-anchor="middle" font-weight="normal" >VDD</text>
<line x1="912.87" y1="55.50" x2="928.56" y2="55.50" stroke="#000080" stroke-width="1"/>
<line x1="928.50" y1="55.37" x2="928.50" y2="63.22" stroke="#800000" stroke-width="1"/>
<line x1="921.00" y1="63.50" x2="936.50" y2="63.50" stroke="#800000" stroke-width="1"/>
<line x1="923.50" y1="65.50" x2="934.00" y2="65.50" stroke="#800000" stroke-width="1"/>
<line x1="926.00" y1="67.50" x2="931.50" y2="67.50" stroke="#800000" stroke-width="1"/>
<rect x="928.00" y="69.00" width="1" height="1" fill="#800000"/>
<text x="928.50" y="76.56" fill="#800000" stroke="#800000" stroke-width="0.22" font-size="6.8" font-family='"Liberation Sans", sans-serif' text-anchor="middle" font-weight="normal" >GND</text>
<line x1="912.87" y1="47.50" x2="967.78" y2="47.50" stroke="#000080" stroke-width="1"/>
<line x1="967.78" y1="47.50" x2="975.63" y2="47.50" stroke="#800000" stroke-width="1"/>
<line x1="975.50" y1="43.52" x2="975.50" y2="51.52" stroke="#800000" stroke-width="1"/>
<text x="977.30" y="49.67" fill="#800000" stroke="#800000" stroke-width="0.22" font-size="6.8" font-family='"Liberation Sans", sans-serif' text-anchor="start" font-weight="normal" >DA1P</text>
<line x1="966.50" y1="39.22" x2="966.50" y2="47.52" stroke="#000000" stroke-width="1"/>
<circle cx="966.50" cy="36.52" r="2.6" fill="#fff" stroke="#000" stroke-width="1"/>
<text x="963.70" y="31.63" fill="#2e2ea0" stroke="#2e2ea0" stroke-width="0.15" font-size="7.6" font-family='"Liberation Serif", serif' text-anchor="start" font-weight="normal" textLength="15.28" lengthAdjust="spacingAndGlyphs">TP13</text>
<text x="963.50" y="54.70" fill="#3a3a3a" stroke="#3a3a3a" stroke-width="0.22" font-size="6.6" font-family='"Liberation Sans", sans-serif' text-anchor="start" font-weight="normal" >5015</text>
<circle cx="966.50" cy="47.50" r="1.2" fill="#000080"/>
<text x="881.00" y="30.12" fill="#1a1a1a" stroke="#1a1a1a" stroke-width="0.22" font-size="6.8" font-family='"Liberation Sans", sans-serif' text-anchor="start" font-weight="normal" >J13</text>
<text x="881.00" y="69.11" fill="#24248e" stroke="#24248e" stroke-width="0.22" font-size="6.8" font-family='"Liberation Sans", sans-serif' text-anchor="start" font-weight="normal" letter-spacing="0.1">5-146278-3</text>
<rect x="881.50" y="109.50" width="15" height="32.00" fill="none" stroke="#0000FF" stroke-width="1.1"/>
<circle cx="888.50" cy="118.50" r="2.4" fill="#0000FF"/>
<circle cx="888.50" cy="125.50" r="2.4" fill="#0000FF"/>
<rect x="886.10" y="131.00" width="5" height="5" fill="#0000FF"/>
<line x1="892.00" y1="118.50" x2="896.50" y2="118.50" stroke="#0000FF" stroke-width="1"/>
<line x1="896.50" y1="118.50" x2="912.87" y2="118.50" stroke="#000000" stroke-width="1"/>
<text x="902.80" y="117.12" fill="#333" stroke="#333" stroke-width="0.05" font-size="6.4" font-family='"Liberation Sans", sans-serif' text-anchor="start" font-weight="normal" >3</text>
<line x1="892.00" y1="125.50" x2="896.50" y2="125.50" stroke="#0000FF" stroke-width="1"/>
<line x1="896.50" y1="125.50" x2="912.87" y2="125.50" stroke="#000000" stroke-width="1"/>
<text x="902.80" y="124.97" fill="#333" stroke="#333" stroke-width="0.05" font-size="6.4" font-family='"Liberation Sans", sans-serif' text-anchor="start" font-weight="normal" >2</text>
<line x1="892.00" y1="133.50" x2="896.50" y2="133.50" stroke="#0000FF" stroke-width="1"/>
<line x1="896.50" y1="133.50" x2="912.87" y2="133.50" stroke="#000000" stroke-width="1"/>
<text x="902.80" y="132.81" fill="#333" stroke="#333" stroke-width="0.05" font-size="6.4" font-family='"Liberation Sans", sans-serif' text-anchor="start" font-weight="normal" >1</text>
<line x1="912.87" y1="118.50" x2="944.25" y2="118.50" stroke="#000080" stroke-width="1"/>
<line x1="944.50" y1="110.28" x2="944.50" y2="118.12" stroke="#800000" stroke-width="1"/>
<line x1="940.70" y1="110.50" x2="948.80" y2="110.50" stroke="#800000" stroke-width="1"/>
<text x="944.50" y="108.32" fill="#800000" stroke="#800000" stroke-width="0.22" font-size="6.8" font-family='"Liberation Sans", sans-serif' text-anchor="middle" font-weight="normal" >VDD</text>
<line x1="912.87" y1="133.50" x2="928.56" y2="133.50" stroke="#000080" stroke-width="1"/>
<line x1="928.50" y1="133.81" x2="928.50" y2="141.66" stroke="#800000" stroke-width="1"/>
<line x1="921.00" y1="141.50" x2="936.50" y2="141.50" stroke="#800000" stroke-width="1"/>
<line x1="923.50" y1="143.50" x2="934.00" y2="143.50" stroke="#800000" stroke-width="1"/>
<line x1="926.00" y1="145.50" x2="931.50" y2="145.50" stroke="#800000" stroke-width="1"/>
<rect x="928.00" y="147.00" width="1" height="1" fill="#800000"/>
<text x="928.50" y="155.01" fill="#800000" stroke="#800000" stroke-width="0.22" font-size="6.8" font-family='"Liberation Sans", sans-serif' text-anchor="middle" font-weight="normal" >GND</text>
<line x1="912.87" y1="125.50" x2="975.63" y2="125.50" stroke="#000080" stroke-width="1"/>
<line x1="975.63" y1="125.50" x2="983.47" y2="125.50" stroke="#800000" stroke-width="1"/>
<line x1="983.50" y1="121.97" x2="983.50" y2="129.97" stroke="#800000" stroke-width="1"/>
<text x="985.30" y="128.12" fill="#800000" stroke="#800000" stroke-width="0.22" font-size="6.8" font-family='"Liberation Sans", sans-serif' text-anchor="start" font-weight="normal" >DA1N</text>
<line x1="966.50" y1="117.67" x2="966.50" y2="125.97" stroke="#000000" stroke-width="1"/>
<circle cx="966.50" cy="114.97" r="2.6" fill="#fff" stroke="#000" stroke-width="1"/>
<text x="963.70" y="110.08" fill="#2e2ea0" stroke="#2e2ea0" stroke-width="0.15" font-size="7.6" font-family='"Liberation Serif", serif' text-anchor="start" font-weight="normal" textLength="15.28" lengthAdjust="spacingAndGlyphs">TP14</text>
<text x="963.50" y="133.15" fill="#3a3a3a" stroke="#3a3a3a" stroke-width="0.22" font-size="6.6" font-family='"Liberation Sans", sans-serif' text-anchor="start" font-weight="normal" >5015</text>
<circle cx="966.50" cy="125.50" r="1.2" fill="#000080"/>
<text x="881.00" y="108.57" fill="#1a1a1a" stroke="#1a1a1a" stroke-width="0.22" font-size="6.8" font-family='"Liberation Sans", sans-serif' text-anchor="start" font-weight="normal" >J14</text>
<text x="881.00" y="147.56" fill="#24248e" stroke="#24248e" stroke-width="0.22" font-size="6.8" font-family='"Liberation Sans", sans-serif' text-anchor="start" font-weight="normal" letter-spacing="0.1">5-146278-3</text>
<rect x="881.50" y="188.50" width="15" height="31.00" fill="none" stroke="#0000FF" stroke-width="1.1"/>
<circle cx="888.50" cy="196.50" r="2.4" fill="#0000FF"/>
<circle cx="888.50" cy="204.50" r="2.4" fill="#0000FF"/>
<rect x="886.10" y="210.00" width="5" height="5" fill="#0000FF"/>
<line x1="892.00" y1="196.50" x2="896.50" y2="196.50" stroke="#0000FF" stroke-width="1"/>
<line x1="896.50" y1="196.50" x2="912.87" y2="196.50" stroke="#000000" stroke-width="1"/>
<text x="902.80" y="195.57" fill="#333" stroke="#333" stroke-width="0.05" font-size="6.4" font-family='"Liberation Sans", sans-serif' text-anchor="start" font-weight="normal" >3</text>
<line x1="892.00" y1="204.50" x2="896.50" y2="204.50" stroke="#0000FF" stroke-width="1"/>
<line x1="896.50" y1="204.50" x2="912.87" y2="204.50" stroke="#000000" stroke-width="1"/>
<text x="902.80" y="203.42" fill="#333" stroke="#333" stroke-width="0.05" font-size="6.4" font-family='"Liberation Sans", sans-serif' text-anchor="start" font-weight="normal" >2</text>
<line x1="892.00" y1="212.50" x2="896.50" y2="212.50" stroke="#0000FF" stroke-width="1"/>
<line x1="896.50" y1="212.50" x2="912.87" y2="212.50" stroke="#000000" stroke-width="1"/>
<text x="902.80" y="211.27" fill="#333" stroke="#333" stroke-width="0.05" font-size="6.4" font-family='"Liberation Sans", sans-serif' text-anchor="start" font-weight="normal" >1</text>
<line x1="912.87" y1="196.50" x2="944.25" y2="196.50" stroke="#000080" stroke-width="1"/>
<line x1="944.50" y1="188.72" x2="944.50" y2="196.57" stroke="#800000" stroke-width="1"/>
<line x1="940.70" y1="188.50" x2="948.80" y2="188.50" stroke="#800000" stroke-width="1"/>
<text x="944.50" y="186.77" fill="#800000" stroke="#800000" stroke-width="0.22" font-size="6.8" font-family='"Liberation Sans", sans-serif' text-anchor="middle" font-weight="normal" >VDD</text>
<line x1="912.87" y1="212.50" x2="928.56" y2="212.50" stroke="#000080" stroke-width="1"/>
<line x1="928.50" y1="212.27" x2="928.50" y2="220.12" stroke="#800000" stroke-width="1"/>
<line x1="921.00" y1="220.50" x2="936.50" y2="220.50" stroke="#800000" stroke-width="1"/>
<line x1="923.50" y1="222.50" x2="934.00" y2="222.50" stroke="#800000" stroke-width="1"/>
<line x1="926.00" y1="224.50" x2="931.50" y2="224.50" stroke="#800000" stroke-width="1"/>
<rect x="928.00" y="226.00" width="1" height="1" fill="#800000"/>
<text x="928.50" y="233.46" fill="#800000" stroke="#800000" stroke-width="0.22" font-size="6.8" font-family='"Liberation Sans", sans-serif' text-anchor="middle" font-weight="normal" >GND</text>
<line x1="912.87" y1="204.50" x2="975.63" y2="204.50" stroke="#000080" stroke-width="1"/>
<line x1="975.63" y1="204.50" x2="983.47" y2="204.50" stroke="#800000" stroke-width="1"/>
<line x1="983.50" y1="200.42" x2="983.50" y2="208.42" stroke="#800000" stroke-width="1"/>
<text x="985.30" y="206.57" fill="#800000" stroke="#800000" stroke-width="0.22" font-size="6.8" font-family='"Liberation Sans", sans-serif' text-anchor="start" font-weight="normal" >DA2P</text>
<line x1="966.50" y1="196.12" x2="966.50" y2="204.42" stroke="#000000" stroke-width="1"/>
<circle cx="966.50" cy="193.42" r="2.6" fill="#fff" stroke="#000" stroke-width="1"/>
<text x="963.70" y="188.53" fill="#2e2ea0" stroke="#2e2ea0" stroke-width="0.15" font-size="7.6" font-family='"Liberation Serif", serif' text-anchor="start" font-weight="normal" textLength="15.28" lengthAdjust="spacingAndGlyphs">TP15</text>
<text x="963.50" y="211.60" fill="#3a3a3a" stroke="#3a3a3a" stroke-width="0.22" font-size="6.6" font-family='"Liberation Sans", sans-serif' text-anchor="start" font-weight="normal" >5015</text>
<circle cx="966.50" cy="204.50" r="1.2" fill="#000080"/>
<circle cx="912.50" cy="204.50" r="1.5" fill="#000080"/>
<text x="881.00" y="187.02" fill="#1a1a1a" stroke="#1a1a1a" stroke-width="0.22" font-size="6.8" font-family='"Liberation Sans", sans-serif' text-anchor="start" font-weight="normal" >J15</text>
<text x="881.00" y="226.01" fill="#24248e" stroke="#24248e" stroke-width="0.22" font-size="6.8" font-family='"Liberation Sans", sans-serif' text-anchor="start" font-weight="normal" letter-spacing="0.1">5-146278-3</text>
<rect x="881.50" y="266.50" width="15" height="32.00" fill="none" stroke="#0000FF" stroke-width="1.1"/>
<circle cx="888.50" cy="275.50" r="2.4" fill="#0000FF"/>
<circle cx="888.50" cy="282.50" r="2.4" fill="#0000FF"/>
<rect x="886.10" y="288.00" width="5" height="5" fill="#0000FF"/>
<line x1="892.00" y1="275.50" x2="896.50" y2="275.50" stroke="#0000FF" stroke-width="1"/>
<line x1="896.50" y1="275.50" x2="912.87" y2="275.50" stroke="#000000" stroke-width="1"/>
<text x="902.80" y="274.02" fill="#333" stroke="#333" stroke-width="0.05" font-size="6.4" font-family='"Liberation Sans", sans-serif' text-anchor="start" font-weight="normal" >3</text>
<line x1="892.00" y1="282.50" x2="896.50" y2="282.50" stroke="#0000FF" stroke-width="1"/>
<line x1="896.50" y1="282.50" x2="912.87" y2="282.50" stroke="#000000" stroke-width="1"/>
<text x="902.80" y="281.87" fill="#333" stroke="#333" stroke-width="0.05" font-size="6.4" font-family='"Liberation Sans", sans-serif' text-anchor="start" font-weight="normal" >2</text>
<line x1="892.00" y1="290.50" x2="896.50" y2="290.50" stroke="#0000FF" stroke-width="1"/>
<line x1="896.50" y1="290.50" x2="912.87" y2="290.50" stroke="#000000" stroke-width="1"/>
<text x="902.80" y="289.72" fill="#333" stroke="#333" stroke-width="0.05" font-size="6.4" font-family='"Liberation Sans", sans-serif' text-anchor="start" font-weight="normal" >1</text>
<line x1="912.87" y1="275.50" x2="944.25" y2="275.50" stroke="#000080" stroke-width="1"/>
<line x1="944.50" y1="267.17" x2="944.50" y2="275.02" stroke="#800000" stroke-width="1"/>
<line x1="940.70" y1="267.50" x2="948.80" y2="267.50" stroke="#800000" stroke-width="1"/>
<text x="944.50" y="265.22" fill="#800000" stroke="#800000" stroke-width="0.22" font-size="6.8" font-family='"Liberation Sans", sans-serif' text-anchor="middle" font-weight="normal" >VDD</text>
<line x1="912.87" y1="290.50" x2="928.56" y2="290.50" stroke="#000080" stroke-width="1"/>
<line x1="928.50" y1="290.72" x2="928.50" y2="298.57" stroke="#800000" stroke-width="1"/>
<line x1="921.00" y1="298.50" x2="936.50" y2="298.50" stroke="#800000" stroke-width="1"/>
<line x1="923.50" y1="300.50" x2="934.00" y2="300.50" stroke="#800000" stroke-width="1"/>
<line x1="926.00" y1="302.50" x2="931.50" y2="302.50" stroke="#800000" stroke-width="1"/>
<rect x="928.00" y="304.00" width="1" height="1" fill="#800000"/>
<text x="928.50" y="311.91" fill="#800000" stroke="#800000" stroke-width="0.22" font-size="6.8" font-family='"Liberation Sans", sans-serif' text-anchor="middle" font-weight="normal" >GND</text>
<line x1="912.87" y1="282.50" x2="975.63" y2="282.50" stroke="#000080" stroke-width="1"/>
<line x1="975.63" y1="282.50" x2="983.47" y2="282.50" stroke="#800000" stroke-width="1"/>
<line x1="983.50" y1="278.87" x2="983.50" y2="286.87" stroke="#800000" stroke-width="1"/>
<text x="985.30" y="285.02" fill="#800000" stroke="#800000" stroke-width="0.22" font-size="6.8" font-family='"Liberation Sans", sans-serif' text-anchor="start" font-weight="normal" >DA2N</text>
<line x1="966.50" y1="274.57" x2="966.50" y2="282.87" stroke="#000000" stroke-width="1"/>
<circle cx="966.50" cy="271.87" r="2.6" fill="#fff" stroke="#000" stroke-width="1"/>
<text x="963.70" y="266.98" fill="#2e2ea0" stroke="#2e2ea0" stroke-width="0.15" font-size="7.6" font-family='"Liberation Serif", serif' text-anchor="start" font-weight="normal" textLength="15.28" lengthAdjust="spacingAndGlyphs">TP16</text>
<text x="963.50" y="290.05" fill="#3a3a3a" stroke="#3a3a3a" stroke-width="0.22" font-size="6.6" font-family='"Liberation Sans", sans-serif' text-anchor="start" font-weight="normal" >5015</text>
<circle cx="966.50" cy="282.50" r="1.2" fill="#000080"/>
<circle cx="912.50" cy="282.50" r="1.5" fill="#000080"/>
<text x="881.00" y="265.47" fill="#1a1a1a" stroke="#1a1a1a" stroke-width="0.22" font-size="6.8" font-family='"Liberation Sans", sans-serif' text-anchor="start" font-weight="normal" >J16</text>
<text x="881.00" y="304.46" fill="#24248e" stroke="#24248e" stroke-width="0.22" font-size="6.8" font-family='"Liberation Sans", sans-serif' text-anchor="start" font-weight="normal" letter-spacing="0.1">5-146278-3</text>
<rect x="1022.50" y="31.50" width="15" height="31.00" fill="none" stroke="#0000FF" stroke-width="1.1"/>
<circle cx="1029.50" cy="39.50" r="2.4" fill="#0000FF"/>
<circle cx="1029.50" cy="47.50" r="2.4" fill="#0000FF"/>
<rect x="1027.10" y="53.00" width="5" height="5" fill="#0000FF"/>
<line x1="1033.00" y1="39.50" x2="1037.50" y2="39.50" stroke="#0000FF" stroke-width="1"/>
<line x1="1037.50" y1="39.50" x2="1054.08" y2="39.50" stroke="#000000" stroke-width="1"/>
<text x="1043.80" y="38.68" fill="#333" stroke="#333" stroke-width="0.05" font-size="6.4" font-family='"Liberation Sans", sans-serif' text-anchor="start" font-weight="normal" >3</text>
<line x1="1033.00" y1="47.50" x2="1037.50" y2="47.50" stroke="#0000FF" stroke-width="1"/>
<line x1="1037.50" y1="47.50" x2="1054.08" y2="47.50" stroke="#000000" stroke-width="1"/>
<text x="1043.80" y="46.52" fill="#333" stroke="#333" stroke-width="0.05" font-size="6.4" font-family='"Liberation Sans", sans-serif' text-anchor="start" font-weight="normal" >2</text>
<line x1="1033.00" y1="55.50" x2="1037.50" y2="55.50" stroke="#0000FF" stroke-width="1"/>
<line x1="1037.50" y1="55.50" x2="1054.08" y2="55.50" stroke="#000000" stroke-width="1"/>
<text x="1043.80" y="54.37" fill="#333" stroke="#333" stroke-width="0.05" font-size="6.4" font-family='"Liberation Sans", sans-serif' text-anchor="start" font-weight="normal" >1</text>
<line x1="1054.08" y1="39.50" x2="1085.46" y2="39.50" stroke="#000080" stroke-width="1"/>
<line x1="1085.50" y1="31.83" x2="1085.50" y2="39.68" stroke="#800000" stroke-width="1"/>
<line x1="1081.70" y1="31.50" x2="1089.80" y2="31.50" stroke="#800000" stroke-width="1"/>
<text x="1085.50" y="29.87" fill="#800000" stroke="#800000" stroke-width="0.22" font-size="6.8" font-family='"Liberation Sans", sans-serif' text-anchor="middle" font-weight="normal" >VDD</text>
<line x1="1054.08" y1="55.50" x2="1069.77" y2="55.50" stroke="#000080" stroke-width="1"/>
<line x1="1069.50" y1="55.37" x2="1069.50" y2="63.22" stroke="#800000" stroke-width="1"/>
<line x1="1062.00" y1="63.50" x2="1077.50" y2="63.50" stroke="#800000" stroke-width="1"/>
<line x1="1064.50" y1="65.50" x2="1075.00" y2="65.50" stroke="#800000" stroke-width="1"/>
<line x1="1067.00" y1="67.50" x2="1072.50" y2="67.50" stroke="#800000" stroke-width="1"/>
<rect x="1069.00" y="69.00" width="1" height="1" fill="#800000"/>
<text x="1069.50" y="76.56" fill="#800000" stroke="#800000" stroke-width="0.22" font-size="6.8" font-family='"Liberation Sans", sans-serif' text-anchor="middle" font-weight="normal" >GND</text>
<line x1="1054.08" y1="47.50" x2="1108.99" y2="47.50" stroke="#000080" stroke-width="1"/>
<line x1="1108.99" y1="47.50" x2="1116.84" y2="47.50" stroke="#800000" stroke-width="1"/>
<line x1="1116.50" y1="43.52" x2="1116.50" y2="51.52" stroke="#800000" stroke-width="1"/>
<text x="1118.30" y="49.67" fill="#800000" stroke="#800000" stroke-width="0.22" font-size="6.8" font-family='"Liberation Sans", sans-serif' text-anchor="start" font-weight="normal" >DA3P</text>
<line x1="1100.50" y1="39.22" x2="1100.50" y2="47.52" stroke="#000000" stroke-width="1"/>
<circle cx="1100.50" cy="36.52" r="2.6" fill="#fff" stroke="#000" stroke-width="1"/>
<text x="1097.70" y="31.63" fill="#2e2ea0" stroke="#2e2ea0" stroke-width="0.15" font-size="7.6" font-family='"Liberation Serif", serif' text-anchor="start" font-weight="normal" textLength="15.28" lengthAdjust="spacingAndGlyphs">TP17</text>
<text x="1097.50" y="54.70" fill="#3a3a3a" stroke="#3a3a3a" stroke-width="0.22" font-size="6.6" font-family='"Liberation Sans", sans-serif' text-anchor="start" font-weight="normal" >5015</text>
<circle cx="1100.50" cy="47.50" r="1.2" fill="#000080"/>
<text x="1022.00" y="30.12" fill="#1a1a1a" stroke="#1a1a1a" stroke-width="0.22" font-size="6.8" font-family='"Liberation Sans", sans-serif' text-anchor="start" font-weight="normal" >J17</text>
<text x="1022.00" y="69.11" fill="#24248e" stroke="#24248e" stroke-width="0.22" font-size="6.8" font-family='"Liberation Sans", sans-serif' text-anchor="start" font-weight="normal" letter-spacing="0.1">5-146278-3</text>
<rect x="1022.50" y="109.50" width="15" height="32.00" fill="none" stroke="#0000FF" stroke-width="1.1"/>
<circle cx="1029.50" cy="118.50" r="2.4" fill="#0000FF"/>
<circle cx="1029.50" cy="125.50" r="2.4" fill="#0000FF"/>
<rect x="1027.10" y="131.00" width="5" height="5" fill="#0000FF"/>
<line x1="1033.00" y1="118.50" x2="1037.50" y2="118.50" stroke="#0000FF" stroke-width="1"/>
<line x1="1037.50" y1="118.50" x2="1054.08" y2="118.50" stroke="#000000" stroke-width="1"/>
<text x="1043.80" y="117.12" fill="#333" stroke="#333" stroke-width="0.05" font-size="6.4" font-family='"Liberation Sans", sans-serif' text-anchor="start" font-weight="normal" >3</text>
<line x1="1033.00" y1="125.50" x2="1037.50" y2="125.50" stroke="#0000FF" stroke-width="1"/>
<line x1="1037.50" y1="125.50" x2="1054.08" y2="125.50" stroke="#000000" stroke-width="1"/>
<text x="1043.80" y="124.97" fill="#333" stroke="#333" stroke-width="0.05" font-size="6.4" font-family='"Liberation Sans", sans-serif' text-anchor="start" font-weight="normal" >2</text>
<line x1="1033.00" y1="133.50" x2="1037.50" y2="133.50" stroke="#0000FF" stroke-width="1"/>
<line x1="1037.50" y1="133.50" x2="1054.08" y2="133.50" stroke="#000000" stroke-width="1"/>
<text x="1043.80" y="132.81" fill="#333" stroke="#333" stroke-width="0.05" font-size="6.4" font-family='"Liberation Sans", sans-serif' text-anchor="start" font-weight="normal" >1</text>
<line x1="1054.08" y1="118.50" x2="1085.46" y2="118.50" stroke="#000080" stroke-width="1"/>
<line x1="1085.50" y1="110.28" x2="1085.50" y2="118.12" stroke="#800000" stroke-width="1"/>
<line x1="1081.70" y1="110.50" x2="1089.80" y2="110.50" stroke="#800000" stroke-width="1"/>
<text x="1085.50" y="108.32" fill="#800000" stroke="#800000" stroke-width="0.22" font-size="6.8" font-family='"Liberation Sans", sans-serif' text-anchor="middle" font-weight="normal" >VDD</text>
<line x1="1054.08" y1="133.50" x2="1069.77" y2="133.50" stroke="#000080" stroke-width="1"/>
<line x1="1069.50" y1="133.81" x2="1069.50" y2="141.66" stroke="#800000" stroke-width="1"/>
<line x1="1062.00" y1="141.50" x2="1077.50" y2="141.50" stroke="#800000" stroke-width="1"/>
<line x1="1064.50" y1="143.50" x2="1075.00" y2="143.50" stroke="#800000" stroke-width="1"/>
<line x1="1067.00" y1="145.50" x2="1072.50" y2="145.50" stroke="#800000" stroke-width="1"/>
<rect x="1069.00" y="147.00" width="1" height="1" fill="#800000"/>
<text x="1069.50" y="155.01" fill="#800000" stroke="#800000" stroke-width="0.22" font-size="6.8" font-family='"Liberation Sans", sans-serif' text-anchor="middle" font-weight="normal" >GND</text>
<line x1="1054.08" y1="125.50" x2="1116.84" y2="125.50" stroke="#000080" stroke-width="1"/>
<line x1="1116.84" y1="125.50" x2="1124.68" y2="125.50" stroke="#800000" stroke-width="1"/>
<line x1="1124.50" y1="121.97" x2="1124.50" y2="129.97" stroke="#800000" stroke-width="1"/>
<text x="1126.30" y="128.12" fill="#800000" stroke="#800000" stroke-width="0.22" font-size="6.8" font-family='"Liberation Sans", sans-serif' text-anchor="start" font-weight="normal" >DA3N</text>
<line x1="1108.50" y1="117.67" x2="1108.50" y2="125.97" stroke="#000000" stroke-width="1"/>
<circle cx="1108.50" cy="114.97" r="2.6" fill="#fff" stroke="#000" stroke-width="1"/>
<text x="1105.70" y="110.08" fill="#2e2ea0" stroke="#2e2ea0" stroke-width="0.15" font-size="7.6" font-family='"Liberation Serif", serif' text-anchor="start" font-weight="normal" textLength="15.28" lengthAdjust="spacingAndGlyphs">TP18</text>
<text x="1105.50" y="133.15" fill="#3a3a3a" stroke="#3a3a3a" stroke-width="0.22" font-size="6.6" font-family='"Liberation Sans", sans-serif' text-anchor="start" font-weight="normal" >5015</text>
<circle cx="1108.50" cy="125.50" r="1.2" fill="#000080"/>
<text x="1022.00" y="108.57" fill="#1a1a1a" stroke="#1a1a1a" stroke-width="0.22" font-size="6.8" font-family='"Liberation Sans", sans-serif' text-anchor="start" font-weight="normal" >J18</text>
<text x="1022.00" y="147.56" fill="#24248e" stroke="#24248e" stroke-width="0.22" font-size="6.8" font-family='"Liberation Sans", sans-serif' text-anchor="start" font-weight="normal" letter-spacing="0.1">5-146278-3</text>
<rect x="1022.50" y="188.50" width="15" height="31.00" fill="none" stroke="#0000FF" stroke-width="1.1"/>
<circle cx="1029.50" cy="196.50" r="2.4" fill="#0000FF"/>
<circle cx="1029.50" cy="204.50" r="2.4" fill="#0000FF"/>
<rect x="1027.10" y="210.00" width="5" height="5" fill="#0000FF"/>
<line x1="1033.00" y1="196.50" x2="1037.50" y2="196.50" stroke="#0000FF" stroke-width="1"/>
<line x1="1037.50" y1="196.50" x2="1054.08" y2="196.50" stroke="#000000" stroke-width="1"/>
<text x="1043.80" y="195.57" fill="#333" stroke="#333" stroke-width="0.05" font-size="6.4" font-family='"Liberation Sans", sans-serif' text-anchor="start" font-weight="normal" >3</text>
<line x1="1033.00" y1="204.50" x2="1037.50" y2="204.50" stroke="#0000FF" stroke-width="1"/>
<line x1="1037.50" y1="204.50" x2="1054.08" y2="204.50" stroke="#000000" stroke-width="1"/>
<text x="1043.80" y="203.42" fill="#333" stroke="#333" stroke-width="0.05" font-size="6.4" font-family='"Liberation Sans", sans-serif' text-anchor="start" font-weight="normal" >2</text>
<line x1="1033.00" y1="212.50" x2="1037.50" y2="212.50" stroke="#0000FF" stroke-width="1"/>
<line x1="1037.50" y1="212.50" x2="1054.08" y2="212.50" stroke="#000000" stroke-width="1"/>
<text x="1043.80" y="211.27" fill="#333" stroke="#333" stroke-width="0.05" font-size="6.4" font-family='"Liberation Sans", sans-serif' text-anchor="start" font-weight="normal" >1</text>
<line x1="1054.08" y1="196.50" x2="1085.46" y2="196.50" stroke="#000080" stroke-width="1"/>
<line x1="1085.50" y1="188.72" x2="1085.50" y2="196.57" stroke="#800000" stroke-width="1"/>
<line x1="1081.70" y1="188.50" x2="1089.80" y2="188.50" stroke="#800000" stroke-width="1"/>
<text x="1085.50" y="186.77" fill="#800000" stroke="#800000" stroke-width="0.22" font-size="6.8" font-family='"Liberation Sans", sans-serif' text-anchor="middle" font-weight="normal" >VDD</text>
<line x1="1054.08" y1="212.50" x2="1069.77" y2="212.50" stroke="#000080" stroke-width="1"/>
<line x1="1069.50" y1="212.27" x2="1069.50" y2="220.12" stroke="#800000" stroke-width="1"/>
<line x1="1062.00" y1="220.50" x2="1077.50" y2="220.50" stroke="#800000" stroke-width="1"/>
<line x1="1064.50" y1="222.50" x2="1075.00" y2="222.50" stroke="#800000" stroke-width="1"/>
<line x1="1067.00" y1="224.50" x2="1072.50" y2="224.50" stroke="#800000" stroke-width="1"/>
<rect x="1069.00" y="226.00" width="1" height="1" fill="#800000"/>
<text x="1069.50" y="233.46" fill="#800000" stroke="#800000" stroke-width="0.22" font-size="6.8" font-family='"Liberation Sans", sans-serif' text-anchor="middle" font-weight="normal" >GND</text>
<line x1="1054.08" y1="204.50" x2="1116.84" y2="204.50" stroke="#000080" stroke-width="1"/>
<line x1="1116.84" y1="204.50" x2="1124.68" y2="204.50" stroke="#800000" stroke-width="1"/>
<line x1="1124.50" y1="200.42" x2="1124.50" y2="208.42" stroke="#800000" stroke-width="1"/>
<text x="1126.30" y="206.57" fill="#800000" stroke="#800000" stroke-width="0.22" font-size="6.8" font-family='"Liberation Sans", sans-serif' text-anchor="start" font-weight="normal" >DA4P</text>
<line x1="1108.50" y1="196.12" x2="1108.50" y2="204.42" stroke="#000000" stroke-width="1"/>
<circle cx="1108.50" cy="193.42" r="2.6" fill="#fff" stroke="#000" stroke-width="1"/>
<text x="1105.70" y="188.53" fill="#2e2ea0" stroke="#2e2ea0" stroke-width="0.15" font-size="7.6" font-family='"Liberation Serif", serif' text-anchor="start" font-weight="normal" textLength="15.28" lengthAdjust="spacingAndGlyphs">TP19</text>
<text x="1105.50" y="211.60" fill="#3a3a3a" stroke="#3a3a3a" stroke-width="0.22" font-size="6.6" font-family='"Liberation Sans", sans-serif' text-anchor="start" font-weight="normal" >5015</text>
<circle cx="1108.50" cy="204.50" r="1.2" fill="#000080"/>
<text x="1022.00" y="187.02" fill="#1a1a1a" stroke="#1a1a1a" stroke-width="0.22" font-size="6.8" font-family='"Liberation Sans", sans-serif' text-anchor="start" font-weight="normal" >J19</text>
<text x="1022.00" y="226.01" fill="#24248e" stroke="#24248e" stroke-width="0.22" font-size="6.8" font-family='"Liberation Sans", sans-serif' text-anchor="start" font-weight="normal" letter-spacing="0.1">5-146278-3</text>
<rect x="1022.50" y="266.50" width="15" height="32.00" fill="none" stroke="#0000FF" stroke-width="1.1"/>
<circle cx="1029.50" cy="275.50" r="2.4" fill="#0000FF"/>
<circle cx="1029.50" cy="282.50" r="2.4" fill="#0000FF"/>
<rect x="1027.10" y="288.00" width="5" height="5" fill="#0000FF"/>
<line x1="1033.00" y1="275.50" x2="1037.50" y2="275.50" stroke="#0000FF" stroke-width="1"/>
<line x1="1037.50" y1="275.50" x2="1054.08" y2="275.50" stroke="#000000" stroke-width="1"/>
<text x="1043.80" y="274.02" fill="#333" stroke="#333" stroke-width="0.05" font-size="6.4" font-family='"Liberation Sans", sans-serif' text-anchor="start" font-weight="normal" >3</text>
<line x1="1033.00" y1="282.50" x2="1037.50" y2="282.50" stroke="#0000FF" stroke-width="1"/>
<line x1="1037.50" y1="282.50" x2="1054.08" y2="282.50" stroke="#000000" stroke-width="1"/>
<text x="1043.80" y="281.87" fill="#333" stroke="#333" stroke-width="0.05" font-size="6.4" font-family='"Liberation Sans", sans-serif' text-anchor="start" font-weight="normal" >2</text>
<line x1="1033.00" y1="290.50" x2="1037.50" y2="290.50" stroke="#0000FF" stroke-width="1"/>
<line x1="1037.50" y1="290.50" x2="1054.08" y2="290.50" stroke="#000000" stroke-width="1"/>
<text x="1043.80" y="289.72" fill="#333" stroke="#333" stroke-width="0.05" font-size="6.4" font-family='"Liberation Sans", sans-serif' text-anchor="start" font-weight="normal" >1</text>
<line x1="1054.08" y1="275.50" x2="1085.46" y2="275.50" stroke="#000080" stroke-width="1"/>
<line x1="1085.50" y1="267.17" x2="1085.50" y2="275.02" stroke="#800000" stroke-width="1"/>
<line x1="1081.70" y1="267.50" x2="1089.80" y2="267.50" stroke="#800000" stroke-width="1"/>
<text x="1085.50" y="265.22" fill="#800000" stroke="#800000" stroke-width="0.22" font-size="6.8" font-family='"Liberation Sans", sans-serif' text-anchor="middle" font-weight="normal" >VDD</text>
<line x1="1054.08" y1="290.50" x2="1069.77" y2="290.50" stroke="#000080" stroke-width="1"/>
<line x1="1069.50" y1="290.72" x2="1069.50" y2="298.57" stroke="#800000" stroke-width="1"/>
<line x1="1062.00" y1="298.50" x2="1077.50" y2="298.50" stroke="#800000" stroke-width="1"/>
<line x1="1064.50" y1="300.50" x2="1075.00" y2="300.50" stroke="#800000" stroke-width="1"/>
<line x1="1067.00" y1="302.50" x2="1072.50" y2="302.50" stroke="#800000" stroke-width="1"/>
<rect x="1069.00" y="304.00" width="1" height="1" fill="#800000"/>
<text x="1069.50" y="311.91" fill="#800000" stroke="#800000" stroke-width="0.22" font-size="6.8" font-family='"Liberation Sans", sans-serif' text-anchor="middle" font-weight="normal" >GND</text>
<line x1="1054.08" y1="282.50" x2="1124.68" y2="282.50" stroke="#000080" stroke-width="1"/>
<line x1="1124.68" y1="282.50" x2="1132.53" y2="282.50" stroke="#800000" stroke-width="1"/>
<line x1="1132.50" y1="278.87" x2="1132.50" y2="286.87" stroke="#800000" stroke-width="1"/>
<text x="1134.30" y="285.02" fill="#800000" stroke="#800000" stroke-width="0.22" font-size="6.8" font-family='"Liberation Sans", sans-serif' text-anchor="start" font-weight="normal" >DA4N</text>
<line x1="1115.50" y1="274.57" x2="1115.50" y2="282.87" stroke="#000000" stroke-width="1"/>
<circle cx="1115.50" cy="271.87" r="2.6" fill="#fff" stroke="#000" stroke-width="1"/>
<text x="1112.70" y="266.98" fill="#2e2ea0" stroke="#2e2ea0" stroke-width="0.15" font-size="7.6" font-family='"Liberation Serif", serif' text-anchor="start" font-weight="normal" textLength="15.28" lengthAdjust="spacingAndGlyphs">TP20</text>
<text x="1112.50" y="290.05" fill="#3a3a3a" stroke="#3a3a3a" stroke-width="0.22" font-size="6.6" font-family='"Liberation Sans", sans-serif' text-anchor="start" font-weight="normal" >5015</text>
<circle cx="1115.50" cy="282.50" r="1.2" fill="#000080"/>
<text x="1022.00" y="265.47" fill="#1a1a1a" stroke="#1a1a1a" stroke-width="0.22" font-size="6.8" font-family='"Liberation Sans", sans-serif' text-anchor="start" font-weight="normal" >J20</text>
<text x="1022.00" y="304.46" fill="#24248e" stroke="#24248e" stroke-width="0.22" font-size="6.8" font-family='"Liberation Sans", sans-serif' text-anchor="start" font-weight="normal" letter-spacing="0.1">5-146278-3</text>
<rect x="873.50" y="455.50" width="15" height="31.00" fill="none" stroke="#0000FF" stroke-width="1.1"/>
<circle cx="880.50" cy="463.50" r="2.4" fill="#0000FF"/>
<circle cx="880.50" cy="471.50" r="2.4" fill="#0000FF"/>
<rect x="878.10" y="476.00" width="5" height="5" fill="#0000FF"/>
<line x1="884.00" y1="463.50" x2="888.50" y2="463.50" stroke="#0000FF" stroke-width="1"/>
<line x1="888.50" y1="463.50" x2="905.02" y2="463.50" stroke="#000000" stroke-width="1"/>
<text x="894.80" y="462.30" fill="#333" stroke="#333" stroke-width="0.05" font-size="6.4" font-family='"Liberation Sans", sans-serif' text-anchor="start" font-weight="normal" >3</text>
<line x1="884.00" y1="471.50" x2="888.50" y2="471.50" stroke="#0000FF" stroke-width="1"/>
<line x1="888.50" y1="471.50" x2="905.02" y2="471.50" stroke="#000000" stroke-width="1"/>
<text x="894.80" y="470.15" fill="#333" stroke="#333" stroke-width="0.05" font-size="6.4" font-family='"Liberation Sans", sans-serif' text-anchor="start" font-weight="normal" >2</text>
<line x1="884.00" y1="478.50" x2="888.50" y2="478.50" stroke="#0000FF" stroke-width="1"/>
<line x1="888.50" y1="478.50" x2="905.02" y2="478.50" stroke="#000000" stroke-width="1"/>
<text x="894.80" y="478.00" fill="#333" stroke="#333" stroke-width="0.05" font-size="6.4" font-family='"Liberation Sans", sans-serif' text-anchor="start" font-weight="normal" >1</text>
<line x1="905.02" y1="463.50" x2="936.40" y2="463.50" stroke="#000080" stroke-width="1"/>
<line x1="936.50" y1="455.45" x2="936.50" y2="463.30" stroke="#800000" stroke-width="1"/>
<line x1="932.70" y1="455.50" x2="940.80" y2="455.50" stroke="#800000" stroke-width="1"/>
<text x="936.50" y="453.50" fill="#800000" stroke="#800000" stroke-width="0.22" font-size="6.8" font-family='"Liberation Sans", sans-serif' text-anchor="middle" font-weight="normal" >VDD</text>
<line x1="905.02" y1="478.50" x2="920.71" y2="478.50" stroke="#000080" stroke-width="1"/>
<line x1="920.50" y1="479.00" x2="920.50" y2="486.85" stroke="#800000" stroke-width="1"/>
<line x1="913.00" y1="486.50" x2="928.50" y2="486.50" stroke="#800000" stroke-width="1"/>
<line x1="915.50" y1="488.50" x2="926.00" y2="488.50" stroke="#800000" stroke-width="1"/>
<line x1="918.00" y1="490.50" x2="923.50" y2="490.50" stroke="#800000" stroke-width="1"/>
<rect x="920.00" y="492.00" width="1" height="1" fill="#800000"/>
<text x="920.50" y="500.19" fill="#800000" stroke="#800000" stroke-width="0.22" font-size="6.8" font-family='"Liberation Sans", sans-serif' text-anchor="middle" font-weight="normal" >GND</text>
<line x1="905.02" y1="471.50" x2="967.78" y2="471.50" stroke="#000080" stroke-width="1"/>
<line x1="967.78" y1="471.50" x2="975.63" y2="471.50" stroke="#800000" stroke-width="1"/>
<line x1="975.50" y1="467.15" x2="975.50" y2="475.15" stroke="#800000" stroke-width="1"/>
<text x="977.30" y="473.30" fill="#800000" stroke="#800000" stroke-width="0.22" font-size="6.8" font-family='"Liberation Sans", sans-serif' text-anchor="start" font-weight="normal" >DB4P</text>
<line x1="959.50" y1="462.85" x2="959.50" y2="471.15" stroke="#000000" stroke-width="1"/>
<circle cx="959.50" cy="460.15" r="2.6" fill="#fff" stroke="#000" stroke-width="1"/>
<text x="956.70" y="455.26" fill="#2e2ea0" stroke="#2e2ea0" stroke-width="0.15" font-size="7.6" font-family='"Liberation Serif", serif' text-anchor="start" font-weight="normal" textLength="15.28" lengthAdjust="spacingAndGlyphs">TP30</text>
<text x="956.50" y="478.33" fill="#3a3a3a" stroke="#3a3a3a" stroke-width="0.22" font-size="6.6" font-family='"Liberation Sans", sans-serif' text-anchor="start" font-weight="normal" >5015</text>
<circle cx="959.50" cy="471.50" r="1.2" fill="#000080"/>
<text x="873.00" y="453.75" fill="#1a1a1a" stroke="#1a1a1a" stroke-width="0.22" font-size="6.8" font-family='"Liberation Sans", sans-serif' text-anchor="start" font-weight="normal" >J30</text>
<text x="873.00" y="492.74" fill="#24248e" stroke="#24248e" stroke-width="0.22" font-size="6.8" font-family='"Liberation Sans", sans-serif' text-anchor="start" font-weight="normal" letter-spacing="0.1">5-146278-3</text>
<rect x="873.50" y="533.50" width="15" height="31.00" fill="none" stroke="#0000FF" stroke-width="1.1"/>
<circle cx="880.50" cy="541.50" r="2.4" fill="#0000FF"/>
<circle cx="880.50" cy="549.50" r="2.4" fill="#0000FF"/>
<rect x="878.10" y="555.00" width="5" height="5" fill="#0000FF"/>
<line x1="884.00" y1="541.50" x2="888.50" y2="541.50" stroke="#0000FF" stroke-width="1"/>
<line x1="888.50" y1="541.50" x2="905.02" y2="541.50" stroke="#000000" stroke-width="1"/>
<text x="894.80" y="540.75" fill="#333" stroke="#333" stroke-width="0.05" font-size="6.4" font-family='"Liberation Sans", sans-serif' text-anchor="start" font-weight="normal" >3</text>
<line x1="884.00" y1="549.50" x2="888.50" y2="549.50" stroke="#0000FF" stroke-width="1"/>
<line x1="888.50" y1="549.50" x2="905.02" y2="549.50" stroke="#000000" stroke-width="1"/>
<text x="894.80" y="548.60" fill="#333" stroke="#333" stroke-width="0.05" font-size="6.4" font-family='"Liberation Sans", sans-serif' text-anchor="start" font-weight="normal" >2</text>
<line x1="884.00" y1="557.50" x2="888.50" y2="557.50" stroke="#0000FF" stroke-width="1"/>
<line x1="888.50" y1="557.50" x2="905.02" y2="557.50" stroke="#000000" stroke-width="1"/>
<text x="894.80" y="556.44" fill="#333" stroke="#333" stroke-width="0.05" font-size="6.4" font-family='"Liberation Sans", sans-serif' text-anchor="start" font-weight="normal" >1</text>
<line x1="905.02" y1="541.50" x2="936.40" y2="541.50" stroke="#000080" stroke-width="1"/>
<line x1="936.50" y1="533.90" x2="936.50" y2="541.75" stroke="#800000" stroke-width="1"/>
<line x1="932.70" y1="533.50" x2="940.80" y2="533.50" stroke="#800000" stroke-width="1"/>
<text x="936.50" y="531.95" fill="#800000" stroke="#800000" stroke-width="0.22" font-size="6.8" font-family='"Liberation Sans", sans-serif' text-anchor="middle" font-weight="normal" >VDD</text>
<line x1="905.02" y1="557.50" x2="920.71" y2="557.50" stroke="#000080" stroke-width="1"/>
<line x1="920.50" y1="557.44" x2="920.50" y2="565.29" stroke="#800000" stroke-width="1"/>
<line x1="913.00" y1="565.50" x2="928.50" y2="565.50" stroke="#800000" stroke-width="1"/>
<line x1="915.50" y1="567.50" x2="926.00" y2="567.50" stroke="#800000" stroke-width="1"/>
<line x1="918.00" y1="569.50" x2="923.50" y2="569.50" stroke="#800000" stroke-width="1"/>
<rect x="920.00" y="571.00" width="1" height="1" fill="#800000"/>
<text x="920.50" y="578.64" fill="#800000" stroke="#800000" stroke-width="0.22" font-size="6.8" font-family='"Liberation Sans", sans-serif' text-anchor="middle" font-weight="normal" >GND</text>
<line x1="905.02" y1="549.50" x2="967.78" y2="549.50" stroke="#000080" stroke-width="1"/>
<line x1="967.78" y1="549.50" x2="975.63" y2="549.50" stroke="#800000" stroke-width="1"/>
<line x1="975.50" y1="545.60" x2="975.50" y2="553.60" stroke="#800000" stroke-width="1"/>
<text x="977.30" y="551.75" fill="#800000" stroke="#800000" stroke-width="0.22" font-size="6.8" font-family='"Liberation Sans", sans-serif' text-anchor="start" font-weight="normal" >DB4N</text>
<line x1="959.50" y1="541.30" x2="959.50" y2="549.60" stroke="#000000" stroke-width="1"/>
<circle cx="959.50" cy="538.60" r="2.6" fill="#fff" stroke="#000" stroke-width="1"/>
<text x="956.70" y="533.71" fill="#2e2ea0" stroke="#2e2ea0" stroke-width="0.15" font-size="7.6" font-family='"Liberation Serif", serif' text-anchor="start" font-weight="normal" textLength="15.28" lengthAdjust="spacingAndGlyphs">TP29</text>
<text x="956.50" y="556.78" fill="#3a3a3a" stroke="#3a3a3a" stroke-width="0.22" font-size="6.6" font-family='"Liberation Sans", sans-serif' text-anchor="start" font-weight="normal" >5015</text>
<circle cx="959.50" cy="549.50" r="1.2" fill="#000080"/>
<text x="873.00" y="532.20" fill="#1a1a1a" stroke="#1a1a1a" stroke-width="0.22" font-size="6.8" font-family='"Liberation Sans", sans-serif' text-anchor="start" font-weight="normal" >J29</text>
<text x="873.00" y="571.19" fill="#24248e" stroke="#24248e" stroke-width="0.22" font-size="6.8" font-family='"Liberation Sans", sans-serif' text-anchor="start" font-weight="normal" letter-spacing="0.1">5-146278-3</text>
<rect x="873.50" y="612.50" width="15" height="31.00" fill="none" stroke="#0000FF" stroke-width="1.1"/>
<circle cx="880.50" cy="620.50" r="2.4" fill="#0000FF"/>
<circle cx="880.50" cy="628.50" r="2.4" fill="#0000FF"/>
<rect x="878.10" y="633.00" width="5" height="5" fill="#0000FF"/>
<line x1="884.00" y1="620.50" x2="888.50" y2="620.50" stroke="#0000FF" stroke-width="1"/>
<line x1="888.50" y1="620.50" x2="905.02" y2="620.50" stroke="#000000" stroke-width="1"/>
<text x="894.80" y="619.20" fill="#333" stroke="#333" stroke-width="0.05" font-size="6.4" font-family='"Liberation Sans", sans-serif' text-anchor="start" font-weight="normal" >3</text>
<line x1="884.00" y1="628.50" x2="888.50" y2="628.50" stroke="#0000FF" stroke-width="1"/>
<line x1="888.50" y1="628.50" x2="905.02" y2="628.50" stroke="#000000" stroke-width="1"/>
<text x="894.80" y="627.05" fill="#333" stroke="#333" stroke-width="0.05" font-size="6.4" font-family='"Liberation Sans", sans-serif' text-anchor="start" font-weight="normal" >2</text>
<line x1="884.00" y1="635.50" x2="888.50" y2="635.50" stroke="#0000FF" stroke-width="1"/>
<line x1="888.50" y1="635.50" x2="905.02" y2="635.50" stroke="#000000" stroke-width="1"/>
<text x="894.80" y="634.89" fill="#333" stroke="#333" stroke-width="0.05" font-size="6.4" font-family='"Liberation Sans", sans-serif' text-anchor="start" font-weight="normal" >1</text>
<line x1="905.02" y1="620.50" x2="936.40" y2="620.50" stroke="#000080" stroke-width="1"/>
<line x1="936.50" y1="612.35" x2="936.50" y2="620.20" stroke="#800000" stroke-width="1"/>
<line x1="932.70" y1="612.50" x2="940.80" y2="612.50" stroke="#800000" stroke-width="1"/>
<text x="936.50" y="610.40" fill="#800000" stroke="#800000" stroke-width="0.22" font-size="6.8" font-family='"Liberation Sans", sans-serif' text-anchor="middle" font-weight="normal" >VDD</text>
<line x1="905.02" y1="635.50" x2="920.71" y2="635.50" stroke="#000080" stroke-width="1"/>
<line x1="920.50" y1="635.89" x2="920.50" y2="643.75" stroke="#800000" stroke-width="1"/>
<line x1="913.00" y1="643.50" x2="928.50" y2="643.50" stroke="#800000" stroke-width="1"/>
<line x1="915.50" y1="645.50" x2="926.00" y2="645.50" stroke="#800000" stroke-width="1"/>
<line x1="918.00" y1="647.50" x2="923.50" y2="647.50" stroke="#800000" stroke-width="1"/>
<rect x="920.00" y="649.00" width="1" height="1" fill="#800000"/>
<text x="920.50" y="657.09" fill="#800000" stroke="#800000" stroke-width="0.22" font-size="6.8" font-family='"Liberation Sans", sans-serif' text-anchor="middle" font-weight="normal" >GND</text>
<line x1="905.02" y1="628.50" x2="967.78" y2="628.50" stroke="#000080" stroke-width="1"/>
<line x1="967.78" y1="628.50" x2="975.63" y2="628.50" stroke="#800000" stroke-width="1"/>
<line x1="975.50" y1="624.05" x2="975.50" y2="632.05" stroke="#800000" stroke-width="1"/>
<text x="977.30" y="630.20" fill="#800000" stroke="#800000" stroke-width="0.22" font-size="6.8" font-family='"Liberation Sans", sans-serif' text-anchor="start" font-weight="normal" >DB3P</text>
<line x1="959.50" y1="619.75" x2="959.50" y2="628.05" stroke="#000000" stroke-width="1"/>
<circle cx="959.50" cy="617.05" r="2.6" fill="#fff" stroke="#000" stroke-width="1"/>
<text x="956.70" y="612.16" fill="#2e2ea0" stroke="#2e2ea0" stroke-width="0.15" font-size="7.6" font-family='"Liberation Serif", serif' text-anchor="start" font-weight="normal" textLength="15.28" lengthAdjust="spacingAndGlyphs">TP28</text>
<text x="956.50" y="635.23" fill="#3a3a3a" stroke="#3a3a3a" stroke-width="0.22" font-size="6.6" font-family='"Liberation Sans", sans-serif' text-anchor="start" font-weight="normal" >5015</text>
<circle cx="959.50" cy="628.50" r="1.2" fill="#000080"/>
<circle cx="905.50" cy="628.50" r="1.5" fill="#000080"/>
<text x="873.00" y="610.65" fill="#1a1a1a" stroke="#1a1a1a" stroke-width="0.22" font-size="6.8" font-family='"Liberation Sans", sans-serif' text-anchor="start" font-weight="normal" >J28</text>
<text x="873.00" y="649.64" fill="#24248e" stroke="#24248e" stroke-width="0.22" font-size="6.8" font-family='"Liberation Sans", sans-serif' text-anchor="start" font-weight="normal" letter-spacing="0.1">5-146278-3</text>
<rect x="873.50" y="690.50" width="15" height="31.00" fill="none" stroke="#0000FF" stroke-width="1.1"/>
<circle cx="880.50" cy="698.50" r="2.4" fill="#0000FF"/>
<circle cx="880.50" cy="706.50" r="2.4" fill="#0000FF"/>
<rect x="878.10" y="712.00" width="5" height="5" fill="#0000FF"/>
<line x1="884.00" y1="698.50" x2="888.50" y2="698.50" stroke="#0000FF" stroke-width="1"/>
<line x1="888.50" y1="698.50" x2="905.02" y2="698.50" stroke="#000000" stroke-width="1"/>
<text x="894.80" y="697.65" fill="#333" stroke="#333" stroke-width="0.05" font-size="6.4" font-family='"Liberation Sans", sans-serif' text-anchor="start" font-weight="normal" >3</text>
<line x1="884.00" y1="706.50" x2="888.50" y2="706.50" stroke="#0000FF" stroke-width="1"/>
<line x1="888.50" y1="706.50" x2="905.02" y2="706.50" stroke="#000000" stroke-width="1"/>
<text x="894.80" y="705.50" fill="#333" stroke="#333" stroke-width="0.05" font-size="6.4" font-family='"Liberation Sans", sans-serif' text-anchor="start" font-weight="normal" >2</text>
<line x1="884.00" y1="714.50" x2="888.50" y2="714.50" stroke="#0000FF" stroke-width="1"/>
<line x1="888.50" y1="714.50" x2="905.02" y2="714.50" stroke="#000000" stroke-width="1"/>
<text x="894.80" y="713.34" fill="#333" stroke="#333" stroke-width="0.05" font-size="6.4" font-family='"Liberation Sans", sans-serif' text-anchor="start" font-weight="normal" >1</text>
<line x1="905.02" y1="698.50" x2="936.40" y2="698.50" stroke="#000080" stroke-width="1"/>
<line x1="936.50" y1="690.80" x2="936.50" y2="698.65" stroke="#800000" stroke-width="1"/>
<line x1="932.70" y1="690.50" x2="940.80" y2="690.50" stroke="#800000" stroke-width="1"/>
<text x="936.50" y="688.85" fill="#800000" stroke="#800000" stroke-width="0.22" font-size="6.8" font-family='"Liberation Sans", sans-serif' text-anchor="middle" font-weight="normal" >VDD</text>
<line x1="905.02" y1="714.50" x2="920.71" y2="714.50" stroke="#000080" stroke-width="1"/>
<line x1="920.50" y1="714.34" x2="920.50" y2="722.19" stroke="#800000" stroke-width="1"/>
<line x1="913.00" y1="722.50" x2="928.50" y2="722.50" stroke="#800000" stroke-width="1"/>
<line x1="915.50" y1="724.50" x2="926.00" y2="724.50" stroke="#800000" stroke-width="1"/>
<line x1="918.00" y1="726.50" x2="923.50" y2="726.50" stroke="#800000" stroke-width="1"/>
<rect x="920.00" y="728.00" width="1" height="1" fill="#800000"/>
<text x="920.50" y="735.54" fill="#800000" stroke="#800000" stroke-width="0.22" font-size="6.8" font-family='"Liberation Sans", sans-serif' text-anchor="middle" font-weight="normal" >GND</text>
<line x1="905.02" y1="706.50" x2="959.94" y2="706.50" stroke="#000080" stroke-width="1"/>
<line x1="959.94" y1="706.50" x2="967.78" y2="706.50" stroke="#800000" stroke-width="1"/>
<line x1="967.50" y1="702.50" x2="967.50" y2="710.50" stroke="#800000" stroke-width="1"/>
<text x="969.30" y="708.65" fill="#800000" stroke="#800000" stroke-width="0.22" font-size="6.8" font-family='"Liberation Sans", sans-serif' text-anchor="start" font-weight="normal" >DB3N</text>
<line x1="951.50" y1="698.20" x2="951.50" y2="706.50" stroke="#000000" stroke-width="1"/>
<circle cx="951.50" cy="695.50" r="2.6" fill="#fff" stroke="#000" stroke-width="1"/>
<text x="948.70" y="690.61" fill="#2e2ea0" stroke="#2e2ea0" stroke-width="0.15" font-size="7.6" font-family='"Liberation Serif", serif' text-anchor="start" font-weight="normal" textLength="15.28" lengthAdjust="spacingAndGlyphs">TP27</text>
<text x="948.50" y="713.68" fill="#3a3a3a" stroke="#3a3a3a" stroke-width="0.22" font-size="6.6" font-family='"Liberation Sans", sans-serif' text-anchor="start" font-weight="normal" >5015</text>
<circle cx="951.50" cy="706.50" r="1.2" fill="#000080"/>
<circle cx="905.50" cy="706.50" r="1.5" fill="#000080"/>
<text x="873.00" y="689.10" fill="#1a1a1a" stroke="#1a1a1a" stroke-width="0.22" font-size="6.8" font-family='"Liberation Sans", sans-serif' text-anchor="start" font-weight="normal" >J27</text>
<text x="873.00" y="728.09" fill="#24248e" stroke="#24248e" stroke-width="0.22" font-size="6.8" font-family='"Liberation Sans", sans-serif' text-anchor="start" font-weight="normal" letter-spacing="0.1">5-146278-3</text>
<rect x="1014.50" y="455.50" width="15" height="31.00" fill="none" stroke="#0000FF" stroke-width="1.1"/>
<circle cx="1021.50" cy="463.50" r="2.4" fill="#0000FF"/>
<circle cx="1021.50" cy="471.50" r="2.4" fill="#0000FF"/>
<rect x="1019.10" y="476.00" width="5" height="5" fill="#0000FF"/>
<line x1="1025.00" y1="463.50" x2="1029.50" y2="463.50" stroke="#0000FF" stroke-width="1"/>
<line x1="1029.50" y1="463.50" x2="1046.23" y2="463.50" stroke="#000000" stroke-width="1"/>
<text x="1035.80" y="462.30" fill="#333" stroke="#333" stroke-width="0.05" font-size="6.4" font-family='"Liberation Sans", sans-serif' text-anchor="start" font-weight="normal" >3</text>
<line x1="1025.00" y1="471.50" x2="1029.50" y2="471.50" stroke="#0000FF" stroke-width="1"/>
<line x1="1029.50" y1="471.50" x2="1046.23" y2="471.50" stroke="#000000" stroke-width="1"/>
<text x="1035.80" y="470.15" fill="#333" stroke="#333" stroke-width="0.05" font-size="6.4" font-family='"Liberation Sans", sans-serif' text-anchor="start" font-weight="normal" >2</text>
<line x1="1025.00" y1="478.50" x2="1029.50" y2="478.50" stroke="#0000FF" stroke-width="1"/>
<line x1="1029.50" y1="478.50" x2="1046.23" y2="478.50" stroke="#000000" stroke-width="1"/>
<text x="1035.80" y="478.00" fill="#333" stroke="#333" stroke-width="0.05" font-size="6.4" font-family='"Liberation Sans", sans-serif' text-anchor="start" font-weight="normal" >1</text>
<line x1="1046.23" y1="463.50" x2="1077.62" y2="463.50" stroke="#000080" stroke-width="1"/>
<line x1="1077.50" y1="455.45" x2="1077.50" y2="463.30" stroke="#800000" stroke-width="1"/>
<line x1="1073.70" y1="455.50" x2="1081.80" y2="455.50" stroke="#800000" stroke-width="1"/>
<text x="1077.50" y="453.50" fill="#800000" stroke="#800000" stroke-width="0.22" font-size="6.8" font-family='"Liberation Sans", sans-serif' text-anchor="middle" font-weight="normal" >VDD</text>
<line x1="1046.23" y1="478.50" x2="1061.92" y2="478.50" stroke="#000080" stroke-width="1"/>
<line x1="1061.50" y1="479.00" x2="1061.50" y2="486.85" stroke="#800000" stroke-width="1"/>
<line x1="1054.00" y1="486.50" x2="1069.50" y2="486.50" stroke="#800000" stroke-width="1"/>
<line x1="1056.50" y1="488.50" x2="1067.00" y2="488.50" stroke="#800000" stroke-width="1"/>
<line x1="1059.00" y1="490.50" x2="1064.50" y2="490.50" stroke="#800000" stroke-width="1"/>
<rect x="1061.00" y="492.00" width="1" height="1" fill="#800000"/>
<text x="1061.50" y="500.19" fill="#800000" stroke="#800000" stroke-width="0.22" font-size="6.8" font-family='"Liberation Sans", sans-serif' text-anchor="middle" font-weight="normal" >GND</text>
<line x1="1046.23" y1="471.50" x2="1108.99" y2="471.50" stroke="#000080" stroke-width="1"/>
<line x1="1108.99" y1="471.50" x2="1116.84" y2="471.50" stroke="#800000" stroke-width="1"/>
<line x1="1116.50" y1="467.15" x2="1116.50" y2="475.15" stroke="#800000" stroke-width="1"/>
<text x="1118.30" y="473.30" fill="#800000" stroke="#800000" stroke-width="0.22" font-size="6.8" font-family='"Liberation Sans", sans-serif' text-anchor="start" font-weight="normal" >DB2P</text>
<line x1="1108.50" y1="462.85" x2="1108.50" y2="471.15" stroke="#000000" stroke-width="1"/>
<circle cx="1108.50" cy="460.15" r="2.6" fill="#fff" stroke="#000" stroke-width="1"/>
<text x="1105.70" y="455.26" fill="#2e2ea0" stroke="#2e2ea0" stroke-width="0.15" font-size="7.6" font-family='"Liberation Serif", serif' text-anchor="start" font-weight="normal" textLength="15.28" lengthAdjust="spacingAndGlyphs">TP26</text>
<text x="1105.50" y="478.33" fill="#3a3a3a" stroke="#3a3a3a" stroke-width="0.22" font-size="6.6" font-family='"Liberation Sans", sans-serif' text-anchor="start" font-weight="normal" >5015</text>
<circle cx="1108.50" cy="471.50" r="1.2" fill="#000080"/>
<text x="1014.00" y="453.75" fill="#1a1a1a" stroke="#1a1a1a" stroke-width="0.22" font-size="6.8" font-family='"Liberation Sans", sans-serif' text-anchor="start" font-weight="normal" >J26</text>
<text x="1014.00" y="492.74" fill="#24248e" stroke="#24248e" stroke-width="0.22" font-size="6.8" font-family='"Liberation Sans", sans-serif' text-anchor="start" font-weight="normal" letter-spacing="0.1">5-146278-3</text>
<rect x="1014.50" y="533.50" width="15" height="31.00" fill="none" stroke="#0000FF" stroke-width="1.1"/>
<circle cx="1021.50" cy="541.50" r="2.4" fill="#0000FF"/>
<circle cx="1021.50" cy="549.50" r="2.4" fill="#0000FF"/>
<rect x="1019.10" y="555.00" width="5" height="5" fill="#0000FF"/>
<line x1="1025.00" y1="541.50" x2="1029.50" y2="541.50" stroke="#0000FF" stroke-width="1"/>
<line x1="1029.50" y1="541.50" x2="1046.23" y2="541.50" stroke="#000000" stroke-width="1"/>
<text x="1035.80" y="540.75" fill="#333" stroke="#333" stroke-width="0.05" font-size="6.4" font-family='"Liberation Sans", sans-serif' text-anchor="start" font-weight="normal" >3</text>
<line x1="1025.00" y1="549.50" x2="1029.50" y2="549.50" stroke="#0000FF" stroke-width="1"/>
<line x1="1029.50" y1="549.50" x2="1046.23" y2="549.50" stroke="#000000" stroke-width="1"/>
<text x="1035.80" y="548.60" fill="#333" stroke="#333" stroke-width="0.05" font-size="6.4" font-family='"Liberation Sans", sans-serif' text-anchor="start" font-weight="normal" >2</text>
<line x1="1025.00" y1="557.50" x2="1029.50" y2="557.50" stroke="#0000FF" stroke-width="1"/>
<line x1="1029.50" y1="557.50" x2="1046.23" y2="557.50" stroke="#000000" stroke-width="1"/>
<text x="1035.80" y="556.44" fill="#333" stroke="#333" stroke-width="0.05" font-size="6.4" font-family='"Liberation Sans", sans-serif' text-anchor="start" font-weight="normal" >1</text>
<line x1="1046.23" y1="541.50" x2="1077.62" y2="541.50" stroke="#000080" stroke-width="1"/>
<line x1="1077.50" y1="533.90" x2="1077.50" y2="541.75" stroke="#800000" stroke-width="1"/>
<line x1="1073.70" y1="533.50" x2="1081.80" y2="533.50" stroke="#800000" stroke-width="1"/>
<text x="1077.50" y="531.95" fill="#800000" stroke="#800000" stroke-width="0.22" font-size="6.8" font-family='"Liberation Sans", sans-serif' text-anchor="middle" font-weight="normal" >VDD</text>
<line x1="1046.23" y1="557.50" x2="1061.92" y2="557.50" stroke="#000080" stroke-width="1"/>
<line x1="1061.50" y1="557.44" x2="1061.50" y2="565.29" stroke="#800000" stroke-width="1"/>
<line x1="1054.00" y1="565.50" x2="1069.50" y2="565.50" stroke="#800000" stroke-width="1"/>
<line x1="1056.50" y1="567.50" x2="1067.00" y2="567.50" stroke="#800000" stroke-width="1"/>
<line x1="1059.00" y1="569.50" x2="1064.50" y2="569.50" stroke="#800000" stroke-width="1"/>
<rect x="1061.00" y="571.00" width="1" height="1" fill="#800000"/>
<text x="1061.50" y="578.64" fill="#800000" stroke="#800000" stroke-width="0.22" font-size="6.8" font-family='"Liberation Sans", sans-serif' text-anchor="middle" font-weight="normal" >GND</text>
<line x1="1046.23" y1="549.50" x2="1116.84" y2="549.50" stroke="#000080" stroke-width="1"/>
<line x1="1116.84" y1="549.50" x2="1124.68" y2="549.50" stroke="#800000" stroke-width="1"/>
<line x1="1124.50" y1="545.60" x2="1124.50" y2="553.60" stroke="#800000" stroke-width="1"/>
<text x="1126.30" y="551.75" fill="#800000" stroke="#800000" stroke-width="0.22" font-size="6.8" font-family='"Liberation Sans", sans-serif' text-anchor="start" font-weight="normal" >DB2N</text>
<line x1="1108.50" y1="541.30" x2="1108.50" y2="549.60" stroke="#000000" stroke-width="1"/>
<circle cx="1108.50" cy="538.60" r="2.6" fill="#fff" stroke="#000" stroke-width="1"/>
<text x="1105.70" y="533.71" fill="#2e2ea0" stroke="#2e2ea0" stroke-width="0.15" font-size="7.6" font-family='"Liberation Serif", serif' text-anchor="start" font-weight="normal" textLength="15.28" lengthAdjust="spacingAndGlyphs">TP25</text>
<text x="1105.50" y="556.78" fill="#3a3a3a" stroke="#3a3a3a" stroke-width="0.22" font-size="6.6" font-family='"Liberation Sans", sans-serif' text-anchor="start" font-weight="normal" >5015</text>
<circle cx="1108.50" cy="549.50" r="1.2" fill="#000080"/>
<text x="1014.00" y="532.20" fill="#1a1a1a" stroke="#1a1a1a" stroke-width="0.22" font-size="6.8" font-family='"Liberation Sans", sans-serif' text-anchor="start" font-weight="normal" >J25</text>
<text x="1014.00" y="571.19" fill="#24248e" stroke="#24248e" stroke-width="0.22" font-size="6.8" font-family='"Liberation Sans", sans-serif' text-anchor="start" font-weight="normal" letter-spacing="0.1">5-146278-3</text>
<rect x="1014.50" y="612.50" width="15" height="31.00" fill="none" stroke="#0000FF" stroke-width="1.1"/>
<circle cx="1021.50" cy="620.50" r="2.4" fill="#0000FF"/>
<circle cx="1021.50" cy="628.50" r="2.4" fill="#0000FF"/>
<rect x="1019.10" y="633.00" width="5" height="5" fill="#0000FF"/>
<line x1="1025.00" y1="620.50" x2="1029.50" y2="620.50" stroke="#0000FF" stroke-width="1"/>
<line x1="1029.50" y1="620.50" x2="1046.23" y2="620.50" stroke="#000000" stroke-width="1"/>
<text x="1035.80" y="619.20" fill="#333" stroke="#333" stroke-width="0.05" font-size="6.4" font-family='"Liberation Sans", sans-serif' text-anchor="start" font-weight="normal" >3</text>
<line x1="1025.00" y1="628.50" x2="1029.50" y2="628.50" stroke="#0000FF" stroke-width="1"/>
<line x1="1029.50" y1="628.50" x2="1046.23" y2="628.50" stroke="#000000" stroke-width="1"/>
<text x="1035.80" y="627.05" fill="#333" stroke="#333" stroke-width="0.05" font-size="6.4" font-family='"Liberation Sans", sans-serif' text-anchor="start" font-weight="normal" >2</text>
<line x1="1025.00" y1="635.50" x2="1029.50" y2="635.50" stroke="#0000FF" stroke-width="1"/>
<line x1="1029.50" y1="635.50" x2="1046.23" y2="635.50" stroke="#000000" stroke-width="1"/>
<text x="1035.80" y="634.89" fill="#333" stroke="#333" stroke-width="0.05" font-size="6.4" font-family='"Liberation Sans", sans-serif' text-anchor="start" font-weight="normal" >1</text>
<line x1="1046.23" y1="620.50" x2="1077.62" y2="620.50" stroke="#000080" stroke-width="1"/>
<line x1="1077.50" y1="612.35" x2="1077.50" y2="620.20" stroke="#800000" stroke-width="1"/>
<line x1="1073.70" y1="612.50" x2="1081.80" y2="612.50" stroke="#800000" stroke-width="1"/>
<text x="1077.50" y="610.40" fill="#800000" stroke="#800000" stroke-width="0.22" font-size="6.8" font-family='"Liberation Sans", sans-serif' text-anchor="middle" font-weight="normal" >VDD</text>
<line x1="1046.23" y1="635.50" x2="1061.92" y2="635.50" stroke="#000080" stroke-width="1"/>
<line x1="1061.50" y1="635.89" x2="1061.50" y2="643.75" stroke="#800000" stroke-width="1"/>
<line x1="1054.00" y1="643.50" x2="1069.50" y2="643.50" stroke="#800000" stroke-width="1"/>
<line x1="1056.50" y1="645.50" x2="1067.00" y2="645.50" stroke="#800000" stroke-width="1"/>
<line x1="1059.00" y1="647.50" x2="1064.50" y2="647.50" stroke="#800000" stroke-width="1"/>
<rect x="1061.00" y="649.00" width="1" height="1" fill="#800000"/>
<text x="1061.50" y="657.09" fill="#800000" stroke="#800000" stroke-width="0.22" font-size="6.8" font-family='"Liberation Sans", sans-serif' text-anchor="middle" font-weight="normal" >GND</text>
<line x1="1046.23" y1="628.50" x2="1101.15" y2="628.50" stroke="#000080" stroke-width="1"/>
<line x1="1101.15" y1="628.50" x2="1108.99" y2="628.50" stroke="#800000" stroke-width="1"/>
<line x1="1108.50" y1="624.05" x2="1108.50" y2="632.05" stroke="#800000" stroke-width="1"/>
<text x="1110.30" y="630.20" fill="#800000" stroke="#800000" stroke-width="0.22" font-size="6.8" font-family='"Liberation Sans", sans-serif' text-anchor="start" font-weight="normal" >DB1P</text>
<line x1="1092.50" y1="619.75" x2="1092.50" y2="628.05" stroke="#000000" stroke-width="1"/>
<circle cx="1092.50" cy="617.05" r="2.6" fill="#fff" stroke="#000" stroke-width="1"/>
<text x="1089.70" y="612.16" fill="#2e2ea0" stroke="#2e2ea0" stroke-width="0.15" font-size="7.6" font-family='"Liberation Serif", serif' text-anchor="start" font-weight="normal" textLength="15.28" lengthAdjust="spacingAndGlyphs">TP24</text>
<text x="1089.50" y="635.23" fill="#3a3a3a" stroke="#3a3a3a" stroke-width="0.22" font-size="6.6" font-family='"Liberation Sans", sans-serif' text-anchor="start" font-weight="normal" >5015</text>
<circle cx="1092.50" cy="628.50" r="1.2" fill="#000080"/>
<text x="1014.00" y="610.65" fill="#1a1a1a" stroke="#1a1a1a" stroke-width="0.22" font-size="6.8" font-family='"Liberation Sans", sans-serif' text-anchor="start" font-weight="normal" >J24</text>
<text x="1014.00" y="649.64" fill="#24248e" stroke="#24248e" stroke-width="0.22" font-size="6.8" font-family='"Liberation Sans", sans-serif' text-anchor="start" font-weight="normal" letter-spacing="0.1">5-146278-3</text>
<rect x="1014.50" y="690.50" width="15" height="31.00" fill="none" stroke="#0000FF" stroke-width="1.1"/>
<circle cx="1021.50" cy="698.50" r="2.4" fill="#0000FF"/>
<circle cx="1021.50" cy="706.50" r="2.4" fill="#0000FF"/>
<rect x="1019.10" y="712.00" width="5" height="5" fill="#0000FF"/>
<line x1="1025.00" y1="698.50" x2="1029.50" y2="698.50" stroke="#0000FF" stroke-width="1"/>
<line x1="1029.50" y1="698.50" x2="1046.23" y2="698.50" stroke="#000000" stroke-width="1"/>
<text x="1035.80" y="697.65" fill="#333" stroke="#333" stroke-width="0.05" font-size="6.4" font-family='"Liberation Sans", sans-serif' text-anchor="start" font-weight="normal" >3</text>
<line x1="1025.00" y1="706.50" x2="1029.50" y2="706.50" stroke="#0000FF" stroke-width="1"/>
<line x1="1029.50" y1="706.50" x2="1046.23" y2="706.50" stroke="#000000" stroke-width="1"/>
<text x="1035.80" y="705.50" fill="#333" stroke="#333" stroke-width="0.05" font-size="6.4" font-family='"Liberation Sans", sans-serif' text-anchor="start" font-weight="normal" >2</text>
<line x1="1025.00" y1="714.50" x2="1029.50" y2="714.50" stroke="#0000FF" stroke-width="1"/>
<line x1="1029.50" y1="714.50" x2="1046.23" y2="714.50" stroke="#000000" stroke-width="1"/>
<text x="1035.80" y="713.34" fill="#333" stroke="#333" stroke-width="0.05" font-size="6.4" font-family='"Liberation Sans", sans-serif' text-anchor="start" font-weight="normal" >1</text>
<line x1="1046.23" y1="698.50" x2="1077.62" y2="698.50" stroke="#000080" stroke-width="1"/>
<line x1="1077.50" y1="690.80" x2="1077.50" y2="698.65" stroke="#800000" stroke-width="1"/>
<line x1="1073.70" y1="690.50" x2="1081.80" y2="690.50" stroke="#800000" stroke-width="1"/>
<text x="1077.50" y="688.85" fill="#800000" stroke="#800000" stroke-width="0.22" font-size="6.8" font-family='"Liberation Sans", sans-serif' text-anchor="middle" font-weight="normal" >VDD</text>
<line x1="1046.23" y1="714.50" x2="1061.92" y2="714.50" stroke="#000080" stroke-width="1"/>
<line x1="1061.50" y1="714.34" x2="1061.50" y2="722.19" stroke="#800000" stroke-width="1"/>
<line x1="1054.00" y1="722.50" x2="1069.50" y2="722.50" stroke="#800000" stroke-width="1"/>
<line x1="1056.50" y1="724.50" x2="1067.00" y2="724.50" stroke="#800000" stroke-width="1"/>
<line x1="1059.00" y1="726.50" x2="1064.50" y2="726.50" stroke="#800000" stroke-width="1"/>
<rect x="1061.00" y="728.00" width="1" height="1" fill="#800000"/>
<text x="1061.50" y="735.54" fill="#800000" stroke="#800000" stroke-width="0.22" font-size="6.8" font-family='"Liberation Sans", sans-serif' text-anchor="middle" font-weight="normal" >GND</text>
<line x1="1046.23" y1="706.50" x2="1108.99" y2="706.50" stroke="#000080" stroke-width="1"/>
<line x1="1108.99" y1="706.50" x2="1116.84" y2="706.50" stroke="#800000" stroke-width="1"/>
<line x1="1116.50" y1="702.50" x2="1116.50" y2="710.50" stroke="#800000" stroke-width="1"/>
<text x="1118.30" y="708.65" fill="#800000" stroke="#800000" stroke-width="0.22" font-size="6.8" font-family='"Liberation Sans", sans-serif' text-anchor="start" font-weight="normal" >DB1N</text>
<line x1="1108.50" y1="698.20" x2="1108.50" y2="706.50" stroke="#000000" stroke-width="1"/>
<circle cx="1108.50" cy="695.50" r="2.6" fill="#fff" stroke="#000" stroke-width="1"/>
<text x="1105.70" y="690.61" fill="#2e2ea0" stroke="#2e2ea0" stroke-width="0.15" font-size="7.6" font-family='"Liberation Serif", serif' text-anchor="start" font-weight="normal" textLength="15.28" lengthAdjust="spacingAndGlyphs">TP23</text>
<text x="1105.50" y="713.68" fill="#3a3a3a" stroke="#3a3a3a" stroke-width="0.22" font-size="6.6" font-family='"Liberation Sans", sans-serif' text-anchor="start" font-weight="normal" >5015</text>
<circle cx="1108.50" cy="706.50" r="1.2" fill="#000080"/>
<circle cx="1093.50" cy="706.50" r="1.5" fill="#000080"/>
<text x="1014.00" y="689.10" fill="#1a1a1a" stroke="#1a1a1a" stroke-width="0.22" font-size="6.8" font-family='"Liberation Sans", sans-serif' text-anchor="start" font-weight="normal" >J23</text>
<text x="1014.00" y="728.09" fill="#24248e" stroke="#24248e" stroke-width="0.22" font-size="6.8" font-family='"Liberation Sans", sans-serif' text-anchor="start" font-weight="normal" letter-spacing="0.1">5-146278-3</text>
<line x1="500.70" y1="102.50" x2="508.80" y2="102.50" stroke="#800000" stroke-width="1"/>
<text x="504.50" y="100.45" fill="#800000" stroke="#800000" stroke-width="0.22" font-size="6.8" font-family='"Liberation Sans", sans-serif' text-anchor="middle" font-weight="normal" >VDD</text>
<line x1="504.50" y1="102.40" x2="504.50" y2="110.80" stroke="#800000" stroke-width="1"/>
<line x1="504.50" y1="110.80" x2="504.50" y2="126.40" stroke="#000080" stroke-width="1"/>
<line x1="504.93" y1="118.50" x2="512.50" y2="118.50" stroke="#000000" stroke-width="1"/>
<circle cx="515.2" cy="118.5" r="2.6" fill="#fff" stroke="#000" stroke-width="1.1"/>
<line x1="495.50" y1="126.50" x2="504.93" y2="126.50" stroke="#000000" stroke-width="1"/>
<circle cx="492.8" cy="125.5" r="2.6" fill="#fff" stroke="#000" stroke-width="1.1"/>
<circle cx="504.50" cy="118.50" r="1.6" fill="#000080"/>
<text x="512.50" y="112.71" fill="#2e2ea0" stroke="#2e2ea0" stroke-width="0.15" font-size="7.6" font-family='"Liberation Serif", serif' text-anchor="start" font-weight="normal" textLength="15.28" lengthAdjust="spacingAndGlyphs">TP33</text>
<text x="490.50" y="120.51" fill="#2e2ea0" stroke="#2e2ea0" stroke-width="0.15" font-size="7.6" font-family='"Liberation Serif", serif' text-anchor="start" font-weight="normal" textLength="15.28" lengthAdjust="spacingAndGlyphs">TP34</text>
<text x="512.50" y="126.18" fill="#3a3a3a" stroke="#3a3a3a" stroke-width="0.22" font-size="6.6" font-family='"Liberation Sans", sans-serif' text-anchor="start" font-weight="normal" >5015</text>
<text x="490.30" y="134.58" fill="#3a3a3a" stroke="#3a3a3a" stroke-width="0.22" font-size="6.6" font-family='"Liberation Sans", sans-serif' text-anchor="start" font-weight="normal" >5015</text>
<line x1="508.70" y1="157.50" x2="516.80" y2="157.50" stroke="#800000" stroke-width="1"/>
<text x="512.50" y="155.45" fill="#800000" stroke="#800000" stroke-width="0.22" font-size="6.8" font-family='"Liberation Sans", sans-serif' text-anchor="middle" font-weight="normal" >VDD</text>
<line x1="512.50" y1="157.40" x2="512.50" y2="165.30" stroke="#800000" stroke-width="1"/>
<line x1="512.50" y1="165.30" x2="512.50" y2="172.50" stroke="#000080" stroke-width="1"/>
<line x1="512.50" y1="172.50" x2="512.50" y2="183.20" stroke="#000000" stroke-width="1"/>
<line x1="506.77" y1="183.50" x2="519.27" y2="183.50" stroke="#0000FF" stroke-width="1.2"/>
<line x1="506.77" y1="186.50" x2="519.27" y2="186.50" stroke="#0000FF" stroke-width="1.2"/>
<line x1="512.50" y1="186.20" x2="512.50" y2="196.00" stroke="#000000" stroke-width="1"/>
<line x1="512.50" y1="196.00" x2="512.50" y2="221.40" stroke="#000080" stroke-width="1"/>
<line x1="512.50" y1="221.40" x2="512.50" y2="228.10" stroke="#800000" stroke-width="1"/>
<line x1="505.00" y1="228.50" x2="520.50" y2="228.50" stroke="#800000" stroke-width="1"/>
<line x1="507.50" y1="230.50" x2="518.00" y2="230.50" stroke="#800000" stroke-width="1"/>
<line x1="510.00" y1="232.50" x2="515.50" y2="232.50" stroke="#800000" stroke-width="1"/>
<rect x="512.00" y="234.00" width="1" height="1" fill="#800000"/>
<text x="512.50" y="241.45" fill="#800000" stroke="#800000" stroke-width="0.22" font-size="6.8" font-family='"Liberation Sans", sans-serif' text-anchor="middle" font-weight="normal" >GND</text>
<text x="519.00" y="185.35" fill="#1a1a1a" stroke="#1a1a1a" stroke-width="0.22" font-size="6.8" font-family='"Liberation Sans", sans-serif' text-anchor="start" font-weight="normal" >C17</text>
<text x="519.00" y="193.45" fill="#1a1a1a" stroke="#1a1a1a" stroke-width="0.22" font-size="6.8" font-family='"Liberation Sans", sans-serif' text-anchor="start" font-weight="normal" >1µF</text>
<text x="519.00" y="200.95" fill="#1a1a1a" stroke="#1a1a1a" stroke-width="0.22" font-size="6.8" font-family='"Liberation Sans", sans-serif' text-anchor="start" font-weight="normal" >6.3V</text>
<line x1="704.70" y1="133.50" x2="712.80" y2="133.50" stroke="#800000" stroke-width="1"/>
<text x="708.50" y="131.86" fill="#800000" stroke="#800000" stroke-width="0.22" font-size="6.8" font-family='"Liberation Sans", sans-serif' text-anchor="middle" font-weight="normal" >VDD</text>
<line x1="708.50" y1="133.81" x2="708.50" y2="142.30" stroke="#800000" stroke-width="1"/>
<line x1="708.50" y1="142.30" x2="708.50" y2="150.00" stroke="#000000" stroke-width="1"/>
<path d="M708.50,150.00 L708.50,153.30 L706.20,154.50 L709.80,156.60 L706.20,158.40 L709.80,160.50 L708.30,161.70 L708.50,161.70 L708.50,165.00" fill="none" stroke="#0000FF" stroke-width="1.25"/>
<line x1="708.50" y1="165.00" x2="708.50" y2="180.40" stroke="#000000" stroke-width="1"/>
<path d="M708.50,180.40 L708.50,183.61 L706.20,184.78 L709.80,186.82 L706.20,188.58 L709.80,190.62 L708.30,191.79 L708.50,191.79 L708.50,195.00" fill="none" stroke="#0000FF" stroke-width="1.25"/>
<line x1="708.50" y1="195.00" x2="708.50" y2="204.00" stroke="#000000" stroke-width="1"/>
<line x1="708.50" y1="204.00" x2="708.50" y2="212.27" stroke="#800000" stroke-width="1"/>
<line x1="701.00" y1="212.50" x2="716.50" y2="212.50" stroke="#800000" stroke-width="1"/>
<line x1="703.50" y1="214.50" x2="714.00" y2="214.50" stroke="#800000" stroke-width="1"/>
<line x1="706.00" y1="216.50" x2="711.50" y2="216.50" stroke="#800000" stroke-width="1"/>
<rect x="708.00" y="218.00" width="1" height="1" fill="#800000"/>
<text x="708.50" y="225.61" fill="#800000" stroke="#800000" stroke-width="0.22" font-size="6.8" font-family='"Liberation Sans", sans-serif' text-anchor="middle" font-weight="normal" >GND</text>
<circle cx="708.50" cy="173.50" r="1.6" fill="#000080"/>
<line x1="708.90" y1="173.50" x2="732.43" y2="173.50" stroke="#000080" stroke-width="1"/>
<line x1="732.43" y1="173.50" x2="740.28" y2="173.50" stroke="#800000" stroke-width="1"/>
<line x1="740.50" y1="169.04" x2="740.50" y2="177.04" stroke="#800000" stroke-width="1"/>
<text x="742.30" y="175.19" fill="#800000" stroke="#800000" stroke-width="0.22" font-size="6.8" font-family='"Liberation Sans", sans-serif' text-anchor="start" font-weight="normal" >/OE</text>
<text x="711.00" y="153.85" fill="#1a1a1a" stroke="#1a1a1a" stroke-width="0.22" font-size="6.8" font-family='"Liberation Sans", sans-serif' text-anchor="start" font-weight="normal" >R46</text>
<text x="711.00" y="161.75" fill="#1a1a1a" stroke="#1a1a1a" stroke-width="0.22" font-size="6.8" font-family='"Liberation Sans", sans-serif' text-anchor="start" font-weight="normal" >10k</text>
<text x="711.00" y="185.35" fill="#1a1a1a" stroke="#1a1a1a" stroke-width="0.22" font-size="6.8" font-family='"Liberation Sans", sans-serif' text-anchor="start" font-weight="normal" >R47</text>
<text x="711.00" y="193.35" fill="#1a1a1a" stroke="#1a1a1a" stroke-width="0.22" font-size="6.8" font-family='"Liberation Sans", sans-serif' text-anchor="start" font-weight="normal" >10k</text>
<line x1="806.70" y1="133.50" x2="814.80" y2="133.50" stroke="#800000" stroke-width="1"/>
<text x="810.50" y="131.86" fill="#800000" stroke="#800000" stroke-width="0.22" font-size="6.8" font-family='"Liberation Sans", sans-serif' text-anchor="middle" font-weight="normal" >VDD</text>
<line x1="810.50" y1="133.81" x2="810.50" y2="142.30" stroke="#800000" stroke-width="1"/>
<line x1="810.50" y1="142.30" x2="810.50" y2="150.00" stroke="#000000" stroke-width="1"/>
<path d="M810.50,150.00 L810.50,153.30 L808.20,154.50 L811.80,156.60 L808.20,158.40 L811.80,160.50 L810.30,161.70 L810.50,161.70 L810.50,165.00" fill="none" stroke="#0000FF" stroke-width="1.25"/>
<line x1="810.50" y1="165.00" x2="810.50" y2="180.40" stroke="#000000" stroke-width="1"/>
<path d="M810.50,180.40 L810.50,183.61 L808.20,184.78 L811.80,186.82 L808.20,188.58 L811.80,190.62 L810.30,191.79 L810.50,191.79 L810.50,195.00" fill="none" stroke="#0000FF" stroke-width="1.25"/>
<line x1="810.50" y1="195.00" x2="810.50" y2="204.00" stroke="#000000" stroke-width="1"/>
<line x1="810.50" y1="204.00" x2="810.50" y2="212.27" stroke="#800000" stroke-width="1"/>
<line x1="803.00" y1="212.50" x2="818.50" y2="212.50" stroke="#800000" stroke-width="1"/>
<line x1="805.50" y1="214.50" x2="816.00" y2="214.50" stroke="#800000" stroke-width="1"/>
<line x1="808.00" y1="216.50" x2="813.50" y2="216.50" stroke="#800000" stroke-width="1"/>
<rect x="810.00" y="218.00" width="1" height="1" fill="#800000"/>
<text x="810.50" y="225.61" fill="#800000" stroke="#800000" stroke-width="0.22" font-size="6.8" font-family='"Liberation Sans", sans-serif' text-anchor="middle" font-weight="normal" >GND</text>
<circle cx="810.50" cy="173.50" r="1.6" fill="#000080"/>
<line x1="810.88" y1="173.50" x2="834.42" y2="173.50" stroke="#000080" stroke-width="1"/>
<line x1="834.42" y1="173.50" x2="842.26" y2="173.50" stroke="#800000" stroke-width="1"/>
<line x1="842.50" y1="169.04" x2="842.50" y2="177.04" stroke="#800000" stroke-width="1"/>
<text x="844.30" y="175.19" fill="#800000" stroke="#800000" stroke-width="0.22" font-size="6.8" font-family='"Liberation Sans", sans-serif' text-anchor="start" font-weight="normal" >SEL</text>
<text x="813.00" y="153.85" fill="#1a1a1a" stroke="#1a1a1a" stroke-width="0.22" font-size="6.8" font-family='"Liberation Sans", sans-serif' text-anchor="start" font-weight="normal" >R48</text>
<text x="813.00" y="161.75" fill="#1a1a1a" stroke="#1a1a1a" stroke-width="0.22" font-size="6.8" font-family='"Liberation Sans", sans-serif' text-anchor="start" font-weight="normal" >10k</text>
<text x="813.00" y="185.35" fill="#1a1a1a" stroke="#1a1a1a" stroke-width="0.22" font-size="6.8" font-family='"Liberation Sans", sans-serif' text-anchor="start" font-weight="normal" >R49</text>
<text x="813.00" y="193.35" fill="#1a1a1a" stroke="#1a1a1a" stroke-width="0.22" font-size="6.8" font-family='"Liberation Sans", sans-serif' text-anchor="start" font-weight="normal" >10k</text>
<line x1="571.70" y1="322.50" x2="579.80" y2="322.50" stroke="#800000" stroke-width="1"/>
<text x="575.50" y="320.14" fill="#800000" stroke="#800000" stroke-width="0.22" font-size="6.8" font-family='"Liberation Sans", sans-serif' text-anchor="middle" font-weight="normal" >VDD</text>
<line x1="575.50" y1="322.10" x2="575.50" y2="329.94" stroke="#800000" stroke-width="1"/>
<line x1="575.53" y1="329.50" x2="606.91" y2="329.50" stroke="#000080" stroke-width="1"/>
<line x1="606.50" y1="329.94" x2="606.50" y2="353.48" stroke="#000080" stroke-width="1"/>
<circle cx="575.50" cy="329.50" r="1.6" fill="#000080"/>
<line x1="575.50" y1="329.94" x2="575.50" y2="340.40" stroke="#000000" stroke-width="1"/>
<line x1="569.53" y1="340.50" x2="582.03" y2="340.50" stroke="#0000FF" stroke-width="1.2"/>
<line x1="569.53" y1="343.50" x2="582.03" y2="343.50" stroke="#0000FF" stroke-width="1.2"/>
<line x1="575.50" y1="343.40" x2="575.50" y2="352.00" stroke="#000000" stroke-width="1"/>
<line x1="575.50" y1="352.00" x2="575.50" y2="361.32" stroke="#800000" stroke-width="1"/>
<line x1="568.00" y1="361.50" x2="583.50" y2="361.50" stroke="#800000" stroke-width="1"/>
<line x1="570.50" y1="363.50" x2="581.00" y2="363.50" stroke="#800000" stroke-width="1"/>
<line x1="573.00" y1="365.50" x2="578.50" y2="365.50" stroke="#800000" stroke-width="1"/>
<rect x="575.00" y="367.00" width="1" height="1" fill="#800000"/>
<text x="575.50" y="374.67" fill="#800000" stroke="#800000" stroke-width="0.22" font-size="6.8" font-family='"Liberation Sans", sans-serif' text-anchor="middle" font-weight="normal" >GND</text>
<text x="582.00" y="342.65" fill="#1a1a1a" stroke="#1a1a1a" stroke-width="0.22" font-size="6.8" font-family='"Liberation Sans", sans-serif' text-anchor="start" font-weight="normal" >C16</text>
<text x="582.00" y="350.65" fill="#1a1a1a" stroke="#1a1a1a" stroke-width="0.22" font-size="6.8" font-family='"Liberation Sans", sans-serif' text-anchor="start" font-weight="normal" >10V</text>
<text x="582.00" y="358.35" fill="#1a1a1a" stroke="#1a1a1a" stroke-width="0.22" font-size="6.8" font-family='"Liberation Sans", sans-serif' text-anchor="start" font-weight="normal" >0.1uF</text>
<rect x="622.5" y="337.5" width="85.0" height="274.0" fill="#ffffb0" stroke="#800000" stroke-width="1.3"/>
<text x="622.00" y="335.35" fill="#3a3aae" stroke="#3a3aae" stroke-width="0.22" font-size="6.8" font-family='"Liberation Sans", sans-serif' text-anchor="start" font-weight="normal" >U1</text>
<text x="622.00" y="618.65" fill="#1a1a1a" stroke="#1a1a1a" stroke-width="0.22" font-size="6.8" font-family='"Liberation Sans", sans-serif' text-anchor="start" font-weight="normal" >TMUX646ZEC</text>
<line x1="606.91" y1="353.50" x2="622.50" y2="353.50" stroke="#000000" stroke-width="1"/>
<text x="609.00" y="351.45" fill="#555" stroke="#555" stroke-width="0.22" font-size="5.2" font-family='"Liberation Sans", sans-serif' text-anchor="start" font-weight="normal" >A1</text>
<text x="625.50" y="355.62" fill="#1a1a1a" stroke="#1a1a1a" stroke-width="0.22" font-size="6.8" font-family='"Liberation Sans", sans-serif' text-anchor="start" font-weight="normal" >VDD</text>
<line x1="606.91" y1="384.50" x2="622.50" y2="384.50" stroke="#000000" stroke-width="1"/>
<text x="609.00" y="382.83" fill="#555" stroke="#555" stroke-width="0.22" font-size="5.2" font-family='"Liberation Sans", sans-serif' text-anchor="start" font-weight="normal" >F5</text>
<text x="625.50" y="387.00" fill="#1a1a1a" stroke="#1a1a1a" stroke-width="0.22" font-size="6.8" font-family='"Liberation Sans", sans-serif' text-anchor="start" font-weight="normal" >CLKP</text>
<path d="M619.00,384.50 L615.50,382.20 L615.50,386.80 Z M614.90,381.90 L613.70,381.90 L613.70,387.10 L614.90,387.10 Z M611.70,384.50 L613.70,382.50 L613.70,386.50 Z" fill="#000" stroke="#000" stroke-width="0.5"/>
<line x1="567.69" y1="384.50" x2="575.53" y2="384.50" stroke="#800000" stroke-width="1"/>
<line x1="575.53" y1="384.50" x2="606.91" y2="384.50" stroke="#000080" stroke-width="1"/>
<line x1="567.50" y1="380.86" x2="567.50" y2="388.86" stroke="#800000" stroke-width="1"/>
<text x="565.90" y="387.00" fill="#800000" stroke="#800000" stroke-width="0.22" font-size="6.8" font-family='"Liberation Sans", sans-serif' text-anchor="end" font-weight="normal" >CLKP</text>
<line x1="606.91" y1="392.50" x2="622.50" y2="392.50" stroke="#000000" stroke-width="1"/>
<text x="609.00" y="390.67" fill="#555" stroke="#555" stroke-width="0.22" font-size="5.2" font-family='"Liberation Sans", sans-serif' text-anchor="start" font-weight="normal" >F5</text>
<text x="625.50" y="394.85" fill="#1a1a1a" stroke="#1a1a1a" stroke-width="0.22" font-size="6.8" font-family='"Liberation Sans", sans-serif' text-anchor="start" font-weight="normal" >CLKN</text>
<path d="M619.00,392.50 L615.50,390.20 L615.50,394.80 Z M614.90,389.90 L613.70,389.90 L613.70,395.10 L614.90,395.10 Z M611.70,392.50 L613.70,390.50 L613.70,394.50 Z" fill="#000" stroke="#000" stroke-width="0.5"/>
<line x1="536.31" y1="392.50" x2="544.15" y2="392.50" stroke="#800000" stroke-width="1"/>
<line x1="544.15" y1="392.50" x2="606.91" y2="392.50" stroke="#000080" stroke-width="1"/>
<line x1="536.50" y1="388.70" x2="536.50" y2="396.70" stroke="#800000" stroke-width="1"/>
<text x="534.90" y="394.85" fill="#800000" stroke="#800000" stroke-width="0.22" font-size="6.8" font-family='"Liberation Sans", sans-serif' text-anchor="end" font-weight="normal" >CLKN</text>
<line x1="606.91" y1="408.50" x2="622.50" y2="408.50" stroke="#000000" stroke-width="1"/>
<text x="609.00" y="406.36" fill="#555" stroke="#555" stroke-width="0.22" font-size="5.2" font-family='"Liberation Sans", sans-serif' text-anchor="start" font-weight="normal" >E6</text>
<text x="625.50" y="410.54" fill="#1a1a1a" stroke="#1a1a1a" stroke-width="0.22" font-size="6.8" font-family='"Liberation Sans", sans-serif' text-anchor="start" font-weight="normal" >D1P</text>
<path d="M619.00,408.50 L615.50,406.20 L615.50,410.80 Z M614.90,405.90 L613.70,405.90 L613.70,411.10 L614.90,411.10 Z M611.70,408.50 L613.70,406.50 L613.70,410.50 Z" fill="#000" stroke="#000" stroke-width="0.5"/>
<line x1="567.69" y1="408.50" x2="575.53" y2="408.50" stroke="#800000" stroke-width="1"/>
<line x1="575.53" y1="408.50" x2="606.91" y2="408.50" stroke="#000080" stroke-width="1"/>
<line x1="567.50" y1="404.39" x2="567.50" y2="412.39" stroke="#800000" stroke-width="1"/>
<text x="565.90" y="410.54" fill="#800000" stroke="#800000" stroke-width="0.22" font-size="6.8" font-family='"Liberation Sans", sans-serif' text-anchor="end" font-weight="normal" >D1P</text>
<line x1="606.91" y1="416.50" x2="622.50" y2="416.50" stroke="#000000" stroke-width="1"/>
<text x="609.00" y="414.21" fill="#555" stroke="#555" stroke-width="0.22" font-size="5.2" font-family='"Liberation Sans", sans-serif' text-anchor="start" font-weight="normal" >E5</text>
<text x="625.50" y="418.38" fill="#1a1a1a" stroke="#1a1a1a" stroke-width="0.22" font-size="6.8" font-family='"Liberation Sans", sans-serif' text-anchor="start" font-weight="normal" >D1N</text>
<path d="M619.00,416.50 L615.50,414.20 L615.50,418.80 Z M614.90,413.90 L613.70,413.90 L613.70,419.10 L614.90,419.10 Z M611.70,416.50 L613.70,414.50 L613.70,418.50 Z" fill="#000" stroke="#000" stroke-width="0.5"/>
<line x1="536.31" y1="416.50" x2="544.15" y2="416.50" stroke="#800000" stroke-width="1"/>
<line x1="544.15" y1="416.50" x2="606.91" y2="416.50" stroke="#000080" stroke-width="1"/>
<line x1="536.50" y1="412.24" x2="536.50" y2="420.24" stroke="#800000" stroke-width="1"/>
<text x="534.90" y="418.38" fill="#800000" stroke="#800000" stroke-width="0.22" font-size="6.8" font-family='"Liberation Sans", sans-serif' text-anchor="end" font-weight="normal" >D1N</text>
<line x1="606.91" y1="431.50" x2="622.50" y2="431.50" stroke="#000000" stroke-width="1"/>
<text x="609.00" y="429.90" fill="#555" stroke="#555" stroke-width="0.22" font-size="5.2" font-family='"Liberation Sans", sans-serif' text-anchor="start" font-weight="normal" >D6</text>
<text x="625.50" y="434.07" fill="#1a1a1a" stroke="#1a1a1a" stroke-width="0.22" font-size="6.8" font-family='"Liberation Sans", sans-serif' text-anchor="start" font-weight="normal" >D2P</text>
<path d="M619.00,431.50 L615.50,429.20 L615.50,433.80 Z M614.90,428.90 L613.70,428.90 L613.70,434.10 L614.90,434.10 Z M611.70,431.50 L613.70,429.50 L613.70,433.50 Z" fill="#000" stroke="#000" stroke-width="0.5"/>
<line x1="559.84" y1="431.50" x2="567.69" y2="431.50" stroke="#800000" stroke-width="1"/>
<line x1="567.69" y1="431.50" x2="606.91" y2="431.50" stroke="#000080" stroke-width="1"/>
<line x1="559.50" y1="427.92" x2="559.50" y2="435.92" stroke="#800000" stroke-width="1"/>
<text x="557.90" y="434.07" fill="#800000" stroke="#800000" stroke-width="0.22" font-size="6.8" font-family='"Liberation Sans", sans-serif' text-anchor="end" font-weight="normal" >D2P</text>
<line x1="606.91" y1="439.50" x2="622.50" y2="439.50" stroke="#000000" stroke-width="1"/>
<text x="609.00" y="437.74" fill="#555" stroke="#555" stroke-width="0.22" font-size="5.2" font-family='"Liberation Sans", sans-serif' text-anchor="start" font-weight="normal" >D5</text>
<text x="625.50" y="441.92" fill="#1a1a1a" stroke="#1a1a1a" stroke-width="0.22" font-size="6.8" font-family='"Liberation Sans", sans-serif' text-anchor="start" font-weight="normal" >D2N</text>
<path d="M619.00,439.50 L615.50,437.20 L615.50,441.80 Z M614.90,436.90 L613.70,436.90 L613.70,442.10 L614.90,442.10 Z M611.70,439.50 L613.70,437.50 L613.70,441.50 Z" fill="#000" stroke="#000" stroke-width="0.5"/>
<line x1="536.31" y1="439.50" x2="544.15" y2="439.50" stroke="#800000" stroke-width="1"/>
<line x1="544.15" y1="439.50" x2="606.91" y2="439.50" stroke="#000080" stroke-width="1"/>
<line x1="536.50" y1="435.77" x2="536.50" y2="443.77" stroke="#800000" stroke-width="1"/>
<text x="534.90" y="441.92" fill="#800000" stroke="#800000" stroke-width="0.22" font-size="6.8" font-family='"Liberation Sans", sans-serif' text-anchor="end" font-weight="normal" >D2N</text>
<line x1="606.91" y1="455.50" x2="622.50" y2="455.50" stroke="#000000" stroke-width="1"/>
<text x="609.00" y="453.43" fill="#555" stroke="#555" stroke-width="0.22" font-size="5.2" font-family='"Liberation Sans", sans-serif' text-anchor="start" font-weight="normal" >C6</text>
<text x="625.50" y="457.61" fill="#1a1a1a" stroke="#1a1a1a" stroke-width="0.22" font-size="6.8" font-family='"Liberation Sans", sans-serif' text-anchor="start" font-weight="normal" >D3P</text>
<path d="M619.00,455.50 L615.50,453.20 L615.50,457.80 Z M614.90,452.90 L613.70,452.90 L613.70,458.10 L614.90,458.10 Z M611.70,455.50 L613.70,453.50 L613.70,457.50 Z" fill="#000" stroke="#000" stroke-width="0.5"/>
<line x1="559.84" y1="455.50" x2="567.69" y2="455.50" stroke="#800000" stroke-width="1"/>
<line x1="567.69" y1="455.50" x2="606.91" y2="455.50" stroke="#000080" stroke-width="1"/>
<line x1="559.50" y1="451.46" x2="559.50" y2="459.46" stroke="#800000" stroke-width="1"/>
<text x="557.90" y="457.61" fill="#800000" stroke="#800000" stroke-width="0.22" font-size="6.8" font-family='"Liberation Sans", sans-serif' text-anchor="end" font-weight="normal" >D3P</text>
<line x1="606.91" y1="463.50" x2="622.50" y2="463.50" stroke="#000000" stroke-width="1"/>
<text x="609.00" y="461.28" fill="#555" stroke="#555" stroke-width="0.22" font-size="5.2" font-family='"Liberation Sans", sans-serif' text-anchor="start" font-weight="normal" >C5</text>
<text x="625.50" y="465.45" fill="#1a1a1a" stroke="#1a1a1a" stroke-width="0.22" font-size="6.8" font-family='"Liberation Sans", sans-serif' text-anchor="start" font-weight="normal" >D3N</text>
<path d="M619.00,463.50 L615.50,461.20 L615.50,465.80 Z M614.90,460.90 L613.70,460.90 L613.70,466.10 L614.90,466.10 Z M611.70,463.50 L613.70,461.50 L613.70,465.50 Z" fill="#000" stroke="#000" stroke-width="0.5"/>
<line x1="536.31" y1="463.50" x2="544.15" y2="463.50" stroke="#800000" stroke-width="1"/>
<line x1="544.15" y1="463.50" x2="606.91" y2="463.50" stroke="#000080" stroke-width="1"/>
<line x1="536.50" y1="459.30" x2="536.50" y2="467.30" stroke="#800000" stroke-width="1"/>
<text x="534.90" y="465.45" fill="#800000" stroke="#800000" stroke-width="0.22" font-size="6.8" font-family='"Liberation Sans", sans-serif' text-anchor="end" font-weight="normal" >D3N</text>
<line x1="606.91" y1="478.50" x2="622.50" y2="478.50" stroke="#000000" stroke-width="1"/>
<text x="609.00" y="476.97" fill="#555" stroke="#555" stroke-width="0.22" font-size="5.2" font-family='"Liberation Sans", sans-serif' text-anchor="start" font-weight="normal" >B6</text>
<text x="625.50" y="481.14" fill="#1a1a1a" stroke="#1a1a1a" stroke-width="0.22" font-size="6.8" font-family='"Liberation Sans", sans-serif' text-anchor="start" font-weight="normal" >D4P</text>
<path d="M619.00,478.50 L615.50,476.20 L615.50,480.80 Z M614.90,475.90 L613.70,475.90 L613.70,481.10 L614.90,481.10 Z M611.70,478.50 L613.70,476.50 L613.70,480.50 Z" fill="#000" stroke="#000" stroke-width="0.5"/>
<line x1="559.84" y1="478.50" x2="567.69" y2="478.50" stroke="#800000" stroke-width="1"/>
<line x1="567.69" y1="478.50" x2="606.91" y2="478.50" stroke="#000080" stroke-width="1"/>
<line x1="559.50" y1="475.00" x2="559.50" y2="483.00" stroke="#800000" stroke-width="1"/>
<text x="557.90" y="481.14" fill="#800000" stroke="#800000" stroke-width="0.22" font-size="6.8" font-family='"Liberation Sans", sans-serif' text-anchor="end" font-weight="normal" >D4P</text>
<line x1="606.91" y1="486.50" x2="622.50" y2="486.50" stroke="#000000" stroke-width="1"/>
<text x="609.00" y="484.81" fill="#555" stroke="#555" stroke-width="0.22" font-size="5.2" font-family='"Liberation Sans", sans-serif' text-anchor="start" font-weight="normal" >B5</text>
<text x="625.50" y="488.99" fill="#1a1a1a" stroke="#1a1a1a" stroke-width="0.22" font-size="6.8" font-family='"Liberation Sans", sans-serif' text-anchor="start" font-weight="normal" >D4N</text>
<path d="M619.00,486.50 L615.50,484.20 L615.50,488.80 Z M614.90,483.90 L613.70,483.90 L613.70,489.10 L614.90,489.10 Z M611.70,486.50 L613.70,484.50 L613.70,488.50 Z" fill="#000" stroke="#000" stroke-width="0.5"/>
<line x1="536.31" y1="486.50" x2="544.15" y2="486.50" stroke="#800000" stroke-width="1"/>
<line x1="544.15" y1="486.50" x2="606.91" y2="486.50" stroke="#000080" stroke-width="1"/>
<line x1="536.50" y1="482.84" x2="536.50" y2="490.84" stroke="#800000" stroke-width="1"/>
<text x="534.90" y="488.99" fill="#800000" stroke="#800000" stroke-width="0.22" font-size="6.8" font-family='"Liberation Sans", sans-serif' text-anchor="end" font-weight="normal" >D4N</text>
<line x1="606.91" y1="518.50" x2="622.50" y2="518.50" stroke="#000000" stroke-width="1"/>
<text x="609.00" y="516.19" fill="#555" stroke="#555" stroke-width="0.22" font-size="5.2" font-family='"Liberation Sans", sans-serif' text-anchor="start" font-weight="normal" >A6</text>
<text x="625.50" y="520.37" fill="#1a1a1a" stroke="#1a1a1a" stroke-width="0.22" font-size="6.8" font-family='"Liberation Sans", sans-serif' text-anchor="start" font-weight="normal" >SEL</text>
<path d="M616.50,516.30 L621.50,518.50 L616.50,520.70" fill="none" stroke="#000" stroke-width="1"/>
<line x1="559.84" y1="518.50" x2="567.69" y2="518.50" stroke="#800000" stroke-width="1"/>
<line x1="567.69" y1="518.50" x2="606.91" y2="518.50" stroke="#000080" stroke-width="1"/>
<line x1="559.50" y1="514.22" x2="559.50" y2="522.22" stroke="#800000" stroke-width="1"/>
<text x="557.90" y="520.37" fill="#800000" stroke="#800000" stroke-width="0.22" font-size="6.8" font-family='"Liberation Sans", sans-serif' text-anchor="end" font-weight="normal" >SEL</text>
<line x1="606.91" y1="533.50" x2="622.50" y2="533.50" stroke="#000000" stroke-width="1"/>
<text x="609.00" y="531.88" fill="#555" stroke="#555" stroke-width="0.22" font-size="5.2" font-family='"Liberation Sans", sans-serif' text-anchor="start" font-weight="normal" >A5</text>
<text x="625.50" y="536.06" fill="#1a1a1a" stroke="#1a1a1a" stroke-width="0.22" font-size="6.8" font-family='"Liberation Sans", sans-serif' text-anchor="start" font-weight="normal" >OE</text>
<line x1="625.50" y1="529.50" x2="635.50" y2="529.50" stroke="#1a1a1a" stroke-width="0.8"/>
<path d="M616.50,531.30 L621.50,533.50 L616.50,535.70" fill="none" stroke="#000" stroke-width="1"/>
<line x1="536.31" y1="533.50" x2="544.15" y2="533.50" stroke="#800000" stroke-width="1"/>
<line x1="544.15" y1="533.50" x2="606.91" y2="533.50" stroke="#000080" stroke-width="1"/>
<line x1="536.50" y1="529.91" x2="536.50" y2="537.91" stroke="#800000" stroke-width="1"/>
<text x="534.90" y="536.06" fill="#800000" stroke="#800000" stroke-width="0.22" font-size="6.8" font-family='"Liberation Sans", sans-serif' text-anchor="end" font-weight="normal" >/OE</text>
<line x1="606.91" y1="596.50" x2="622.50" y2="596.50" stroke="#000000" stroke-width="1"/>
<text x="609.00" y="594.64" fill="#555" stroke="#555" stroke-width="0.22" font-size="5.2" font-family='"Liberation Sans", sans-serif' text-anchor="start" font-weight="normal" >C3</text>
<text x="625.50" y="598.82" fill="#1a1a1a" stroke="#1a1a1a" stroke-width="0.22" font-size="6.8" font-family='"Liberation Sans", sans-serif' text-anchor="start" font-weight="normal" >NC</text>
<line x1="606.91" y1="604.50" x2="622.50" y2="604.50" stroke="#000000" stroke-width="1"/>
<text x="609.00" y="602.49" fill="#555" stroke="#555" stroke-width="0.22" font-size="5.2" font-family='"Liberation Sans", sans-serif' text-anchor="start" font-weight="normal" >C4</text>
<text x="625.50" y="606.66" fill="#1a1a1a" stroke="#1a1a1a" stroke-width="0.22" font-size="6.8" font-family='"Liberation Sans", sans-serif' text-anchor="start" font-weight="normal" >NC</text>
<path d="M604.9,594.5L608.9,598.5M604.9,598.5L608.9,594.5" stroke="#e00000" stroke-width="0.9" stroke-dasharray="1 1"/>
<path d="M604.9,602.5L608.9,606.5M604.9,606.5L608.9,602.5" stroke="#e00000" stroke-width="0.9" stroke-dasharray="1 1"/>
<line x1="707.50" y1="353.50" x2="724.59" y2="353.50" stroke="#000000" stroke-width="1"/>
<text x="715.00" y="351.45" fill="#555" stroke="#555" stroke-width="0.22" font-size="5.2" font-family='"Liberation Sans", sans-serif' text-anchor="start" font-weight="normal" >F4</text>
<text x="704.50" y="355.62" fill="#1a1a1a" stroke="#1a1a1a" stroke-width="0.22" font-size="6.8" font-family='"Liberation Sans", sans-serif' text-anchor="end" font-weight="normal" >CLKAP</text>
<path d="M711.00,353.50 L714.50,351.20 L714.50,355.80 Z M715.10,350.90 L716.30,350.90 L716.30,356.10 L715.10,356.10 Z M718.30,353.50 L716.30,351.50 L716.30,355.50 Z" fill="#000" stroke="#000" stroke-width="0.5"/>
<line x1="724.59" y1="353.50" x2="763.81" y2="353.50" stroke="#000080" stroke-width="1"/>
<line x1="763.81" y1="353.50" x2="771.66" y2="353.50" stroke="#800000" stroke-width="1"/>
<line x1="771.50" y1="349.48" x2="771.50" y2="357.48" stroke="#800000" stroke-width="1"/>
<text x="773.30" y="355.62" fill="#800000" stroke="#800000" stroke-width="0.22" font-size="6.8" font-family='"Liberation Sans", sans-serif' text-anchor="start" font-weight="normal" >CLKAP</text>
<line x1="707.50" y1="361.50" x2="724.59" y2="361.50" stroke="#000000" stroke-width="1"/>
<text x="715.00" y="359.29" fill="#555" stroke="#555" stroke-width="0.22" font-size="5.2" font-family='"Liberation Sans", sans-serif' text-anchor="start" font-weight="normal" >F3</text>
<text x="704.50" y="363.47" fill="#1a1a1a" stroke="#1a1a1a" stroke-width="0.22" font-size="6.8" font-family='"Liberation Sans", sans-serif' text-anchor="end" font-weight="normal" >CLKAN</text>
<path d="M711.00,361.50 L714.50,359.20 L714.50,363.80 Z M715.10,358.90 L716.30,358.90 L716.30,364.10 L715.10,364.10 Z M718.30,361.50 L716.30,359.50 L716.30,363.50 Z" fill="#000" stroke="#000" stroke-width="0.5"/>
<line x1="724.59" y1="361.50" x2="787.35" y2="361.50" stroke="#000080" stroke-width="1"/>
<line x1="787.35" y1="361.50" x2="795.19" y2="361.50" stroke="#800000" stroke-width="1"/>
<line x1="795.50" y1="357.32" x2="795.50" y2="365.32" stroke="#800000" stroke-width="1"/>
<text x="797.30" y="363.47" fill="#800000" stroke="#800000" stroke-width="0.22" font-size="6.8" font-family='"Liberation Sans", sans-serif' text-anchor="start" font-weight="normal" >CLKAN</text>
<line x1="707.50" y1="377.50" x2="724.59" y2="377.50" stroke="#000000" stroke-width="1"/>
<text x="715.00" y="374.98" fill="#555" stroke="#555" stroke-width="0.22" font-size="5.2" font-family='"Liberation Sans", sans-serif' text-anchor="start" font-weight="normal" >E4</text>
<text x="704.50" y="379.16" fill="#1a1a1a" stroke="#1a1a1a" stroke-width="0.22" font-size="6.8" font-family='"Liberation Sans", sans-serif' text-anchor="end" font-weight="normal" >DA1P</text>
<path d="M711.00,377.50 L714.50,375.20 L714.50,379.80 Z M715.10,374.90 L716.30,374.90 L716.30,380.10 L715.10,380.10 Z M718.30,377.50 L716.30,375.50 L716.30,379.50 Z" fill="#000" stroke="#000" stroke-width="0.5"/>
<line x1="724.59" y1="377.50" x2="763.81" y2="377.50" stroke="#000080" stroke-width="1"/>
<line x1="763.81" y1="377.50" x2="771.66" y2="377.50" stroke="#800000" stroke-width="1"/>
<line x1="771.50" y1="373.01" x2="771.50" y2="381.01" stroke="#800000" stroke-width="1"/>
<text x="773.30" y="379.16" fill="#800000" stroke="#800000" stroke-width="0.22" font-size="6.8" font-family='"Liberation Sans", sans-serif' text-anchor="start" font-weight="normal" >DA1P</text>
<line x1="707.50" y1="384.50" x2="724.59" y2="384.50" stroke="#000000" stroke-width="1"/>
<text x="715.00" y="382.83" fill="#555" stroke="#555" stroke-width="0.22" font-size="5.2" font-family='"Liberation Sans", sans-serif' text-anchor="start" font-weight="normal" >E3</text>
<text x="704.50" y="387.00" fill="#1a1a1a" stroke="#1a1a1a" stroke-width="0.22" font-size="6.8" font-family='"Liberation Sans", sans-serif' text-anchor="end" font-weight="normal" >DA1N</text>
<path d="M711.00,384.50 L714.50,382.20 L714.50,386.80 Z M715.10,381.90 L716.30,381.90 L716.30,387.10 L715.10,387.10 Z M718.30,384.50 L716.30,382.50 L716.30,386.50 Z" fill="#000" stroke="#000" stroke-width="0.5"/>
<line x1="724.59" y1="384.50" x2="787.35" y2="384.50" stroke="#000080" stroke-width="1"/>
<line x1="787.35" y1="384.50" x2="795.19" y2="384.50" stroke="#800000" stroke-width="1"/>
<line x1="795.50" y1="380.86" x2="795.50" y2="388.86" stroke="#800000" stroke-width="1"/>
<text x="797.30" y="387.00" fill="#800000" stroke="#800000" stroke-width="0.22" font-size="6.8" font-family='"Liberation Sans", sans-serif' text-anchor="start" font-weight="normal" >DA1N</text>
<line x1="707.50" y1="400.50" x2="724.59" y2="400.50" stroke="#000000" stroke-width="1"/>
<text x="715.00" y="398.52" fill="#555" stroke="#555" stroke-width="0.22" font-size="5.2" font-family='"Liberation Sans", sans-serif' text-anchor="start" font-weight="normal" >D4</text>
<text x="704.50" y="402.69" fill="#1a1a1a" stroke="#1a1a1a" stroke-width="0.22" font-size="6.8" font-family='"Liberation Sans", sans-serif' text-anchor="end" font-weight="normal" >DA2P</text>
<path d="M711.00,400.50 L714.50,398.20 L714.50,402.80 Z M715.10,397.90 L716.30,397.90 L716.30,403.10 L715.10,403.10 Z M718.30,400.50 L716.30,398.50 L716.30,402.50 Z" fill="#000" stroke="#000" stroke-width="0.5"/>
<line x1="724.59" y1="400.50" x2="763.81" y2="400.50" stroke="#000080" stroke-width="1"/>
<line x1="763.81" y1="400.50" x2="771.66" y2="400.50" stroke="#800000" stroke-width="1"/>
<line x1="771.50" y1="396.54" x2="771.50" y2="404.54" stroke="#800000" stroke-width="1"/>
<text x="773.30" y="402.69" fill="#800000" stroke="#800000" stroke-width="0.22" font-size="6.8" font-family='"Liberation Sans", sans-serif' text-anchor="start" font-weight="normal" >DA2P</text>
<line x1="707.50" y1="408.50" x2="724.59" y2="408.50" stroke="#000000" stroke-width="1"/>
<text x="715.00" y="406.36" fill="#555" stroke="#555" stroke-width="0.22" font-size="5.2" font-family='"Liberation Sans", sans-serif' text-anchor="start" font-weight="normal" >D3</text>
<text x="704.50" y="410.54" fill="#1a1a1a" stroke="#1a1a1a" stroke-width="0.22" font-size="6.8" font-family='"Liberation Sans", sans-serif' text-anchor="end" font-weight="normal" >DA2N</text>
<path d="M711.00,408.50 L714.50,406.20 L714.50,410.80 Z M715.10,405.90 L716.30,405.90 L716.30,411.10 L715.10,411.10 Z M718.30,408.50 L716.30,406.50 L716.30,410.50 Z" fill="#000" stroke="#000" stroke-width="0.5"/>
<line x1="724.59" y1="408.50" x2="787.35" y2="408.50" stroke="#000080" stroke-width="1"/>
<line x1="787.35" y1="408.50" x2="795.19" y2="408.50" stroke="#800000" stroke-width="1"/>
<line x1="795.50" y1="404.39" x2="795.50" y2="412.39" stroke="#800000" stroke-width="1"/>
<text x="797.30" y="410.54" fill="#800000" stroke="#800000" stroke-width="0.22" font-size="6.8" font-family='"Liberation Sans", sans-serif' text-anchor="start" font-weight="normal" >DA2N</text>
<line x1="707.50" y1="424.50" x2="724.59" y2="424.50" stroke="#000000" stroke-width="1"/>
<text x="715.00" y="422.05" fill="#555" stroke="#555" stroke-width="0.22" font-size="5.2" font-family='"Liberation Sans", sans-serif' text-anchor="start" font-weight="normal" >B4</text>
<text x="704.50" y="426.23" fill="#1a1a1a" stroke="#1a1a1a" stroke-width="0.22" font-size="6.8" font-family='"Liberation Sans", sans-serif' text-anchor="end" font-weight="normal" >DA3P</text>
<path d="M711.00,424.50 L714.50,422.20 L714.50,426.80 Z M715.10,421.90 L716.30,421.90 L716.30,427.10 L715.10,427.10 Z M718.30,424.50 L716.30,422.50 L716.30,426.50 Z" fill="#000" stroke="#000" stroke-width="0.5"/>
<line x1="724.59" y1="424.50" x2="763.81" y2="424.50" stroke="#000080" stroke-width="1"/>
<line x1="763.81" y1="424.50" x2="771.66" y2="424.50" stroke="#800000" stroke-width="1"/>
<line x1="771.50" y1="420.08" x2="771.50" y2="428.08" stroke="#800000" stroke-width="1"/>
<text x="773.30" y="426.23" fill="#800000" stroke="#800000" stroke-width="0.22" font-size="6.8" font-family='"Liberation Sans", sans-serif' text-anchor="start" font-weight="normal" >DA3P</text>
<line x1="707.50" y1="431.50" x2="724.59" y2="431.50" stroke="#000000" stroke-width="1"/>
<text x="715.00" y="429.90" fill="#555" stroke="#555" stroke-width="0.22" font-size="5.2" font-family='"Liberation Sans", sans-serif' text-anchor="start" font-weight="normal" >B3</text>
<text x="704.50" y="434.07" fill="#1a1a1a" stroke="#1a1a1a" stroke-width="0.22" font-size="6.8" font-family='"Liberation Sans", sans-serif' text-anchor="end" font-weight="normal" >DA3N</text>
<path d="M711.00,431.50 L714.50,429.20 L714.50,433.80 Z M715.10,428.90 L716.30,428.90 L716.30,434.10 L715.10,434.10 Z M718.30,431.50 L716.30,429.50 L716.30,433.50 Z" fill="#000" stroke="#000" stroke-width="0.5"/>
<line x1="724.59" y1="431.50" x2="787.35" y2="431.50" stroke="#000080" stroke-width="1"/>
<line x1="787.35" y1="431.50" x2="795.19" y2="431.50" stroke="#800000" stroke-width="1"/>
<line x1="795.50" y1="427.92" x2="795.50" y2="435.92" stroke="#800000" stroke-width="1"/>
<text x="797.30" y="434.07" fill="#800000" stroke="#800000" stroke-width="0.22" font-size="6.8" font-family='"Liberation Sans", sans-serif' text-anchor="start" font-weight="normal" >DA3N</text>
<line x1="707.50" y1="447.50" x2="724.59" y2="447.50" stroke="#000000" stroke-width="1"/>
<text x="715.00" y="445.59" fill="#555" stroke="#555" stroke-width="0.22" font-size="5.2" font-family='"Liberation Sans", sans-serif' text-anchor="start" font-weight="normal" >A4</text>
<text x="704.50" y="449.76" fill="#1a1a1a" stroke="#1a1a1a" stroke-width="0.22" font-size="6.8" font-family='"Liberation Sans", sans-serif' text-anchor="end" font-weight="normal" >DA4P</text>
<path d="M711.00,447.50 L714.50,445.20 L714.50,449.80 Z M715.10,444.90 L716.30,444.90 L716.30,450.10 L715.10,450.10 Z M718.30,447.50 L716.30,445.50 L716.30,449.50 Z" fill="#000" stroke="#000" stroke-width="0.5"/>
<line x1="724.59" y1="447.50" x2="763.81" y2="447.50" stroke="#000080" stroke-width="1"/>
<line x1="763.81" y1="447.50" x2="771.66" y2="447.50" stroke="#800000" stroke-width="1"/>
<line x1="771.50" y1="443.62" x2="771.50" y2="451.62" stroke="#800000" stroke-width="1"/>
<text x="773.30" y="449.76" fill="#800000" stroke="#800000" stroke-width="0.22" font-size="6.8" font-family='"Liberation Sans", sans-serif' text-anchor="start" font-weight="normal" >DA4P</text>
<line x1="707.50" y1="455.50" x2="724.59" y2="455.50" stroke="#000000" stroke-width="1"/>
<text x="715.00" y="453.43" fill="#555" stroke="#555" stroke-width="0.22" font-size="5.2" font-family='"Liberation Sans", sans-serif' text-anchor="start" font-weight="normal" >A3</text>
<text x="704.50" y="457.61" fill="#1a1a1a" stroke="#1a1a1a" stroke-width="0.22" font-size="6.8" font-family='"Liberation Sans", sans-serif' text-anchor="end" font-weight="normal" >DA4N</text>
<path d="M711.00,455.50 L714.50,453.20 L714.50,457.80 Z M715.10,452.90 L716.30,452.90 L716.30,458.10 L715.10,458.10 Z M718.30,455.50 L716.30,453.50 L716.30,457.50 Z" fill="#000" stroke="#000" stroke-width="0.5"/>
<line x1="724.59" y1="455.50" x2="787.35" y2="455.50" stroke="#000080" stroke-width="1"/>
<line x1="787.35" y1="455.50" x2="795.19" y2="455.50" stroke="#800000" stroke-width="1"/>
<line x1="795.50" y1="451.46" x2="795.50" y2="459.46" stroke="#800000" stroke-width="1"/>
<text x="797.30" y="457.61" fill="#800000" stroke="#800000" stroke-width="0.22" font-size="6.8" font-family='"Liberation Sans", sans-serif' text-anchor="start" font-weight="normal" >DA4N</text>
<line x1="707.50" y1="478.50" x2="724.59" y2="478.50" stroke="#000000" stroke-width="1"/>
<text x="715.00" y="476.97" fill="#555" stroke="#555" stroke-width="0.22" font-size="5.2" font-family='"Liberation Sans", sans-serif' text-anchor="start" font-weight="normal" >F2</text>
<text x="704.50" y="481.14" fill="#1a1a1a" stroke="#1a1a1a" stroke-width="0.22" font-size="6.8" font-family='"Liberation Sans", sans-serif' text-anchor="end" font-weight="normal" >CLKBP</text>
<path d="M711.00,478.50 L714.50,476.20 L714.50,480.80 Z M715.10,475.90 L716.30,475.90 L716.30,481.10 L715.10,481.10 Z M718.30,478.50 L716.30,476.50 L716.30,480.50 Z" fill="#000" stroke="#000" stroke-width="0.5"/>
<line x1="724.59" y1="478.50" x2="763.81" y2="478.50" stroke="#000080" stroke-width="1"/>
<line x1="763.81" y1="478.50" x2="771.66" y2="478.50" stroke="#800000" stroke-width="1"/>
<line x1="771.50" y1="475.00" x2="771.50" y2="483.00" stroke="#800000" stroke-width="1"/>
<text x="773.30" y="481.14" fill="#800000" stroke="#800000" stroke-width="0.22" font-size="6.8" font-family='"Liberation Sans", sans-serif' text-anchor="start" font-weight="normal" >CLKBP</text>
<line x1="707.50" y1="486.50" x2="724.59" y2="486.50" stroke="#000000" stroke-width="1"/>
<text x="715.00" y="484.81" fill="#555" stroke="#555" stroke-width="0.22" font-size="5.2" font-family='"Liberation Sans", sans-serif' text-anchor="start" font-weight="normal" >F1</text>
<text x="704.50" y="488.99" fill="#1a1a1a" stroke="#1a1a1a" stroke-width="0.22" font-size="6.8" font-family='"Liberation Sans", sans-serif' text-anchor="end" font-weight="normal" >CLKBN</text>
<path d="M711.00,486.50 L714.50,484.20 L714.50,488.80 Z M715.10,483.90 L716.30,483.90 L716.30,489.10 L715.10,489.10 Z M718.30,486.50 L716.30,484.50 L716.30,488.50 Z" fill="#000" stroke="#000" stroke-width="0.5"/>
<line x1="724.59" y1="486.50" x2="787.35" y2="486.50" stroke="#000080" stroke-width="1"/>
<line x1="787.35" y1="486.50" x2="795.19" y2="486.50" stroke="#800000" stroke-width="1"/>
<line x1="795.50" y1="482.84" x2="795.50" y2="490.84" stroke="#800000" stroke-width="1"/>
<text x="797.30" y="488.99" fill="#800000" stroke="#800000" stroke-width="0.22" font-size="6.8" font-family='"Liberation Sans", sans-serif' text-anchor="start" font-weight="normal" >CLKBN</text>
<line x1="707.50" y1="502.50" x2="724.59" y2="502.50" stroke="#000000" stroke-width="1"/>
<text x="715.00" y="500.50" fill="#555" stroke="#555" stroke-width="0.22" font-size="5.2" font-family='"Liberation Sans", sans-serif' text-anchor="start" font-weight="normal" >E2</text>
<text x="704.50" y="504.68" fill="#1a1a1a" stroke="#1a1a1a" stroke-width="0.22" font-size="6.8" font-family='"Liberation Sans", sans-serif' text-anchor="end" font-weight="normal" >DB1P</text>
<path d="M711.00,502.50 L714.50,500.20 L714.50,504.80 Z M715.10,499.90 L716.30,499.90 L716.30,505.10 L715.10,505.10 Z M718.30,502.50 L716.30,500.50 L716.30,504.50 Z" fill="#000" stroke="#000" stroke-width="0.5"/>
<line x1="724.59" y1="502.50" x2="763.81" y2="502.50" stroke="#000080" stroke-width="1"/>
<line x1="763.81" y1="502.50" x2="771.66" y2="502.50" stroke="#800000" stroke-width="1"/>
<line x1="771.50" y1="498.53" x2="771.50" y2="506.53" stroke="#800000" stroke-width="1"/>
<text x="773.30" y="504.68" fill="#800000" stroke="#800000" stroke-width="0.22" font-size="6.8" font-family='"Liberation Sans", sans-serif' text-anchor="start" font-weight="normal" >DB1P</text>
<line x1="707.50" y1="510.50" x2="724.59" y2="510.50" stroke="#000000" stroke-width="1"/>
<text x="715.00" y="508.35" fill="#555" stroke="#555" stroke-width="0.22" font-size="5.2" font-family='"Liberation Sans", sans-serif' text-anchor="start" font-weight="normal" >E1</text>
<text x="704.50" y="512.52" fill="#1a1a1a" stroke="#1a1a1a" stroke-width="0.22" font-size="6.8" font-family='"Liberation Sans", sans-serif' text-anchor="end" font-weight="normal" >DB1N</text>
<path d="M711.00,510.50 L714.50,508.20 L714.50,512.80 Z M715.10,507.90 L716.30,507.90 L716.30,513.10 L715.10,513.10 Z M718.30,510.50 L716.30,508.50 L716.30,512.50 Z" fill="#000" stroke="#000" stroke-width="0.5"/>
<line x1="724.59" y1="510.50" x2="787.35" y2="510.50" stroke="#000080" stroke-width="1"/>
<line x1="787.35" y1="510.50" x2="795.19" y2="510.50" stroke="#800000" stroke-width="1"/>
<line x1="795.50" y1="506.38" x2="795.50" y2="514.38" stroke="#800000" stroke-width="1"/>
<text x="797.30" y="512.52" fill="#800000" stroke="#800000" stroke-width="0.22" font-size="6.8" font-family='"Liberation Sans", sans-serif' text-anchor="start" font-weight="normal" >DB1N</text>
<line x1="707.50" y1="526.50" x2="724.59" y2="526.50" stroke="#000000" stroke-width="1"/>
<text x="715.00" y="524.04" fill="#555" stroke="#555" stroke-width="0.22" font-size="5.2" font-family='"Liberation Sans", sans-serif' text-anchor="start" font-weight="normal" >D2</text>
<text x="704.50" y="528.21" fill="#1a1a1a" stroke="#1a1a1a" stroke-width="0.22" font-size="6.8" font-family='"Liberation Sans", sans-serif' text-anchor="end" font-weight="normal" >DB2P</text>
<path d="M711.00,526.50 L714.50,524.20 L714.50,528.80 Z M715.10,523.90 L716.30,523.90 L716.30,529.10 L715.10,529.10 Z M718.30,526.50 L716.30,524.50 L716.30,528.50 Z" fill="#000" stroke="#000" stroke-width="0.5"/>
<line x1="724.59" y1="526.50" x2="763.81" y2="526.50" stroke="#000080" stroke-width="1"/>
<line x1="763.81" y1="526.50" x2="771.66" y2="526.50" stroke="#800000" stroke-width="1"/>
<line x1="771.50" y1="522.06" x2="771.50" y2="530.06" stroke="#800000" stroke-width="1"/>
<text x="773.30" y="528.21" fill="#800000" stroke="#800000" stroke-width="0.22" font-size="6.8" font-family='"Liberation Sans", sans-serif' text-anchor="start" font-weight="normal" >DB2P</text>
<line x1="707.50" y1="533.50" x2="724.59" y2="533.50" stroke="#000000" stroke-width="1"/>
<text x="715.00" y="531.88" fill="#555" stroke="#555" stroke-width="0.22" font-size="5.2" font-family='"Liberation Sans", sans-serif' text-anchor="start" font-weight="normal" >D1</text>
<text x="704.50" y="536.06" fill="#1a1a1a" stroke="#1a1a1a" stroke-width="0.22" font-size="6.8" font-family='"Liberation Sans", sans-serif' text-anchor="end" font-weight="normal" >DB2N</text>
<path d="M711.00,533.50 L714.50,531.20 L714.50,535.80 Z M715.10,530.90 L716.30,530.90 L716.30,536.10 L715.10,536.10 Z M718.30,533.50 L716.30,531.50 L716.30,535.50 Z" fill="#000" stroke="#000" stroke-width="0.5"/>
<line x1="724.59" y1="533.50" x2="787.35" y2="533.50" stroke="#000080" stroke-width="1"/>
<line x1="787.35" y1="533.50" x2="795.19" y2="533.50" stroke="#800000" stroke-width="1"/>
<line x1="795.50" y1="529.91" x2="795.50" y2="537.91" stroke="#800000" stroke-width="1"/>
<text x="797.30" y="536.06" fill="#800000" stroke="#800000" stroke-width="0.22" font-size="6.8" font-family='"Liberation Sans", sans-serif' text-anchor="start" font-weight="normal" >DB2N</text>
<line x1="707.50" y1="549.50" x2="724.59" y2="549.50" stroke="#000000" stroke-width="1"/>
<text x="715.00" y="547.57" fill="#555" stroke="#555" stroke-width="0.22" font-size="5.2" font-family='"Liberation Sans", sans-serif' text-anchor="start" font-weight="normal" >C2</text>
<text x="704.50" y="551.75" fill="#1a1a1a" stroke="#1a1a1a" stroke-width="0.22" font-size="6.8" font-family='"Liberation Sans", sans-serif' text-anchor="end" font-weight="normal" >DB3P</text>
<path d="M711.00,549.50 L714.50,547.20 L714.50,551.80 Z M715.10,546.90 L716.30,546.90 L716.30,552.10 L715.10,552.10 Z M718.30,549.50 L716.30,547.50 L716.30,551.50 Z" fill="#000" stroke="#000" stroke-width="0.5"/>
<line x1="724.59" y1="549.50" x2="763.81" y2="549.50" stroke="#000080" stroke-width="1"/>
<line x1="763.81" y1="549.50" x2="771.66" y2="549.50" stroke="#800000" stroke-width="1"/>
<line x1="771.50" y1="545.60" x2="771.50" y2="553.60" stroke="#800000" stroke-width="1"/>
<text x="773.30" y="551.75" fill="#800000" stroke="#800000" stroke-width="0.22" font-size="6.8" font-family='"Liberation Sans", sans-serif' text-anchor="start" font-weight="normal" >DB3P</text>
<line x1="707.50" y1="557.50" x2="724.59" y2="557.50" stroke="#000000" stroke-width="1"/>
<text x="715.00" y="555.42" fill="#555" stroke="#555" stroke-width="0.22" font-size="5.2" font-family='"Liberation Sans", sans-serif' text-anchor="start" font-weight="normal" >C1</text>
<text x="704.50" y="559.59" fill="#1a1a1a" stroke="#1a1a1a" stroke-width="0.22" font-size="6.8" font-family='"Liberation Sans", sans-serif' text-anchor="end" font-weight="normal" >DB3N</text>
<path d="M711.00,557.50 L714.50,555.20 L714.50,559.80 Z M715.10,554.90 L716.30,554.90 L716.30,560.10 L715.10,560.10 Z M718.30,557.50 L716.30,555.50 L716.30,559.50 Z" fill="#000" stroke="#000" stroke-width="0.5"/>
<line x1="724.59" y1="557.50" x2="787.35" y2="557.50" stroke="#000080" stroke-width="1"/>
<line x1="787.35" y1="557.50" x2="795.19" y2="557.50" stroke="#800000" stroke-width="1"/>
<line x1="795.50" y1="553.44" x2="795.50" y2="561.44" stroke="#800000" stroke-width="1"/>
<text x="797.30" y="559.59" fill="#800000" stroke="#800000" stroke-width="0.22" font-size="6.8" font-family='"Liberation Sans", sans-serif' text-anchor="start" font-weight="normal" >DB3N</text>
<line x1="707.50" y1="573.50" x2="724.59" y2="573.50" stroke="#000000" stroke-width="1"/>
<text x="715.00" y="571.11" fill="#555" stroke="#555" stroke-width="0.22" font-size="5.2" font-family='"Liberation Sans", sans-serif' text-anchor="start" font-weight="normal" >B2</text>
<text x="704.50" y="575.28" fill="#1a1a1a" stroke="#1a1a1a" stroke-width="0.22" font-size="6.8" font-family='"Liberation Sans", sans-serif' text-anchor="end" font-weight="normal" >DB4P</text>
<path d="M711.00,573.50 L714.50,571.20 L714.50,575.80 Z M715.10,570.90 L716.30,570.90 L716.30,576.10 L715.10,576.10 Z M718.30,573.50 L716.30,571.50 L716.30,575.50 Z" fill="#000" stroke="#000" stroke-width="0.5"/>
<line x1="724.59" y1="573.50" x2="763.81" y2="573.50" stroke="#000080" stroke-width="1"/>
<line x1="763.81" y1="573.50" x2="771.66" y2="573.50" stroke="#800000" stroke-width="1"/>
<line x1="771.50" y1="569.13" x2="771.50" y2="577.13" stroke="#800000" stroke-width="1"/>
<text x="773.30" y="575.28" fill="#800000" stroke="#800000" stroke-width="0.22" font-size="6.8" font-family='"Liberation Sans", sans-serif' text-anchor="start" font-weight="normal" >DB4P</text>
<line x1="707.50" y1="580.50" x2="724.59" y2="580.50" stroke="#000000" stroke-width="1"/>
<text x="715.00" y="578.95" fill="#555" stroke="#555" stroke-width="0.22" font-size="5.2" font-family='"Liberation Sans", sans-serif' text-anchor="start" font-weight="normal" >B1</text>
<text x="704.50" y="583.13" fill="#1a1a1a" stroke="#1a1a1a" stroke-width="0.22" font-size="6.8" font-family='"Liberation Sans", sans-serif' text-anchor="end" font-weight="normal" >DB4N</text>
<path d="M711.00,580.50 L714.50,578.20 L714.50,582.80 Z M715.10,577.90 L716.30,577.90 L716.30,583.10 L715.10,583.10 Z M718.30,580.50 L716.30,578.50 L716.30,582.50 Z" fill="#000" stroke="#000" stroke-width="0.5"/>
<line x1="724.59" y1="580.50" x2="787.35" y2="580.50" stroke="#000080" stroke-width="1"/>
<line x1="787.35" y1="580.50" x2="795.19" y2="580.50" stroke="#800000" stroke-width="1"/>
<line x1="795.50" y1="576.98" x2="795.50" y2="584.98" stroke="#800000" stroke-width="1"/>
<text x="797.30" y="583.13" fill="#800000" stroke="#800000" stroke-width="0.22" font-size="6.8" font-family='"Liberation Sans", sans-serif' text-anchor="start" font-weight="normal" >DB4N</text>
<line x1="707.50" y1="604.50" x2="724.59" y2="604.50" stroke="#000000" stroke-width="1"/>
<text x="715.00" y="602.49" fill="#555" stroke="#555" stroke-width="0.22" font-size="5.2" font-family='"Liberation Sans", sans-serif' text-anchor="start" font-weight="normal" >A2</text>
<text x="704.50" y="606.66" fill="#1a1a1a" stroke="#1a1a1a" stroke-width="0.22" font-size="6.8" font-family='"Liberation Sans", sans-serif' text-anchor="end" font-weight="normal" >GND</text>
<line x1="724.50" y1="604.51" x2="724.50" y2="613.51" stroke="#000080" stroke-width="1"/>
<line x1="724.50" y1="613.51" x2="724.50" y2="620.20" stroke="#800000" stroke-width="1"/>
<circle cx="724.50" cy="604.50" r="1.6" fill="#000080"/>
<line x1="717.00" y1="620.50" x2="732.50" y2="620.50" stroke="#800000" stroke-width="1"/>
<line x1="719.50" y1="622.50" x2="730.00" y2="622.50" stroke="#800000" stroke-width="1"/>
<line x1="722.00" y1="624.50" x2="727.50" y2="624.50" stroke="#800000" stroke-width="1"/>
<rect x="724.00" y="626.00" width="1" height="1" fill="#800000"/>
<text x="724.50" y="633.55" fill="#800000" stroke="#800000" stroke-width="0.22" font-size="6.8" font-family='"Liberation Sans", sans-serif' text-anchor="middle" font-weight="normal" >GND</text>
<line x1="497.08" y1="769.50" x2="638.29" y2="769.50" stroke="#000080" stroke-width="1"/>
<line x1="638.50" y1="769.26" x2="638.50" y2="777.10" stroke="#800000" stroke-width="1"/>
<line x1="631.00" y1="777.50" x2="646.50" y2="777.50" stroke="#800000" stroke-width="1"/>
<line x1="633.50" y1="779.50" x2="644.00" y2="779.50" stroke="#800000" stroke-width="1"/>
<line x1="636.00" y1="781.50" x2="641.50" y2="781.50" stroke="#800000" stroke-width="1"/>
<rect x="638.00" y="783.00" width="1" height="1" fill="#800000"/>
<text x="638.50" y="790.45" fill="#800000" stroke="#800000" stroke-width="0.22" font-size="6.8" font-family='"Liberation Sans", sans-serif' text-anchor="middle" font-weight="normal" >GND</text>
<line x1="497.50" y1="760.96" x2="497.50" y2="769.26" stroke="#000000" stroke-width="1"/>
<circle cx="497.50" cy="758.26" r="2.6" fill="#fff" stroke="#000" stroke-width="1"/>
<text x="494.70" y="753.37" fill="#2e2ea0" stroke="#2e2ea0" stroke-width="0.15" font-size="7.6" font-family='"Liberation Serif", serif' text-anchor="start" font-weight="normal" textLength="15.28" lengthAdjust="spacingAndGlyphs">TP44</text>
<text x="494.50" y="776.44" fill="#3a3a3a" stroke="#3a3a3a" stroke-width="0.22" font-size="6.6" font-family='"Liberation Sans", sans-serif' text-anchor="start" font-weight="normal" >5015</text>
<line x1="528.50" y1="760.96" x2="528.50" y2="769.26" stroke="#000000" stroke-width="1"/>
<circle cx="528.50" cy="758.26" r="2.6" fill="#fff" stroke="#000" stroke-width="1"/>
<text x="525.70" y="753.37" fill="#2e2ea0" stroke="#2e2ea0" stroke-width="0.15" font-size="7.6" font-family='"Liberation Serif", serif' text-anchor="start" font-weight="normal" textLength="15.28" lengthAdjust="spacingAndGlyphs">TP43</text>
<text x="525.50" y="776.44" fill="#3a3a3a" stroke="#3a3a3a" stroke-width="0.22" font-size="6.6" font-family='"Liberation Sans", sans-serif' text-anchor="start" font-weight="normal" >5015</text>
<circle cx="528.50" cy="769.50" r="1.6" fill="#000080"/>
<line x1="552.50" y1="760.96" x2="552.50" y2="769.26" stroke="#000000" stroke-width="1"/>
<circle cx="552.50" cy="758.26" r="2.6" fill="#fff" stroke="#000" stroke-width="1"/>
<text x="549.70" y="753.37" fill="#2e2ea0" stroke="#2e2ea0" stroke-width="0.15" font-size="7.6" font-family='"Liberation Serif", serif' text-anchor="start" font-weight="normal" textLength="15.28" lengthAdjust="spacingAndGlyphs">TP35</text>
<text x="549.50" y="776.44" fill="#3a3a3a" stroke="#3a3a3a" stroke-width="0.22" font-size="6.6" font-family='"Liberation Sans", sans-serif' text-anchor="start" font-weight="normal" >5015</text>
<circle cx="552.50" cy="769.50" r="1.6" fill="#000080"/>
<line x1="575.50" y1="760.96" x2="575.50" y2="769.26" stroke="#000000" stroke-width="1"/>
<circle cx="575.50" cy="758.26" r="2.6" fill="#fff" stroke="#000" stroke-width="1"/>
<text x="572.70" y="753.37" fill="#2e2ea0" stroke="#2e2ea0" stroke-width="0.15" font-size="7.6" font-family='"Liberation Serif", serif' text-anchor="start" font-weight="normal" textLength="15.28" lengthAdjust="spacingAndGlyphs">TP36</text>
<text x="572.50" y="776.44" fill="#3a3a3a" stroke="#3a3a3a" stroke-width="0.22" font-size="6.6" font-family='"Liberation Sans", sans-serif' text-anchor="start" font-weight="normal" >5015</text>
<circle cx="575.50" cy="769.50" r="1.6" fill="#000080"/>
<line x1="599.50" y1="760.96" x2="599.50" y2="769.26" stroke="#000000" stroke-width="1"/>
<circle cx="599.50" cy="758.26" r="2.6" fill="#fff" stroke="#000" stroke-width="1"/>
<text x="596.70" y="753.37" fill="#2e2ea0" stroke="#2e2ea0" stroke-width="0.15" font-size="7.6" font-family='"Liberation Serif", serif' text-anchor="start" font-weight="normal" textLength="15.28" lengthAdjust="spacingAndGlyphs">TP37</text>
<text x="596.50" y="776.44" fill="#3a3a3a" stroke="#3a3a3a" stroke-width="0.22" font-size="6.6" font-family='"Liberation Sans", sans-serif' text-anchor="start" font-weight="normal" >5015</text>
<circle cx="599.50" cy="769.50" r="1.6" fill="#000080"/>
<line x1="622.50" y1="760.96" x2="622.50" y2="769.26" stroke="#000000" stroke-width="1"/>
<circle cx="622.50" cy="758.26" r="2.6" fill="#fff" stroke="#000" stroke-width="1"/>
<text x="619.70" y="753.37" fill="#2e2ea0" stroke="#2e2ea0" stroke-width="0.15" font-size="7.6" font-family='"Liberation Serif", serif' text-anchor="start" font-weight="normal" textLength="15.28" lengthAdjust="spacingAndGlyphs">TP38</text>
<text x="619.50" y="776.44" fill="#3a3a3a" stroke="#3a3a3a" stroke-width="0.22" font-size="6.6" font-family='"Liberation Sans", sans-serif' text-anchor="start" font-weight="normal" >5015</text>
<circle cx="622.50" cy="769.50" r="1.6" fill="#000080"/>
<rect x="1235.5" y="801" width="85" height="31" fill="#fff"/>
<line x1="912.50" y1="800.50" x2="1319.50" y2="800.50" stroke="#000" stroke-width="1.2"/>
<line x1="912.50" y1="800.50" x2="912.50" y2="846.50" stroke="#000" stroke-width="1.2"/>
<line x1="1030.50" y1="800.50" x2="1030.50" y2="846.50" stroke="#000" stroke-width="1.2"/>
<line x1="912.50" y1="808.50" x2="1234.50" y2="808.50" stroke="#000" stroke-width="1.1"/>
<line x1="912.50" y1="816.50" x2="1234.50" y2="816.50" stroke="#000" stroke-width="1.1"/>
<line x1="912.50" y1="824.50" x2="1234.50" y2="824.50" stroke="#000" stroke-width="1.1"/>
<line x1="912.50" y1="832.50" x2="1234.50" y2="832.50" stroke="#000" stroke-width="1.1"/>
<line x1="912.50" y1="839.50" x2="1319.50" y2="839.50" stroke="#000" stroke-width="1.1"/>
<line x1="1234.50" y1="800.50" x2="1234.50" y2="839.50" stroke="#000" stroke-width="1.1"/>
<line x1="1155.50" y1="800.50" x2="1155.50" y2="808.50" stroke="#000" stroke-width="1.1"/>
<line x1="991.50" y1="816.50" x2="991.50" y2="824.50" stroke="#000" stroke-width="1.1"/>
<line x1="1180.50" y1="824.50" x2="1180.50" y2="832.50" stroke="#000" stroke-width="1.1"/>
<line x1="1195.50" y1="832.50" x2="1195.50" y2="839.50" stroke="#000" stroke-width="1.1"/>
<line x1="324.50" y1="824.50" x2="912.50" y2="824.50" stroke="#000" stroke-width="1.1"/>
<line x1="324.50" y1="824.50" x2="324.50" y2="846.50" stroke="#000" stroke-width="1.1"/>
<text x="915.00" y="806.62" fill="#1a1a1a" stroke="#1a1a1a" stroke-width="0.22" font-size="7.0" font-family='"Liberation Sans", sans-serif' text-anchor="start" font-weight="normal" >Orderable:</text>
<text x="951.00" y="806.62" fill="#888" stroke="#888" stroke-width="0.22" font-size="7.0" font-family='"Liberation Sans", sans-serif' text-anchor="start" font-weight="normal" >=EVM_orderable</text>
<text x="915.00" y="814.42" fill="#1a1a1a" stroke="#1a1a1a" stroke-width="0.22" font-size="7.0" font-family='"Liberation Sans", sans-serif' text-anchor="start" font-weight="normal" >TID #:</text>
<text x="952.00" y="814.42" fill="#1a1aa0" stroke="#1a1aa0" stroke-width="0.22" font-size="7.0" font-family='"Liberation Sans", sans-serif' text-anchor="start" font-weight="normal" >N/A</text>
<text x="915.00" y="822.42" fill="#1a1a1a" stroke="#1a1a1a" stroke-width="0.22" font-size="7.0" font-family='"Liberation Sans", sans-serif' text-anchor="start" font-weight="normal" >Number:</text>
<text x="943.50" y="822.42" fill="#1a1aa0" stroke="#1a1aa0" stroke-width="0.22" font-size="7.0" font-family='"Liberation Sans", sans-serif' text-anchor="start" font-weight="normal" >INT135</text>
<text x="993.00" y="822.42" fill="#1a1a1a" stroke="#1a1a1a" stroke-width="0.22" font-size="7.0" font-family='"Liberation Sans", sans-serif' text-anchor="start" font-weight="normal" >Rev:</text>
<text x="1014.00" y="822.42" fill="#1a1aa0" stroke="#1a1aa0" stroke-width="0.22" font-size="7.0" font-family='"Liberation Sans", sans-serif' text-anchor="start" font-weight="normal" >A</text>
<text x="915.00" y="830.42" fill="#1a1a1a" stroke="#1a1a1a" stroke-width="0.22" font-size="7.0" font-family='"Liberation Sans", sans-serif' text-anchor="start" font-weight="normal" >SVN Rev:</text>
<text x="952.00" y="830.42" fill="#1a1a1a" stroke="#1a1a1a" stroke-width="0.22" font-size="7.0" font-family='"Liberation Sans", sans-serif' text-anchor="start" font-weight="normal" >Not in version control</text>
<text x="915.00" y="838.32" fill="#1a1a1a" stroke="#1a1a1a" stroke-width="0.22" font-size="7.0" font-family='"Liberation Sans", sans-serif' text-anchor="start" font-weight="normal" >Drawn By:</text>
<text x="948.00" y="838.32" fill="#1a1aa0" stroke="#1a1aa0" stroke-width="0.22" font-size="7.0" font-family='"Liberation Sans", sans-serif' text-anchor="start" font-weight="normal" >Parker Dodson</text>
<text x="915.00" y="845.82" fill="#1a1a1a" stroke="#1a1a1a" stroke-width="0.22" font-size="7.0" font-family='"Liberation Sans", sans-serif' text-anchor="start" font-weight="normal" >Engineer:</text>
<text x="948.00" y="845.82" fill="#1a1aa0" stroke="#1a1aa0" stroke-width="0.22" font-size="7.0" font-family='"Liberation Sans", sans-serif' text-anchor="start" font-weight="normal" >Parker Dodson</text>
<text x="1032.50" y="806.62" fill="#1a1a1a" stroke="#1a1a1a" stroke-width="0.22" font-size="7.0" font-family='"Liberation Sans", sans-serif' text-anchor="start" font-weight="normal" >Designed for:</text>
<text x="1076.00" y="806.62" fill="#1a1aa0" stroke="#1a1aa0" stroke-width="0.22" font-size="7.0" font-family='"Liberation Sans", sans-serif' text-anchor="start" font-weight="normal" >Public Release</text>
<text x="1157.50" y="806.62" fill="#1a1a1a" stroke="#1a1a1a" stroke-width="0.22" font-size="7.0" font-family='"Liberation Sans", sans-serif' text-anchor="start" font-weight="normal" >Mod. Date:</text>
<text x="1194.00" y="806.62" fill="#1a1a1a" stroke="#1a1a1a" stroke-width="0.22" font-size="7.0" font-family='"Liberation Sans", sans-serif' text-anchor="start" font-weight="normal" >2/10/2021</text>
<text x="1032.50" y="814.42" fill="#1a1a1a" stroke="#1a1a1a" stroke-width="0.22" font-size="7.0" font-family='"Liberation Sans", sans-serif' text-anchor="start" font-weight="normal" >Project Title:</text>
<text x="1073.50" y="814.42" fill="#1a1aa0" stroke="#1a1aa0" stroke-width="0.22" font-size="7.0" font-family='"Liberation Sans", sans-serif' text-anchor="start" font-weight="normal" >TMUX646EVM</text>
<text x="1032.50" y="822.42" fill="#1a1a1a" stroke="#1a1a1a" stroke-width="0.22" font-size="7.0" font-family='"Liberation Sans", sans-serif' text-anchor="start" font-weight="normal" >Sheet Title:</text>
<text x="1070.00" y="822.42" fill="#1a1aa0" stroke="#1a1aa0" stroke-width="0.22" font-size="7.0" font-family='"Liberation Sans", sans-serif' text-anchor="start" font-weight="normal" >TMUX646EVM DC Parameter Test Schematic</text>
<text x="1032.50" y="830.42" fill="#1a1a1a" stroke="#1a1a1a" stroke-width="0.22" font-size="7.0" font-family='"Liberation Sans", sans-serif' text-anchor="start" font-weight="normal" >Assembly Variant:</text>
<text x="1090.00" y="830.42" fill="#1a1aa0" stroke="#1a1aa0" stroke-width="0.22" font-size="7.0" font-family='"Liberation Sans", sans-serif' text-anchor="start" font-weight="normal" >[No Variations]</text>
<text x="1182.00" y="830.42" fill="#1a1a1a" stroke="#1a1a1a" stroke-width="0.22" font-size="7.0" font-family='"Liberation Sans", sans-serif' text-anchor="start" font-weight="normal" >Sheet:</text>
<text x="1203.00" y="830.42" fill="#1a1aa0" stroke="#1a1aa0" stroke-width="0.22" font-size="7.0" font-family='"Liberation Sans", sans-serif' text-anchor="start" font-weight="normal" >1</text>
<text x="1212.50" y="830.42" fill="#1a1a1a" stroke="#1a1a1a" stroke-width="0.22" font-size="7.0" font-family='"Liberation Sans", sans-serif' text-anchor="start" font-weight="normal" >of</text>
<text x="1223.00" y="830.42" fill="#1a1aa0" stroke="#1a1aa0" stroke-width="0.22" font-size="7.0" font-family='"Liberation Sans", sans-serif' text-anchor="start" font-weight="normal" >4</text>
<text x="1032.50" y="838.32" fill="#1a1a1a" stroke="#1a1a1a" stroke-width="0.22" font-size="7.0" font-family='"Liberation Sans", sans-serif' text-anchor="start" font-weight="normal" >File:</text>
<text x="1047.50" y="838.32" fill="#1a1aa0" stroke="#1a1aa0" stroke-width="0.22" font-size="7.0" font-family='"Liberation Sans", sans-serif' text-anchor="start" font-weight="normal" >TMUX646EVM_SCHEMATIC_DC.SchDoc</text>
<text x="1197.00" y="838.32" fill="#1a1a1a" stroke="#1a1a1a" stroke-width="0.22" font-size="7.0" font-family='"Liberation Sans", sans-serif' text-anchor="start" font-weight="normal" >Size:</text>
<text x="1215.00" y="838.32" fill="#1a1a1a" stroke="#1a1a1a" stroke-width="0.22" font-size="7.0" font-family='"Liberation Sans", sans-serif' text-anchor="start" font-weight="normal" >B</text>
<text x="1032.50" y="845.82" fill="#1a1a1a" stroke="#1a1a1a" stroke-width="0.22" font-size="7.0" font-family='"Liberation Sans", sans-serif' text-anchor="start" font-weight="normal" >Contact:</text>
<text x="1061.50" y="845.82" fill="#1a1aa0" stroke="#1a1aa0" stroke-width="0.22" font-size="7.0" font-family='"Liberation Sans", sans-serif' text-anchor="start" font-weight="normal" >http://www.ti.com/support</text>
<text x="1249.80" y="838.02" fill="#1a1a1a" stroke="#1a1a1a" stroke-width="0.22" font-size="7.0" font-family='"Liberation Sans", sans-serif' text-anchor="start" font-weight="normal" textLength="53.4" lengthAdjust="spacingAndGlyphs">http://www.ti.com</text>
<text x="1241.70" y="844.92" fill="#444" stroke="#444" stroke-width="0.22" font-size="5.6" font-family='"Liberation Sans", sans-serif' text-anchor="start" font-weight="normal" textLength="47" lengthAdjust="spacingAndGlyphs">© Texas Instruments</text>
<text x="1292.00" y="844.92" fill="#2020b0" stroke="#2020b0" stroke-width="0.22" font-size="5.6" font-family='"Liberation Sans", sans-serif' text-anchor="start" font-weight="normal" textLength="17" lengthAdjust="spacingAndGlyphs">2021</text>
<path d="M1245,808 H1249 V809.5 H1250.5 V811.5 H1256 V818.5 L1253,821 L1251.5,823 H1249 L1248,820.5 L1246,818.5 L1244.5,817.5 L1243,816.5 L1241,814.5 V812 H1245 Z" fill="#111"/>
<path d="M1247.5,811 h1.6 v1.5 h1.2 v1.3 h-1.2 v4 h1.4 v1.3 h-3 v-5.3 h-1 v-1.3 h1 Z M1251,813.5 h1.5 v5.5 h-1.5 Z M1251,811 h1.5 v1.3 h-1.5 Z" fill="#fff"/>
<text font-family='"Liberation Sans", sans-serif' fill="#111" stroke="#111" stroke-width="0.2"><tspan x="1260.7" y="817" font-size="8.4">T</tspan><tspan font-size="6.2" dy="0" letter-spacing="0.6">EXAS</tspan></text>
<text font-family='"Liberation Sans", sans-serif' fill="#111" stroke="#111" stroke-width="0.2"><tspan x="1260.7" y="824.8" font-size="8.4">I</tspan><tspan font-size="6.2" letter-spacing="0.65">NSTRUMENTS</tspan></text>
<text x="328.00" y="829.88" fill="#111" stroke="#111" stroke-width="0.22" font-size="6.6" font-family='"Liberation Sans", sans-serif' text-anchor="start" font-weight="normal" textLength="580" lengthAdjust="spacingAndGlyphs">Texas Instruments and/or its licensors do not warrant the accuracy or completeness of this specification or any information contained therein. Texas Instruments and/or its licensors do not</text>
<text x="328.00" y="837.58" fill="#111" stroke="#111" stroke-width="0.22" font-size="6.6" font-family='"Liberation Sans", sans-serif' text-anchor="start" font-weight="normal" textLength="573" lengthAdjust="spacingAndGlyphs">warrant that this design will meet the specifications, will be suitable for your application or fit for any particular purpose, or will operate in an implementation. Texas Instruments and/or its</text>
<text x="328.00" y="845.28" fill="#111" stroke="#111" stroke-width="0.22" font-size="6.6" font-family='"Liberation Sans", sans-serif' text-anchor="start" font-weight="normal" textLength="573" lengthAdjust="spacingAndGlyphs">licensors do not warrant that the design is production worthy. You should completely validate and test your design implementation to confirm the system functionality for your application.</text>
<rect x="463" y="3" width="427" height="31.5" rx="4.5" ry="4.5" fill="#f3f3f3"/>
<path d="M477.5,13.5 H490 L485.5,18.5 V23.5 H482 V18.5 Z" fill="#cfe6ea" stroke="#6e9db3" stroke-width="1"/>
<g stroke="#5b84d6" stroke-width="1.2" fill="#5b84d6"><path d="M515.5,12 V25.5 M509,18.7 H522"/><path d="M515.5,11.5 L513.5,14 H517.5Z M515.5,26 L513.5,23.5 H517.5Z M508.5,18.7 L511,16.7 V20.7Z M522.5,18.7 L520,16.7 V20.7Z" stroke="none"/></g>
<rect x="541.5" y="12.5" width="13" height="13" fill="none" stroke="#5b84e0" stroke-width="1.2" stroke-dasharray="2 1.5"/>
<rect x="574.5" y="13" width="1.5" height="12" fill="#8a8a8a"/><rect x="577.5" y="13" width="5.5" height="2.5" fill="#a8a8a8"/><rect x="577.5" y="17" width="8.5" height="3.8" fill="#a8a8a8"/><path d="M577.5,23.3 H583.5 M577.5,23.3 l2,-1.3 M577.5,23.3 l2,1.3" stroke="#8a8a8a" stroke-width="0.9"/>
<rect x="596" y="11" width="1" height="16" fill="#b0b0b0"/>
<g><rect x="609" y="11.5" width="8" height="14" fill="#f5cf7a" stroke="#7a5a20" stroke-width="1"/><path d="M606,14H609M606,17H609M606,20H609M606,23H609M617,14H620M617,17H620M617,20H620M617,23H620" stroke="#7a5a20" stroke-width="1"/></g>
<path d="M637.5,15 C641,15 641,13.5 644,15 S648,17 652,16.5 M637.5,20.5 C641,20.5 641,19 644,20.5 S648,22.5 652,22" fill="none" stroke="#4a7ac8" stroke-width="1.8"/>
<path d="M677,12 V18.5 M669.5,18.5 H684.5 M672,21.5 H682 M674.5,24.5 H679.5" stroke="#e05050" stroke-width="1.2"/>
<rect x="701" y="11.5" width="3.5" height="14" fill="#c8dcf4"/><path d="M701.5,11.5 H703.5 V25.5 H701.5 M703.5,18.5 L706,20 L703.5,21.5 M706,20 H709" stroke="#4a7ac8" stroke-width="1" fill="none"/><path d="M709.5,22 L711.5,17.5 M712,22 L714,17.5 M714.5,22 L716.5,17.5" stroke="#4a7ac8" stroke-width="1.6"/>
<rect x="733.5" y="14" width="15" height="10" fill="#62c07a" stroke="#3a6ad0" stroke-width="1"/><path d="M731,16H733.5M731,22H733.5M748.5,16H751M748.5,22H751" stroke="#3a6ad0" stroke-width="1"/><path d="M734.5,15.5 l2,1 l-2,1Z M734.5,21 l2,1 l-2,1Z M747.5,15.5 l-2,1 l2,1Z M747.5,21 l-2,1 l2,1Z" fill="#e8d040"/>
<path d="M764,14 H776.5 L780.5,18.5 L776.5,23 H764 Z" fill="#e9cc6c" stroke="#8c7020" stroke-width="1"/><path d="M780.5,18.5 H783" stroke="#8c7020" stroke-width="1"/>
<text x="770" y="21.2" font-size="7" font-weight="bold" font-family='"Liberation Sans", sans-serif' fill="#5a4410" text-anchor="middle">D1</text>
<circle cx="806.5" cy="18.5" r="5.8" fill="none" stroke="#e05050" stroke-width="1.2"/><path d="M797,18.5 H800.5 M806.5,16.5 V22 M805.3,22 H807.7" stroke="#e05050" stroke-width="1.1"/><circle cx="806.5" cy="14.5" r="0.8" fill="#e05050"/>
<text x="837" y="26" font-size="17.5" font-weight="bold" font-family='"Liberation Serif", serif' fill="#4d86d6" text-anchor="middle">A</text>
<path d="M862.1,23.7 A7.4,7.4 0 1 1 875.5,23.7" fill="none" stroke="#78a4dc" stroke-width="1.5"/>
<path d="M531.5,29 V33.5 H527.0 Z" fill="#222"/>
<path d="M563.0,29 V33.5 H558.5 Z" fill="#222"/>
<path d="M595.0,29 V33.5 H590.5 Z" fill="#222"/>
<path d="M660.0,29 V33.5 H655.5 Z" fill="#222"/>
<path d="M692.0,29 V33.5 H687.5 Z" fill="#222"/>
<path d="M724.0,29 V33.5 H719.5 Z" fill="#222"/>
<path d="M756.0,29 V33.5 H751.5 Z" fill="#222"/>
<path d="M788.0,29 V33.5 H783.5 Z" fill="#222"/>
<path d="M820.0,29 V33.5 H815.5 Z" fill="#222"/>
<path d="M852.0,29 V33.5 H847.5 Z" fill="#222"/>
<path d="M884.0,29 V33.5 H879.5 Z" fill="#222"/>
</svg>
</body></html>
